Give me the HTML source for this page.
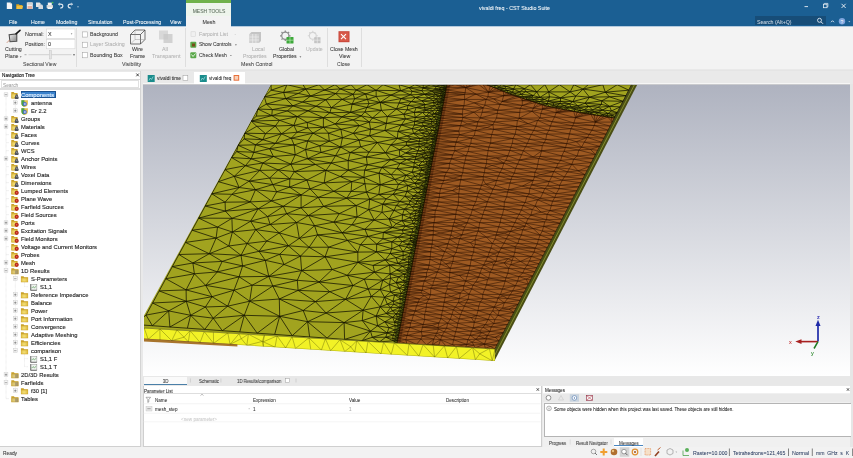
<!DOCTYPE html>
<html><head><meta charset="utf-8"><style>
html,body{margin:0;padding:0;}
body{width:853px;height:458px;overflow:hidden;position:relative;font-family:"Liberation Sans",sans-serif;}
.t{position:absolute;white-space:nowrap;line-height:1;z-index:2;-webkit-text-stroke:0.05px currentColor;will-change:transform;}
.r{position:absolute;}
svg{position:absolute;left:0;top:0;z-index:1;}
</style></head><body>
<div class="r" style="left:0px;top:0px;width:853px;height:458px;background:#e9e9e9;"></div>
<div class="r" style="left:0px;top:0px;width:853px;height:26px;background:#1b5f93;"></div>
<div class="r" style="left:186px;top:0px;width:45px;height:3px;background:#6fb24a;"></div>
<div class="r" style="left:186px;top:3px;width:45px;height:13px;background:#eef5ec;"></div>
<div class="r" style="left:186px;top:16px;width:45px;height:10px;background:#f3f3f3;"></div>
<div class="t" style="left:187.0px;top:9.00px;font-size:5.0px;color:#5a6a5a;width:44px;text-align:center">MESH TOOLS</div>
<div class="t" style="left:187.0px;top:20.00px;font-size:5.3px;color:#333;width:44px;text-align:center">Mesh</div>
<div class="t" style="left:478.7px;top:6.00px;font-size:5.33px;color:#ffffff;">vivaldi freq - CST Studio Suite</div>
<div class="t" style="left:8.9px;top:20.00px;font-size:5.25px;color:#ffffff;">File</div>
<div class="t" style="left:31.2px;top:20.00px;font-size:5.25px;color:#ffffff;">Home</div>
<div class="t" style="left:55.8px;top:20.00px;font-size:5.25px;color:#ffffff;">Modeling</div>
<div class="t" style="left:88.0px;top:20.00px;font-size:5.25px;color:#ffffff;">Simulation</div>
<div class="t" style="left:123.0px;top:20.00px;font-size:5.25px;color:#ffffff;">Post-Processing</div>
<div class="t" style="left:170.0px;top:20.00px;font-size:5.25px;color:#ffffff;">View</div>
<div class="r" style="left:755px;top:16px;width:71px;height:9px;background:#174d78;"></div>
<div class="t" style="left:756.6px;top:20.00px;font-size:5.2px;color:#c9d6e2;">Search (Alt+Q)</div>
<div class="r" style="left:0px;top:26px;width:853px;height:43px;background:#f3f3f3;"></div>
<div class="r" style="left:0px;top:26px;width:186px;height:0.8000000000000007px;background:#b4cade;"></div>
<div class="r" style="left:231px;top:26px;width:622px;height:0.8000000000000007px;background:#b4cade;"></div>
<div class="r" style="left:0px;top:69.5px;width:853px;height:1.0px;background:#e4e4e4;"></div>
<div class="r" style="left:76px;top:28px;width:1px;height:39px;background:#dedede;"></div>
<div class="r" style="left:184.5px;top:28px;width:1.0px;height:39px;background:#dedede;"></div>
<div class="r" style="left:326.5px;top:28px;width:1.0px;height:39px;background:#dedede;"></div>
<div class="r" style="left:360.5px;top:28px;width:1.0px;height:39px;background:#dedede;"></div>
<div class="t" style="left:5.3px;top:47.00px;font-size:5.3px;color:#333;">Cutting</div>
<div class="t" style="left:5.3px;top:54.00px;font-size:5.3px;color:#333;">Plane</div>
<div class="t" style="left:25.2px;top:32.00px;font-size:5.4px;color:#333;">Normal:</div>
<div class="t" style="left:25.2px;top:42.00px;font-size:5.2px;color:#333;">Position:</div>
<div class="t" style="left:48.3px;top:32.00px;font-size:5.4px;color:#222;">X</div>
<div class="t" style="left:48.0px;top:42.00px;font-size:5.4px;color:#222;">0</div>
<div class="t" style="left:23.0px;top:62.00px;font-size:5.1px;color:#444;">Sectional View</div>
<div class="t" style="left:90.2px;top:32.00px;font-size:5.25px;color:#333;">Background</div>
<div class="t" style="left:90.2px;top:42.00px;font-size:5.25px;color:#b0b0b0;">Layer Stacking</div>
<div class="t" style="left:90.2px;top:53.00px;font-size:5.25px;color:#333;">Bounding Box</div>
<div class="t" style="left:131.7px;top:47.00px;font-size:5.3px;color:#333;">Wire</div>
<div class="t" style="left:130.2px;top:54.00px;font-size:5.3px;color:#333;">Frame</div>
<div class="t" style="left:162.0px;top:47.00px;font-size:5.3px;color:#b0b0b0;">All</div>
<div class="t" style="left:152.4px;top:54.00px;font-size:5.3px;color:#b0b0b0;">Transparent</div>
<div class="t" style="left:122.0px;top:62.00px;font-size:5.3px;color:#444;">Visibility</div>
<div class="t" style="left:198.7px;top:32.00px;font-size:5.25px;color:#b0b0b0;">Farpoint List</div>
<div class="t" style="left:198.7px;top:42.00px;font-size:5.0px;color:#333;">Show Controls</div>
<div class="t" style="left:198.7px;top:53.00px;font-size:5.0px;color:#333;">Check Mesh</div>
<div class="t" style="left:252.2px;top:47.00px;font-size:5.3px;color:#b0b0b0;">Local</div>
<div class="t" style="left:243.2px;top:54.00px;font-size:5.2px;color:#b0b0b0;">Properties</div>
<div class="t" style="left:279.2px;top:47.00px;font-size:5.2px;color:#333;">Global</div>
<div class="t" style="left:273.4px;top:54.00px;font-size:5.2px;color:#333;">Properties</div>
<div class="t" style="left:305.6px;top:47.00px;font-size:5.2px;color:#b8b8b8;">Update</div>
<div class="t" style="left:241.3px;top:62.00px;font-size:5.3px;color:#444;">Mesh Control</div>
<div class="t" style="left:330.1px;top:47.00px;font-size:5.25px;color:#333;">Close Mesh</div>
<div class="t" style="left:338.5px;top:54.00px;font-size:5.3px;color:#333;">View</div>
<div class="t" style="left:337.2px;top:62.00px;font-size:5.1px;color:#444;">Close</div>
<div class="r" style="left:0px;top:71.5px;width:140px;height:374.5px;background:#ffffff;"></div>
<div class="r" style="left:0px;top:78.7px;width:140px;height:1.5999999999999943px;background:#d8d8d8;"></div>
<div class="r" style="left:1px;top:80.3px;width:138px;height:7.400000000000006px;background:#ffffff;box-sizing:border-box;border:0.5px solid #e0e0e0"></div>
<div class="r" style="left:0px;top:87.6px;width:140px;height:2.0px;background:#dedede;"></div>
<div class="r" style="left:140px;top:71px;width:1px;height:375px;background:#d4d4d4;"></div>
<div class="r" style="left:0px;top:445.6px;width:141px;height:1.0px;background:#d0d0d0;"></div>
<div class="t" style="left:2.0px;top:74.00px;font-size:4.7px;color:#111;-webkit-text-stroke:0.12px #111">Navigation Tree</div>
<div class="t" style="left:2.5px;top:84.00px;font-size:4.8px;color:#a0a0a0;">Search</div>
<div class="r" style="left:20.8px;top:90.6px;width:35.2px;height:7.700000000000003px;background:#3a82cc;box-sizing:border-box;border:0.8px solid #1b5290"></div>
<div class="t" style="left:21.2px;top:93.00px;font-size:5.85px;color:#eaf4ff;-webkit-text-stroke:0.12px #eaf4ff">Components</div>
<div class="t" style="left:30.5px;top:101.00px;font-size:5.85px;color:#1e1e1e;-webkit-text-stroke:0.12px #1e1e1e">antenna</div>
<div class="t" style="left:30.5px;top:109.00px;font-size:5.85px;color:#1e1e1e;-webkit-text-stroke:0.12px #1e1e1e">Er 2.2</div>
<div class="t" style="left:21.2px;top:117.00px;font-size:5.85px;color:#1e1e1e;-webkit-text-stroke:0.12px #1e1e1e">Groups</div>
<div class="t" style="left:21.2px;top:125.00px;font-size:5.85px;color:#1e1e1e;-webkit-text-stroke:0.12px #1e1e1e">Materials</div>
<div class="t" style="left:21.2px;top:133.00px;font-size:5.85px;color:#1e1e1e;-webkit-text-stroke:0.12px #1e1e1e">Faces</div>
<div class="t" style="left:21.2px;top:141.00px;font-size:5.85px;color:#1e1e1e;-webkit-text-stroke:0.12px #1e1e1e">Curves</div>
<div class="t" style="left:21.2px;top:149.00px;font-size:5.85px;color:#1e1e1e;-webkit-text-stroke:0.12px #1e1e1e">WCS</div>
<div class="t" style="left:21.2px;top:157.00px;font-size:5.85px;color:#1e1e1e;-webkit-text-stroke:0.12px #1e1e1e">Anchor Points</div>
<div class="t" style="left:21.2px;top:165.00px;font-size:5.85px;color:#1e1e1e;-webkit-text-stroke:0.12px #1e1e1e">Wires</div>
<div class="t" style="left:21.2px;top:173.00px;font-size:5.85px;color:#1e1e1e;-webkit-text-stroke:0.12px #1e1e1e">Voxel Data</div>
<div class="t" style="left:21.2px;top:181.00px;font-size:5.85px;color:#1e1e1e;-webkit-text-stroke:0.12px #1e1e1e">Dimensions</div>
<div class="t" style="left:21.2px;top:189.00px;font-size:5.85px;color:#1e1e1e;-webkit-text-stroke:0.12px #1e1e1e">Lumped Elements</div>
<div class="t" style="left:21.2px;top:197.00px;font-size:5.85px;color:#1e1e1e;-webkit-text-stroke:0.12px #1e1e1e">Plane Wave</div>
<div class="t" style="left:21.2px;top:205.00px;font-size:5.85px;color:#1e1e1e;-webkit-text-stroke:0.12px #1e1e1e">Farfield Sources</div>
<div class="t" style="left:21.2px;top:213.00px;font-size:5.85px;color:#1e1e1e;-webkit-text-stroke:0.12px #1e1e1e">Field Sources</div>
<div class="t" style="left:21.2px;top:221.00px;font-size:5.85px;color:#1e1e1e;-webkit-text-stroke:0.12px #1e1e1e">Ports</div>
<div class="t" style="left:21.2px;top:229.00px;font-size:5.85px;color:#1e1e1e;-webkit-text-stroke:0.12px #1e1e1e">Excitation Signals</div>
<div class="t" style="left:21.2px;top:237.00px;font-size:5.85px;color:#1e1e1e;-webkit-text-stroke:0.12px #1e1e1e">Field Monitors</div>
<div class="t" style="left:21.2px;top:245.00px;font-size:5.85px;color:#1e1e1e;-webkit-text-stroke:0.12px #1e1e1e">Voltage and Current Monitors</div>
<div class="t" style="left:21.2px;top:253.00px;font-size:5.85px;color:#1e1e1e;-webkit-text-stroke:0.12px #1e1e1e">Probes</div>
<div class="t" style="left:21.2px;top:261.00px;font-size:5.85px;color:#1e1e1e;-webkit-text-stroke:0.12px #1e1e1e">Mesh</div>
<div class="t" style="left:21.2px;top:269.00px;font-size:5.85px;color:#1e1e1e;-webkit-text-stroke:0.12px #1e1e1e">1D Results</div>
<div class="t" style="left:30.5px;top:277.00px;font-size:5.85px;color:#1e1e1e;-webkit-text-stroke:0.12px #1e1e1e">S-Parameters</div>
<div class="t" style="left:39.8px;top:285.00px;font-size:5.85px;color:#1e1e1e;-webkit-text-stroke:0.12px #1e1e1e">S1,1</div>
<div class="t" style="left:30.5px;top:293.00px;font-size:5.85px;color:#1e1e1e;-webkit-text-stroke:0.12px #1e1e1e">Reference Impedance</div>
<div class="t" style="left:30.5px;top:301.00px;font-size:5.85px;color:#1e1e1e;-webkit-text-stroke:0.12px #1e1e1e">Balance</div>
<div class="t" style="left:30.5px;top:309.00px;font-size:5.85px;color:#1e1e1e;-webkit-text-stroke:0.12px #1e1e1e">Power</div>
<div class="t" style="left:30.5px;top:317.00px;font-size:5.85px;color:#1e1e1e;-webkit-text-stroke:0.12px #1e1e1e">Port Information</div>
<div class="t" style="left:30.5px;top:325.00px;font-size:5.85px;color:#1e1e1e;-webkit-text-stroke:0.12px #1e1e1e">Convergence</div>
<div class="t" style="left:30.5px;top:333.00px;font-size:5.85px;color:#1e1e1e;-webkit-text-stroke:0.12px #1e1e1e">Adaptive Meshing</div>
<div class="t" style="left:30.5px;top:341.00px;font-size:5.85px;color:#1e1e1e;-webkit-text-stroke:0.12px #1e1e1e">Efficiencies</div>
<div class="t" style="left:30.5px;top:349.00px;font-size:5.85px;color:#1e1e1e;-webkit-text-stroke:0.12px #1e1e1e">comparison</div>
<div class="t" style="left:39.8px;top:357.00px;font-size:5.85px;color:#1e1e1e;-webkit-text-stroke:0.12px #1e1e1e">S1,1 F</div>
<div class="t" style="left:39.8px;top:365.00px;font-size:5.85px;color:#1e1e1e;-webkit-text-stroke:0.12px #1e1e1e">S1,1 T</div>
<div class="t" style="left:21.2px;top:373.00px;font-size:5.85px;color:#1e1e1e;-webkit-text-stroke:0.12px #1e1e1e">2D/3D Results</div>
<div class="t" style="left:21.2px;top:381.00px;font-size:5.85px;color:#1e1e1e;-webkit-text-stroke:0.12px #1e1e1e">Farfields</div>
<div class="t" style="left:30.5px;top:389.00px;font-size:5.85px;color:#1e1e1e;-webkit-text-stroke:0.12px #1e1e1e">f30 [1]</div>
<div class="t" style="left:21.2px;top:397.00px;font-size:5.85px;color:#1e1e1e;-webkit-text-stroke:0.12px #1e1e1e">Tables</div>
<div class="r" style="left:143px;top:70.5px;width:707px;height:12.0px;background:#e9e9e9;"></div>
<div class="r" style="left:143px;top:82.5px;width:707px;height:1.0px;background:#f6f6f6;"></div>
<div class="r" style="left:194.2px;top:71.5px;width:51.30000000000001px;height:12.0px;background:#ffffff;"></div>
<div class="t" style="left:156.9px;top:77.00px;font-size:4.85px;color:#222;">vivaldi time</div>
<div class="t" style="left:209.0px;top:77.00px;font-size:4.7px;color:#222;">vivaldi freq</div>
<div class="r" style="left:143px;top:83.5px;width:707px;height:292.0px;background:linear-gradient(#c9cacd 0px,#c9cacd 1px,#afb3c0 1.5px,#afb3c0 2px,#ffffff 292px);"></div>
<div class="t" style="left:816.6px;top:315.00px;font-size:5.5px;color:#2a2ab0;">z</div>
<div class="t" style="left:788.8px;top:340.00px;font-size:5.5px;color:#c02020;">x</div>
<div class="t" style="left:810.8px;top:351.00px;font-size:5.5px;color:#208020;">y</div>
<div class="r" style="left:143px;top:375.5px;width:707px;height:9.0px;background:#e8e8e8;"></div>
<div class="r" style="left:143.5px;top:376.5px;width:43.5px;height:8.5px;background:#fafafa;"></div>
<div class="r" style="left:143.5px;top:384px;width:43.5px;height:1px;background:#4a7fa8;"></div>
<div class="t" style="left:143.5px;top:380.00px;font-size:4.5px;color:#333;width:43.5px;text-align:center">3D</div>
<div class="t" style="left:198.6px;top:380.00px;font-size:4.5px;color:#333;transform:scaleX(0.95);transform-origin:0 0">Schematic</div>
<div class="t" style="left:237.3px;top:380.00px;font-size:4.5px;color:#333;transform:scaleX(0.95);transform-origin:0 0">1D Results\comparison</div>
<div class="r" style="left:850px;top:83.5px;width:3px;height:374.5px;background:#e6e6e6;"></div>
<div class="r" style="left:142.5px;top:386.3px;width:398.5px;height:60.30000000000001px;background:#ffffff;"></div>
<div class="r" style="left:142.5px;top:393.3px;width:398.5px;height:1.0px;background:#dedede;"></div>
<div class="r" style="left:142.5px;top:445.6px;width:398.5px;height:1.0px;background:#cfcfcf;"></div>
<div class="r" style="left:142.5px;top:386.3px;width:1.0999999999999943px;height:60.30000000000001px;background:#cfcfcf;"></div>
<div class="r" style="left:540.5px;top:386.3px;width:1.0px;height:60.30000000000001px;background:#cfcfcf;"></div>
<div class="t" style="left:144.2px;top:390.00px;font-size:4.6px;color:#222;transform:scaleX(0.96);transform-origin:0 0">Parameter List</div>
<div class="t" style="left:155.2px;top:399.00px;font-size:4.6px;color:#333;">Name</div>
<div class="t" style="left:252.5px;top:399.00px;font-size:4.6px;color:#333;">Expression</div>
<div class="t" style="left:349.0px;top:399.00px;font-size:4.6px;color:#333;">Value</div>
<div class="t" style="left:446.0px;top:399.00px;font-size:4.6px;color:#333;">Description</div>
<div class="t" style="left:155.2px;top:408.00px;font-size:4.6px;color:#333;">mesh_step</div>
<div class="t" style="left:252.5px;top:408.00px;font-size:4.6px;color:#333;">1</div>
<div class="t" style="left:349.0px;top:408.00px;font-size:4.6px;color:#aaa;">1</div>
<div class="t" style="left:181.0px;top:418.00px;font-size:4.6px;color:#c8c8c8;">&lt;new parameter&gt;</div>
<div class="r" style="left:542.7px;top:386.3px;width:307.29999999999995px;height:60.30000000000001px;background:#f0f0f0;"></div>
<div class="r" style="left:542.7px;top:386.3px;width:307.29999999999995px;height:7.199999999999989px;background:#ffffff;"></div>
<div class="t" style="left:544.7px;top:389.00px;font-size:4.6px;color:#222;transform:scaleX(0.95);transform-origin:0 0">Messages</div>
<div class="r" style="left:542.7px;top:393.5px;width:307.29999999999995px;height:8.5px;background:#e9e9e9;"></div>
<div class="r" style="left:543.7px;top:402.8px;width:307.29999999999995px;height:34.19999999999999px;background:#ffffff;box-sizing:border-box;border:0.6px solid #b4b4b4;border-right:none"></div>
<div class="t" style="left:554.3px;top:408.00px;font-size:4.48px;color:#222;">Some objects were hidden when this project was last saved. These objects are still hidden.</div>
<div class="r" style="left:614.3px;top:438px;width:29.0px;height:8.5px;background:#ffffff;"></div>
<div class="r" style="left:614.3px;top:445.2px;width:29.0px;height:1.1999999999999886px;background:#4a86c0;"></div>
<div class="t" style="left:548.5px;top:442.00px;font-size:4.6px;color:#333;transform:scaleX(0.93);transform-origin:0 0">Progress</div>
<div class="t" style="left:575.6px;top:442.00px;font-size:4.6px;color:#333;transform:scaleX(0.93);transform-origin:0 0">Result Navigator</div>
<div class="t" style="left:619.0px;top:442.00px;font-size:4.6px;color:#333;transform:scaleX(0.93);transform-origin:0 0">Messages</div>
<div class="r" style="left:0px;top:446.6px;width:853px;height:11.399999999999977px;background:#f2f2f2;"></div>
<div class="t" style="left:2.8px;top:452.00px;font-size:4.85px;color:#333;">Ready</div>
<div class="t" style="left:693.3px;top:451.00px;font-size:5.24px;color:#2c3e62;">Raster=10.000</div>
<div class="t" style="left:732.7px;top:451.00px;font-size:5.23px;color:#2c3e62;">Tetrahedrons=121,465</div>
<div class="t" style="left:791.8px;top:451.00px;font-size:5.3px;color:#2c3e62;">Normal</div>
<div class="t" style="left:815.6px;top:451.00px;font-size:5.1px;color:#2c3e62;">mm&nbsp;&nbsp;GHz&nbsp;&nbsp;s&nbsp;&nbsp;K</div>
<svg width="853" height="458" viewBox="0 0 853 458"><defs><radialGradient id="fg" cx="0.45" cy="0.55" r="0.7"><stop offset="0" stop-color="#f6e47c"/><stop offset="1" stop-color="#d4ac30"/></radialGradient><radialGradient id="fr" cx="0.45" cy="0.55" r="0.7"><stop offset="0" stop-color="#e8d480"/><stop offset="1" stop-color="#bfa040"/></radialGradient></defs><path d="M6.8 2.4h3.6l1.7 1.7v4.9h-5.3z" fill="#f6f6f6"/><path d="M10.4 2.4v1.7h1.7" fill="#c8c8c8"/>
<path d="M16.2 4.2h2.6l0.8 0.9h2.6v3.8h-6z" fill="#d9a020"/><path d="M16.8 5.8h6.4l-1 3.1h-5.6z" fill="#f0c040"/>
<rect x="26.8" y="2.4" width="6" height="6.5" fill="#ececec"/><rect x="27.6" y="2.4" width="4.4" height="2.4" fill="#d0d0d0"/><rect x="27.6" y="6" width="4.4" height="2.9" fill="#e6b0a0"/>
<path d="M36 2.6h3.6l1 1v3.4h-4.6z" fill="#e6e6e6"/><path d="M38.4 4.4h3.6l1 1v3.6h-4.6z" fill="#d4dae0"/>
<rect x="46.6" y="5" width="6.4" height="3.2" rx="0.6" fill="#d8d8d8"/><rect x="47.8" y="2.6" width="4" height="2.6" fill="#f4f4f4"/><rect x="47.6" y="7.4" width="4.4" height="1.6" fill="#f8f8f8"/><circle cx="52.6" cy="2.6" r="0.9" fill="#4cc050"/>
<path d="M58 4.2 L59.6 2.6 L59.6 5.8Z" fill="#e8eef4"/><path d="M59.5 4.2 Q63.2 3.8 62.8 6.5 Q62.3 8.2 60.2 8" stroke="#e8eef4" stroke-width="1.1" fill="none"/>
<path d="M73 4.2 L71.4 2.6 L71.4 5.8Z" fill="#e8eef4"/><path d="M71.5 4.2 Q67.8 3.8 68.2 6.5 Q68.7 8.2 70.8 8" stroke="#e8eef4" stroke-width="1.1" fill="none"/>
<path d="M77.2 6.8h1.6" stroke="#c8d4e0" stroke-width="0.8"/>
<path d="M804.5 6.6h3.5" stroke="#e8eef4" stroke-width="0.9"/>
<rect x="823.5" y="4.2" width="3.5" height="3.5" fill="none" stroke="#e8eef4" stroke-width="0.8"/><path d="M824.5 4.2v-0.8h3.4v3.4h-0.9" fill="none" stroke="#e8eef4" stroke-width="0.7"/>
<path d="M841.5 3.8l4.2 4.2M845.7 3.8l-4.2 4.2" stroke="#f0f4f8" stroke-width="0.9"/>
<circle cx="819.5" cy="20.3" r="2" fill="none" stroke="#e0e8f0" stroke-width="0.9"/><path d="M821 21.8l2 2" stroke="#e0e8f0" stroke-width="1"/>
<path d="M831 22.2l1.5-1.5l1.5 1.5" stroke="#e0e8f0" stroke-width="0.9" fill="none"/>
<circle cx="842" cy="21.3" r="3.2" fill="#7fa6de"/><text x="840.6" y="23.5" font-size="5" fill="#fff" font-family="Liberation Sans">?</text>
<path d="M848.3 21.2h2l-1 1z" fill="#d0dcea"/>
<defs><linearGradient id="cpg" x1="0" y1="0" x2="1" y2="1"><stop offset="0" stop-color="#e8e8e8"/><stop offset="1" stop-color="#8a8a8a"/></linearGradient></defs>
<path d="M8.5 34.3 L17.3 33.2 L17.3 41.8 L9.5 42.3Z" fill="#4a4a4a"/><path d="M9.7 35.2 L16.3 34.4 L16.3 40.9 L10.4 41.2Z" fill="url(#cpg)"/>
<path d="M16 33.8 L20 30.3" stroke="#1a1a1a" stroke-width="1.6" stroke-linecap="round"/><path d="M6.8 42.8 L9.6 40" stroke="#c07050" stroke-width="0.7"/>
<rect x="46.5" y="29" width="28.5" height="9.3" fill="#fff" stroke="#cfcfcf" stroke-width="0.5"/>
<rect x="46.5" y="39.5" width="28.5" height="9.3" fill="#fff" stroke="#cfcfcf" stroke-width="0.5"/>
<path d="M70.8 33.6h1.6l-0.8 0.9z" fill="#555"/>
<path d="M24.5 54.7h2" stroke="#777" stroke-width="0.6"/>
<path d="M28.5 54.7h43" stroke="#c8c8c8" stroke-width="0.8"/>
<rect x="49.2" y="50.5" width="2.4" height="8.5" fill="#e4e4e4" stroke="#bdbdbd" stroke-width="0.4"/>
<circle cx="74" cy="54.7" r="0.8" fill="#555"/>
<path d="M19.8 56.5h1.8l-0.9 0.9z" fill="#333"/>
<rect x="82.3" y="31.9" width="5.2" height="5.2" fill="#fff" stroke="#9a9a9a" stroke-width="0.5"/>
<rect x="82.3" y="42.199999999999996" width="5.2" height="5.2" fill="#fff" stroke="#9a9a9a" stroke-width="0.5"/>
<rect x="82.3" y="52.6" width="5.2" height="5.2" fill="#fff" stroke="#9a9a9a" stroke-width="0.5"/>
<g fill="none" stroke="#3a3a3a" stroke-width="0.7"><path d="M130.5 34.5 L135 30 L145 30 L145 39.5 L140.5 44 L130.5 44Z"/><path d="M130.5 34.5 L140.5 34.5 L145 30 M140.5 34.5 L140.5 44"/><path d="M135 30 L135 39.5 L145 39.5 M135 39.5 L130.5 44" stroke="#888" stroke-width="0.4"/></g>
<rect x="159" y="30.5" width="9" height="9" fill="#d8d8d8"/><rect x="163.5" y="34" width="9" height="9" fill="#c8c8c8" opacity="0.8"/>
<rect x="191" y="31.8" width="4.3" height="4.6" fill="#f0f0f0" stroke="#cfcfcf" stroke-width="0.5"/>
<rect x="190.3" y="41.8" width="6" height="6" rx="1" fill="#5aa84a"/><rect x="192" y="43.5" width="3" height="3" fill="#7a4a1a"/>
<rect x="190.3" y="52.2" width="6" height="6" rx="1" fill="#5aa84a"/><path d="M191.5 54.5 l1.5 2 l2.5 -3" stroke="#fff" stroke-width="0.8" fill="none"/>
<path d="M234.5 34h1.4l-0.7 0.8z" fill="#bbb"/><path d="M235 44.6h1.8l-0.9 0.9z" fill="#333"/><path d="M230 55.2h1.8l-0.9 0.9z" fill="#333"/>
<path d="M249.5 34l2-2h9.5v9l-2 2h-9.5z" fill="#c4c4c4"/><path d="M249.5 34h9.5v9h-9.5z" fill="#d0d0d0"/><path d="M249.5 37h9.5M249.5 40h9.5M252.7 34v9M255.9 34v9" stroke="#f2f2f2" stroke-width="0.6"/>
<g fill="none" stroke="#8c8c8c" stroke-width="1.2"><circle cx="285.3" cy="35.8" r="3.6"/></g><g stroke="#8c8c8c" stroke-width="1.3"><path d="M285.3 30.5v1.6M285.3 39.5v1.6M280 35.8h1.6M289 35.8h1.6M281.5 32l1.1 1.1M288 38.5l1.1 1.1M281.5 39.6l1.1-1.1M288 33.1l1.1-1.1"/></g><circle cx="285.3" cy="35.8" r="1.6" fill="#f3f3f3"/>
<rect x="286.5" y="37" width="7" height="6.5" rx="0.5" fill="#3da83a"/><path d="M286.5 40.2h7M290 37v6.5" stroke="#c8f0c0" stroke-width="0.6"/>
<g fill="none" stroke="#d4d4d4" stroke-width="1.1"><circle cx="312.8" cy="35.8" r="3.4"/></g><g stroke="#d4d4d4" stroke-width="1.1"><path d="M312.8 30.8v1.4M312.8 39.4v1.4M307.8 35.8h1.4M316.4 35.8h1.4M309.3 32.3l1 1M315.3 32.3l-1 1"/></g>
<rect x="314.2" y="37.2" width="6.3" height="6" fill="#c4c4c4"/><path d="M314.2 40.2h6.3M317.3 37.2v6" stroke="#eeeeee" stroke-width="0.6"/>
<path d="M299.5 56.5h1.8l-0.9 0.9z" fill="#333"/>
<rect x="338.5" y="31.2" width="11" height="11" fill="#c8463a"/><rect x="339.5" y="32.2" width="9" height="9" fill="#d85a4a"/><path d="M341 34.2l5 5M346 34.2l-5 5" stroke="#fff" stroke-width="1.1"/>
<path d="M136.3 73.5l2.6 2.8M138.9 73.5l-2.6 2.8" stroke="#222" stroke-width="0.8"/>
<g stroke="#cfcfcf" stroke-width="0.5" stroke-dasharray="0.6 0.6"><path d="M6 94.7V398.7"/><path d="M15.3 102.7v8 M15.3 270.7v80 M24.5 278.7v8 M24.5 350.7v16 M15.3 382.7v8"/></g>
<rect x="4.1" y="92.8" width="3.8" height="3.8" fill="#f6f6f6" stroke="#c4c4c4" stroke-width="0.4"/><path d="M4.8 94.7h2.4" stroke="#555" stroke-width="0.5"/>
<path d="M11.3 92.0h2.4l0.8 1h3v5.6h-6.2z" fill="#c9a028"/><rect x="11.700000000000001" y="93.5" width="5.6" height="4.7" fill="url(#fg)"/>
<path d="M15.9 94.3l1.5 0.2l1.3 3.2l-0.5 1.4h-3l-0.6-1.4z" fill="#4e525c"/><path d="M16.5 95.7l0.6 1.6" stroke="#d8d8d8" stroke-width="0.6"/>
<rect x="13.4" y="100.8" width="3.8" height="3.8" fill="#f6f6f6" stroke="#c4c4c4" stroke-width="0.4"/><path d="M14.100000000000001 102.7h2.4" stroke="#555" stroke-width="0.5"/><path d="M15.3 101.5v2.4" stroke="#555" stroke-width="0.5"/>
<path d="M21.4 100.3h6.5v3.2q0 2.8-3.2 3.4q-3.3-0.6-3.3-3.4z" fill="#e2c050"/><path d="M21.4 100.3h3v6.5q-3-0.6-3-3.3z" fill="#4aa04a"/><circle cx="24.9" cy="104.0" r="1.9" fill="#4a6ad0"/><circle cx="24.9" cy="104.0" r="0.8" fill="#fff"/>
<rect x="13.4" y="108.8" width="3.8" height="3.8" fill="#f6f6f6" stroke="#c4c4c4" stroke-width="0.4"/><path d="M14.100000000000001 110.7h2.4" stroke="#555" stroke-width="0.5"/><path d="M15.3 109.5v2.4" stroke="#555" stroke-width="0.5"/>
<path d="M21.4 108.3h6.5v3.2q0 2.8-3.2 3.4q-3.3-0.6-3.3-3.4z" fill="#e2c050"/><path d="M21.4 108.3h3v6.5q-3-0.6-3-3.3z" fill="#4aa04a"/><circle cx="24.9" cy="112.0" r="1.9" fill="#4a6ad0"/><circle cx="24.9" cy="112.0" r="0.8" fill="#fff"/>
<rect x="4.1" y="116.8" width="3.8" height="3.8" fill="#f6f6f6" stroke="#c4c4c4" stroke-width="0.4"/><path d="M4.8 118.7h2.4" stroke="#555" stroke-width="0.5"/><path d="M6.0 117.5v2.4" stroke="#555" stroke-width="0.5"/>
<path d="M11.3 116.0h2.4l0.8 1h3v5.6h-6.2z" fill="#c9a028"/><rect x="11.700000000000001" y="117.5" width="5.6" height="4.7" fill="url(#fg)"/>
<path d="M15.9 118.3l1.5 0.2l1.3 3.2l-0.5 1.4h-3l-0.6-1.4z" fill="#4e525c"/><path d="M16.5 119.7l0.6 1.6" stroke="#d8d8d8" stroke-width="0.6"/>
<rect x="4.1" y="124.8" width="3.8" height="3.8" fill="#f6f6f6" stroke="#c4c4c4" stroke-width="0.4"/><path d="M4.8 126.7h2.4" stroke="#555" stroke-width="0.5"/><path d="M6.0 125.5v2.4" stroke="#555" stroke-width="0.5"/>
<path d="M11.3 124.0h2.4l0.8 1h3v5.6h-6.2z" fill="#c9a028"/><rect x="11.700000000000001" y="125.5" width="5.6" height="4.7" fill="url(#fg)"/>
<path d="M15.9 126.3l1.5 0.2l1.3 3.2l-0.5 1.4h-3l-0.6-1.4z" fill="#4e525c"/><path d="M16.5 127.7l0.6 1.6" stroke="#d8d8d8" stroke-width="0.6"/>
<path d="M6.0 134.7h3.5" stroke="#cfcfcf" stroke-width="0.5" stroke-dasharray="0.6 0.6"/>
<path d="M11.3 132.0h2.4l0.8 1h3v5.6h-6.2z" fill="#c9a028"/><rect x="11.700000000000001" y="133.5" width="5.6" height="4.7" fill="url(#fg)"/>
<path d="M15.9 134.29999999999998l1.5 0.2l1.3 3.2l-0.5 1.4h-3l-0.6-1.4z" fill="#4e525c"/><path d="M16.5 135.7l0.6 1.6" stroke="#d8d8d8" stroke-width="0.6"/>
<path d="M6.0 142.7h3.5" stroke="#cfcfcf" stroke-width="0.5" stroke-dasharray="0.6 0.6"/>
<path d="M11.3 140.0h2.4l0.8 1h3v5.6h-6.2z" fill="#c9a028"/><rect x="11.700000000000001" y="141.5" width="5.6" height="4.7" fill="url(#fg)"/>
<path d="M15.9 142.29999999999998l1.5 0.2l1.3 3.2l-0.5 1.4h-3l-0.6-1.4z" fill="#4e525c"/><path d="M16.5 143.7l0.6 1.6" stroke="#d8d8d8" stroke-width="0.6"/>
<path d="M6.0 150.7h3.5" stroke="#cfcfcf" stroke-width="0.5" stroke-dasharray="0.6 0.6"/>
<path d="M11.3 148.0h2.4l0.8 1h3v5.6h-6.2z" fill="#c9a028"/><rect x="11.700000000000001" y="149.5" width="5.6" height="4.7" fill="url(#fg)"/>
<path d="M15.9 150.29999999999998l1.5 0.2l1.3 3.2l-0.5 1.4h-3l-0.6-1.4z" fill="#4e525c"/><path d="M16.5 151.7l0.6 1.6" stroke="#d8d8d8" stroke-width="0.6"/>
<rect x="4.1" y="156.79999999999998" width="3.8" height="3.8" fill="#f6f6f6" stroke="#c4c4c4" stroke-width="0.4"/><path d="M4.8 158.7h2.4" stroke="#555" stroke-width="0.5"/><path d="M6.0 157.5v2.4" stroke="#555" stroke-width="0.5"/>
<path d="M11.3 156.0h2.4l0.8 1h3v5.6h-6.2z" fill="#c9a028"/><rect x="11.700000000000001" y="157.5" width="5.6" height="4.7" fill="url(#fg)"/>
<path d="M15.9 158.29999999999998l1.5 0.2l1.3 3.2l-0.5 1.4h-3l-0.6-1.4z" fill="#4e525c"/><path d="M16.5 159.7l0.6 1.6" stroke="#d8d8d8" stroke-width="0.6"/>
<path d="M6.0 166.7h3.5" stroke="#cfcfcf" stroke-width="0.5" stroke-dasharray="0.6 0.6"/>
<path d="M11.3 164.0h2.4l0.8 1h3v5.6h-6.2z" fill="#c9a028"/><rect x="11.700000000000001" y="165.5" width="5.6" height="4.7" fill="url(#fg)"/>
<path d="M15.9 166.29999999999998l1.5 0.2l1.3 3.2l-0.5 1.4h-3l-0.6-1.4z" fill="#4e525c"/><path d="M16.5 167.7l0.6 1.6" stroke="#d8d8d8" stroke-width="0.6"/>
<path d="M6.0 174.7h3.5" stroke="#cfcfcf" stroke-width="0.5" stroke-dasharray="0.6 0.6"/>
<path d="M11.3 172.0h2.4l0.8 1h3v5.6h-6.2z" fill="#c9a028"/><rect x="11.700000000000001" y="173.5" width="5.6" height="4.7" fill="url(#fg)"/>
<path d="M15.9 174.29999999999998l1.5 0.2l1.3 3.2l-0.5 1.4h-3l-0.6-1.4z" fill="#4e525c"/><path d="M16.5 175.7l0.6 1.6" stroke="#d8d8d8" stroke-width="0.6"/>
<path d="M6.0 182.7h3.5" stroke="#cfcfcf" stroke-width="0.5" stroke-dasharray="0.6 0.6"/>
<path d="M11.3 180.0h2.4l0.8 1h3v5.6h-6.2z" fill="#c9a028"/><rect x="11.700000000000001" y="181.5" width="5.6" height="4.7" fill="url(#fg)"/>
<path d="M15.9 182.29999999999998l1.5 0.2l1.3 3.2l-0.5 1.4h-3l-0.6-1.4z" fill="#4e525c"/><path d="M16.5 183.7l0.6 1.6" stroke="#d8d8d8" stroke-width="0.6"/>
<path d="M6.0 190.7h3.5" stroke="#cfcfcf" stroke-width="0.5" stroke-dasharray="0.6 0.6"/>
<path d="M11.3 188.0h2.4l0.8 1h3v5.6h-6.2z" fill="#c9a028"/><rect x="11.700000000000001" y="189.5" width="5.6" height="4.7" fill="url(#fg)"/>
<circle cx="16.700000000000003" cy="192.79999999999998" r="2.1" fill="#b8281a"/><circle cx="16.700000000000003" cy="192.79999999999998" r="0.7" fill="#e07060"/>
<path d="M6.0 198.7h3.5" stroke="#cfcfcf" stroke-width="0.5" stroke-dasharray="0.6 0.6"/>
<path d="M11.3 196.0h2.4l0.8 1h3v5.6h-6.2z" fill="#c9a028"/><rect x="11.700000000000001" y="197.5" width="5.6" height="4.7" fill="url(#fg)"/>
<circle cx="16.700000000000003" cy="200.79999999999998" r="2.1" fill="#b8281a"/><circle cx="16.700000000000003" cy="200.79999999999998" r="0.7" fill="#e07060"/>
<path d="M6.0 206.7h3.5" stroke="#cfcfcf" stroke-width="0.5" stroke-dasharray="0.6 0.6"/>
<path d="M11.3 204.0h2.4l0.8 1h3v5.6h-6.2z" fill="#c9a028"/><rect x="11.700000000000001" y="205.5" width="5.6" height="4.7" fill="url(#fg)"/>
<circle cx="16.700000000000003" cy="208.79999999999998" r="2.1" fill="#b8281a"/><circle cx="16.700000000000003" cy="208.79999999999998" r="0.7" fill="#e07060"/>
<path d="M6.0 214.7h3.5" stroke="#cfcfcf" stroke-width="0.5" stroke-dasharray="0.6 0.6"/>
<path d="M11.3 212.0h2.4l0.8 1h3v5.6h-6.2z" fill="#c9a028"/><rect x="11.700000000000001" y="213.5" width="5.6" height="4.7" fill="url(#fg)"/>
<circle cx="16.700000000000003" cy="216.79999999999998" r="2.1" fill="#b8281a"/><circle cx="16.700000000000003" cy="216.79999999999998" r="0.7" fill="#e07060"/>
<rect x="4.1" y="220.79999999999998" width="3.8" height="3.8" fill="#f6f6f6" stroke="#c4c4c4" stroke-width="0.4"/><path d="M4.8 222.7h2.4" stroke="#555" stroke-width="0.5"/><path d="M6.0 221.5v2.4" stroke="#555" stroke-width="0.5"/>
<path d="M11.3 220.0h2.4l0.8 1h3v5.6h-6.2z" fill="#c9a028"/><rect x="11.700000000000001" y="221.5" width="5.6" height="4.7" fill="url(#fg)"/>
<circle cx="16.700000000000003" cy="224.79999999999998" r="2.1" fill="#b8281a"/><circle cx="16.700000000000003" cy="224.79999999999998" r="0.7" fill="#e07060"/>
<rect x="4.1" y="228.79999999999998" width="3.8" height="3.8" fill="#f6f6f6" stroke="#c4c4c4" stroke-width="0.4"/><path d="M4.8 230.7h2.4" stroke="#555" stroke-width="0.5"/><path d="M6.0 229.5v2.4" stroke="#555" stroke-width="0.5"/>
<path d="M11.3 228.0h2.4l0.8 1h3v5.6h-6.2z" fill="#c9a028"/><rect x="11.700000000000001" y="229.5" width="5.6" height="4.7" fill="url(#fg)"/>
<circle cx="16.700000000000003" cy="232.79999999999998" r="2.1" fill="#b8281a"/><circle cx="16.700000000000003" cy="232.79999999999998" r="0.7" fill="#e07060"/>
<rect x="4.1" y="236.79999999999998" width="3.8" height="3.8" fill="#f6f6f6" stroke="#c4c4c4" stroke-width="0.4"/><path d="M4.8 238.7h2.4" stroke="#555" stroke-width="0.5"/><path d="M6.0 237.5v2.4" stroke="#555" stroke-width="0.5"/>
<path d="M11.3 236.0h2.4l0.8 1h3v5.6h-6.2z" fill="#c9a028"/><rect x="11.700000000000001" y="237.5" width="5.6" height="4.7" fill="url(#fg)"/>
<circle cx="16.700000000000003" cy="240.79999999999998" r="2.1" fill="#b8281a"/><circle cx="16.700000000000003" cy="240.79999999999998" r="0.7" fill="#e07060"/>
<path d="M6.0 246.7h3.5" stroke="#cfcfcf" stroke-width="0.5" stroke-dasharray="0.6 0.6"/>
<path d="M11.3 244.0h2.4l0.8 1h3v5.6h-6.2z" fill="#c9a028"/><rect x="11.700000000000001" y="245.5" width="5.6" height="4.7" fill="url(#fg)"/>
<circle cx="16.700000000000003" cy="248.79999999999998" r="2.1" fill="#b8281a"/><circle cx="16.700000000000003" cy="248.79999999999998" r="0.7" fill="#e07060"/>
<path d="M6.0 254.7h3.5" stroke="#cfcfcf" stroke-width="0.5" stroke-dasharray="0.6 0.6"/>
<path d="M11.3 252.0h2.4l0.8 1h3v5.6h-6.2z" fill="#c9a028"/><rect x="11.700000000000001" y="253.5" width="5.6" height="4.7" fill="url(#fg)"/>
<circle cx="16.700000000000003" cy="256.8" r="2.1" fill="#b8281a"/><circle cx="16.700000000000003" cy="256.8" r="0.7" fill="#e07060"/>
<rect x="4.1" y="260.8" width="3.8" height="3.8" fill="#f6f6f6" stroke="#c4c4c4" stroke-width="0.4"/><path d="M4.8 262.7h2.4" stroke="#555" stroke-width="0.5"/><path d="M6.0 261.5v2.4" stroke="#555" stroke-width="0.5"/>
<path d="M11.3 260.0h2.4l0.8 1h3v5.6h-6.2z" fill="#c9a028"/><rect x="11.700000000000001" y="261.5" width="5.6" height="4.7" fill="url(#fg)"/>
<circle cx="16.700000000000003" cy="264.8" r="2.1" fill="#b8281a"/><circle cx="16.700000000000003" cy="264.8" r="0.7" fill="#e07060"/>
<rect x="4.1" y="268.8" width="3.8" height="3.8" fill="#f6f6f6" stroke="#c4c4c4" stroke-width="0.4"/><path d="M4.8 270.7h2.4" stroke="#555" stroke-width="0.5"/>
<path d="M11.3 268.3h2.6l0.8 1h3.8v4.9h-7.2z" fill="#c9a028"/><rect x="11.600000000000001" y="269.8" width="6.6" height="4.2" fill="url(#fr)"/>
<rect x="14.9" y="270.3" width="3.4" height="3.6" fill="#8a8070" opacity="0.55"/>
<rect x="13.4" y="276.8" width="3.8" height="3.8" fill="#f6f6f6" stroke="#c4c4c4" stroke-width="0.4"/><path d="M14.100000000000001 278.7h2.4" stroke="#555" stroke-width="0.5"/>
<path d="M20.9 276.3h2.6l0.8 1h3.8v4.9h-7.2z" fill="#c9a028"/><rect x="21.2" y="277.8" width="6.6" height="4.2" fill="url(#fg)"/>
<path d="M24.6 286.7h3.5" stroke="#cfcfcf" stroke-width="0.5" stroke-dasharray="0.6 0.6"/>
<rect x="30.5" y="284.5" width="6.4" height="5.6" fill="#eef2ee" stroke="#6a6a6a" stroke-width="0.35"/><path d="M30.8 284.5v5.8h6" stroke="#333" stroke-width="0.6" fill="none"/><path d="M31.5 288.2l1.5-1.5l1.5 1l1.8-1.5" stroke="#3a8a3a" stroke-width="0.6" fill="none"/>
<rect x="13.4" y="292.8" width="3.8" height="3.8" fill="#f6f6f6" stroke="#c4c4c4" stroke-width="0.4"/><path d="M14.100000000000001 294.7h2.4" stroke="#555" stroke-width="0.5"/><path d="M15.3 293.5v2.4" stroke="#555" stroke-width="0.5"/>
<path d="M20.9 292.3h2.6l0.8 1h3.8v4.9h-7.2z" fill="#c9a028"/><rect x="21.2" y="293.8" width="6.6" height="4.2" fill="url(#fg)"/>
<rect x="13.4" y="300.8" width="3.8" height="3.8" fill="#f6f6f6" stroke="#c4c4c4" stroke-width="0.4"/><path d="M14.100000000000001 302.7h2.4" stroke="#555" stroke-width="0.5"/><path d="M15.3 301.5v2.4" stroke="#555" stroke-width="0.5"/>
<path d="M20.9 300.3h2.6l0.8 1h3.8v4.9h-7.2z" fill="#c9a028"/><rect x="21.2" y="301.8" width="6.6" height="4.2" fill="url(#fg)"/>
<rect x="13.4" y="308.8" width="3.8" height="3.8" fill="#f6f6f6" stroke="#c4c4c4" stroke-width="0.4"/><path d="M14.100000000000001 310.7h2.4" stroke="#555" stroke-width="0.5"/><path d="M15.3 309.5v2.4" stroke="#555" stroke-width="0.5"/>
<path d="M20.9 308.3h2.6l0.8 1h3.8v4.9h-7.2z" fill="#c9a028"/><rect x="21.2" y="309.8" width="6.6" height="4.2" fill="url(#fg)"/>
<rect x="13.4" y="316.8" width="3.8" height="3.8" fill="#f6f6f6" stroke="#c4c4c4" stroke-width="0.4"/><path d="M14.100000000000001 318.7h2.4" stroke="#555" stroke-width="0.5"/><path d="M15.3 317.5v2.4" stroke="#555" stroke-width="0.5"/>
<path d="M20.9 316.3h2.6l0.8 1h3.8v4.9h-7.2z" fill="#c9a028"/><rect x="21.2" y="317.8" width="6.6" height="4.2" fill="url(#fg)"/>
<rect x="13.4" y="324.8" width="3.8" height="3.8" fill="#f6f6f6" stroke="#c4c4c4" stroke-width="0.4"/><path d="M14.100000000000001 326.7h2.4" stroke="#555" stroke-width="0.5"/><path d="M15.3 325.5v2.4" stroke="#555" stroke-width="0.5"/>
<path d="M20.9 324.3h2.6l0.8 1h3.8v4.9h-7.2z" fill="#c9a028"/><rect x="21.2" y="325.8" width="6.6" height="4.2" fill="url(#fg)"/>
<rect x="13.4" y="332.8" width="3.8" height="3.8" fill="#f6f6f6" stroke="#c4c4c4" stroke-width="0.4"/><path d="M14.100000000000001 334.7h2.4" stroke="#555" stroke-width="0.5"/><path d="M15.3 333.5v2.4" stroke="#555" stroke-width="0.5"/>
<path d="M20.9 332.3h2.6l0.8 1h3.8v4.9h-7.2z" fill="#c9a028"/><rect x="21.2" y="333.8" width="6.6" height="4.2" fill="url(#fg)"/>
<rect x="13.4" y="340.8" width="3.8" height="3.8" fill="#f6f6f6" stroke="#c4c4c4" stroke-width="0.4"/><path d="M14.100000000000001 342.7h2.4" stroke="#555" stroke-width="0.5"/><path d="M15.3 341.5v2.4" stroke="#555" stroke-width="0.5"/>
<path d="M20.9 340.3h2.6l0.8 1h3.8v4.9h-7.2z" fill="#c9a028"/><rect x="21.2" y="341.8" width="6.6" height="4.2" fill="url(#fg)"/>
<rect x="13.4" y="348.8" width="3.8" height="3.8" fill="#f6f6f6" stroke="#c4c4c4" stroke-width="0.4"/><path d="M14.100000000000001 350.7h2.4" stroke="#555" stroke-width="0.5"/>
<path d="M20.9 348.3h2.6l0.8 1h3.8v4.9h-7.2z" fill="#c9a028"/><rect x="21.2" y="349.8" width="6.6" height="4.2" fill="url(#fg)"/>
<path d="M24.6 358.7h3.5" stroke="#cfcfcf" stroke-width="0.5" stroke-dasharray="0.6 0.6"/>
<rect x="30.5" y="356.5" width="6.4" height="5.6" fill="#eef2ee" stroke="#6a6a6a" stroke-width="0.35"/><path d="M30.8 356.5v5.8h6" stroke="#333" stroke-width="0.6" fill="none"/><path d="M31.5 360.2l1.5-1.5l1.5 1l1.8-1.5" stroke="#3a8a3a" stroke-width="0.6" fill="none"/>
<path d="M24.6 366.7h3.5" stroke="#cfcfcf" stroke-width="0.5" stroke-dasharray="0.6 0.6"/>
<rect x="30.5" y="364.5" width="6.4" height="5.6" fill="#eef2ee" stroke="#6a6a6a" stroke-width="0.35"/><path d="M30.8 364.5v5.8h6" stroke="#333" stroke-width="0.6" fill="none"/><path d="M31.5 368.2l1.5-1.5l1.5 1l1.8-1.5" stroke="#3a8a3a" stroke-width="0.6" fill="none"/>
<rect x="4.1" y="372.8" width="3.8" height="3.8" fill="#f6f6f6" stroke="#c4c4c4" stroke-width="0.4"/><path d="M4.8 374.7h2.4" stroke="#555" stroke-width="0.5"/><path d="M6.0 373.5v2.4" stroke="#555" stroke-width="0.5"/>
<path d="M11.3 372.3h2.6l0.8 1h3.8v4.9h-7.2z" fill="#c9a028"/><rect x="11.600000000000001" y="373.8" width="6.6" height="4.2" fill="url(#fr)"/>
<rect x="14.9" y="374.3" width="3.4" height="3.6" fill="#8a8070" opacity="0.55"/>
<rect x="4.1" y="380.8" width="3.8" height="3.8" fill="#f6f6f6" stroke="#c4c4c4" stroke-width="0.4"/><path d="M4.8 382.7h2.4" stroke="#555" stroke-width="0.5"/>
<path d="M11.3 380.3h2.6l0.8 1h3.8v4.9h-7.2z" fill="#c9a028"/><rect x="11.600000000000001" y="381.8" width="6.6" height="4.2" fill="url(#fr)"/>
<rect x="14.9" y="382.3" width="3.4" height="3.6" fill="#8a8070" opacity="0.55"/>
<rect x="13.4" y="388.8" width="3.8" height="3.8" fill="#f6f6f6" stroke="#c4c4c4" stroke-width="0.4"/><path d="M14.100000000000001 390.7h2.4" stroke="#555" stroke-width="0.5"/><path d="M15.3 389.5v2.4" stroke="#555" stroke-width="0.5"/>
<path d="M20.9 388.3h2.6l0.8 1h3.8v4.9h-7.2z" fill="#c9a028"/><rect x="21.2" y="389.8" width="6.6" height="4.2" fill="url(#fg)"/>
<path d="M6.0 398.7h3.5" stroke="#cfcfcf" stroke-width="0.5" stroke-dasharray="0.6 0.6"/>
<path d="M11.3 396.3h2.6l0.8 1h3.8v4.9h-7.2z" fill="#c9a028"/><rect x="11.600000000000001" y="397.8" width="6.6" height="4.2" fill="url(#fr)"/>
<rect x="14.9" y="398.3" width="3.4" height="3.6" fill="#8a8070" opacity="0.55"/>
<rect x="147.7" y="75" width="7" height="7" fill="#1a8c8c"/><path d="M149 80.5l1.3-2.5l1.3 1.5l1.6-3" stroke="#bff0f0" stroke-width="0.6" fill="none"/>
<rect x="199.8" y="75" width="7" height="7" fill="#1a8c8c"/><path d="M201 80.5l1.3-2.5l1.3 1.5l1.6-3" stroke="#bff0f0" stroke-width="0.6" fill="none"/>
<rect x="183" y="75.5" width="4.8" height="5" fill="#fff" stroke="#9a9a9a" stroke-width="0.5"/>
<rect x="233.6" y="75" width="5.6" height="5.7" fill="#e8703a"/><rect x="234.6" y="76" width="3.6" height="3.7" fill="#f8d0b8"/>
<defs><clipPath id="vc"><rect x="143.5" y="84.7" width="706.5" height="290.5"/></clipPath>
<clipPath id="tc"><polygon points="271,84.7 631.7,84.7 495,348.9 144,328 144,315.6"/></clipPath>
<clipPath id="fc"><polygon points="144,328 495,348.9 495,361 144,339"/></clipPath></defs>
<g clip-path="url(#vc)">
<polygon points="271,84.7 631.7,84.7 495,348.9 144,328 144,315.6" fill="#a1a31f"/>
<polygon points="447,84.7 487,84.7 510,94 545.5,105.8 580.7,112.8 614.5,118 495,348.9 397,343.1" fill="#9e5a22"/>
<polygon points="631.7,84.7 637.2,84.7 494.4,361 495,348.9" fill="#4a4e14"/><path d="M634.5 84.7L494.8 355" stroke="#8a9430" stroke-width="0.9"/><path d="M631.7 84.7L495 348.9" stroke="#2a2a08" stroke-width="0.7"/>
<polygon points="144,328 495,348.9 495,361 144,339" fill="#f2f226"/>
<polygon points="144,338.6 237.4,344.2 237.4,346.4 144,341.4" fill="#a8742c"/>
<g clip-path="url(#tc)"><path d="M445.5 84.7L395.5 343" stroke="#4e5a10" stroke-width="4" stroke-opacity="0.9"/><path d="M449 84.7L399 343" stroke="#4a2008" stroke-width="2.5" stroke-opacity="0.5"/><path d="M444 100.1L441.4 101.8M418.2 180L410.7 178.6M559.4 84.7L570.2 91.9M426.2 192.2L423.4 191.2M443 105.2L442.5 107.7M312.9 133.2L291.3 138.2M406.7 159.5L390.8 159.7M427.2 187L426.7 189.6M359 140.1L353.3 133.3M409.7 217.8L414.5 218.9M438.3 102.6L441.4 101.8M421.8 183.9L424.3 182M426.7 189.6L426.2 192.2M434.7 89.1L432.2 91M412.1 172.1L396.9 168.6M410.9 271.5L410.4 274M279.3 299L279.7 316.3M410.5 240.8L415.7 242M411.3 250L406.7 247.1M431.7 164L426.5 164.3M410.4 274L409.9 276.6M361.2 115.9L341.8 116.9M500.1 90L503.4 91.3M588.9 111.7L580 110.5M439.7 84.9L436.5 86.3M400.1 303.5L400.2 299M382.8 204.2L394 210.4M204.8 329.4L213.2 318.2M427 140.2L420 138.4M503.4 91.3L506.7 92.7M425.4 158.6L428.7 157.5M432.6 130.4L437.1 129.8M405.4 226.1L411.9 228.8M604.4 116.4L607.7 117M286.7 213.7L270.2 224.5M356.2 90L376.1 90.3M577.8 105.9L588.8 106.4M592.5 109.8L593.6 111.8M407 191.4L393.1 194.2M389 327.7L395.1 329.9M564.3 105.7L560 103.5M407.6 244.3L412.2 242.5M396.5 205.4L382.8 204.2M319 282L301.6 270.6M617.4 112.5L612.7 115.1M386.2 313.5L392.6 317.3M258.2 208.7L267.6 216.5M405.4 226.1L413.1 223.6M530.4 84.7L544.9 84.7M287 84.7L283.6 92.4M241 255.3L242.6 265.9M406.7 159.5L399.8 156.5M380.2 102.4L381.4 110.4M544.9 84.7L559.4 84.7M401.4 124.9L414.6 121.5M413.3 196L419.1 198.4M410.1 201L416.9 200.9M238.1 145.3L236.7 151.5M435.6 134.4L436 132.3M264.4 96.8L257.8 109M356.2 90L340.3 88.9M612.7 115.1L607.1 115.5M407.2 136L420 138.4M351.8 181.6L365 183.7M425.4 158.6L429.2 160.4M434.3 113.6L441.1 111.4M601.7 100.8L585 103.2M376.2 316.1L384.9 321.8M519.7 97.2L522.9 98.3M351.9 224.8L342.2 232.8M368.8 209.6L357.1 217M310.5 96.1L335.8 93.6M433.6 102.7L438.3 102.6M396.5 205.4L408.8 204.4M431.8 114.9L437.7 114.4M446.5 87.3L442.8 85.6M490.3 86L496.4 85.3M397 343.1L393.3 340.8M399.8 307.4L398.7 311M390.5 292L394.6 294.9M428.4 97.9L433.2 100.6M255.7 229.6L247.2 243.5M344.1 322.6L307.6 321.7M335.3 124L340.9 129.3M431.4 144.8L425.7 147.2M303 84.7L305.7 89.1M514.7 93.8L512.7 92.2M389.6 265.1L373.1 265.4M380.2 184.7L396.4 189.8M406.7 247.1L399.1 245.6M418.1 150.8L412.3 148.7M308.4 215.5L323.7 206.4M239.8 331.9L244.3 315.3M218.4 181.7L234.3 176.3M447 84.7L442.8 85.6M303.2 310.5L326.1 313M292.9 105.8L266.4 104.1M580.1 107.8L575.8 109M434.7 89.1L441.4 90.2M431.8 114.9L434.3 113.6M404.4 209.2L408.8 204.4M370.5 331.2L372.3 337.3M225 169.6L218.4 181.7M411.2 101.6L422 100.9M324.2 182.9L306.9 180M186.3 301.3L190.6 315.3M442 110.3L441.6 112.8M434.3 113.6L437.7 114.4M405.4 226.1L396.2 223.7M500.1 90L504.3 88.6M418.1 150.8L405.8 153M570.1 110.7L567.2 107.8M278.3 170L289.8 178.8M312.9 133.2L328.5 133.2M268.8 276.4L301.6 270.6M425.5 128.9L429.2 127.2M415.6 97.5L401 98.6M424.2 202.4L416.9 200.9M431.6 119.2L436.4 119.3M425.7 194.7L425.2 197.3M402.9 259.8L395.9 257.7M319 282L298.1 290.4M414.6 210.5L418.5 212.4M385.5 152.8L390.8 144.9M433.6 153.8L426.5 155.3M409.4 279.1L408.9 281.7M270.2 224.5L267.6 216.5M399 84.7L409.2 87.7M258.2 208.7L231.9 218.3M402.9 312.4L396.1 314M626 95.8L605.3 92.2M290.8 164.2L315.3 164.4M611.1 117.5L614.5 118M428.7 179.4L428.2 177.9M419.1 198.4L412.1 198.6M319 282L329.7 291.7M617.4 112.5L611.5 110.9M425.2 104.6L434.4 105.8M359 140.1L340.6 147.1M515.9 84.7L524.5 88.7M553.2 102.8L547.1 103.7M575.8 109L567.2 107.8M352.9 285.5L364.3 279.1M544.9 84.7L536.8 91.8M314.6 225.7L317.6 234.9M423.1 87.9L432.2 91M425.3 136.6L420 138.4M244.3 315.3L227.7 306.2M623.1 101.3L609.3 96.8M439.1 89.2L446.1 88.4M390.8 144.9L406.3 145.3M269.6 148.7L275.4 143.4M295.2 154.8L307.5 158.7M429.7 174.2L425.4 174.7M335.5 155.7L307.5 158.7M437.1 108.1L439.3 106.6M324.6 90L335.8 93.6M439.1 125.6L438.6 128.2M404.4 304.7L399.8 307.4M592.5 109.8L588.8 106.4M407.6 244.3L402.2 241.5M422.7 210.1L422.2 212.6M413.1 223.6L415.8 226.8M172.3 266.6L194.4 273.8M407.8 185.4L396.4 189.8M310.5 96.1L298.3 93.4M288.4 245.8L259 251.3M422.2 212.6L421.8 215.2M406.4 294.5L405.9 297M326 170.4L340.2 176.5M382.8 280.2L390.1 273.9M390.5 292L401.4 293.4M420.3 222.9L413.1 223.6M405.9 297L405.4 299.6M396.9 168.6L400.1 163.4M526.1 99.4L529.4 100.4M266.4 104.1L272.3 109.6M325.8 99.7L316.1 106.2M431 84.7L423.3 85.2M440.3 93.3L442.6 91.6M556.1 107.9L556.5 106.2M529.4 100.4L532.6 101.5M353.2 94.3L356.2 90M369.6 135.8L384.9 130.5M253.8 152.3L236.7 151.5M413.3 196L412.1 198.6M332.2 269.5L347.4 275.3M419.8 225.4L413.1 223.6M437.1 108.1L434.4 105.8M353.2 94.3L335.8 93.6M404.9 196.3L393.1 194.2M437.8 96.1L440.9 95.5M232.4 232L217.5 227.1M212 296.7L234 290.2M404.4 274L398.5 276.8M560.6 97.9L560.4 101.3M434.6 148.7L430.2 148.1M570.9 107L567.2 107.8M374.2 220L351.9 224.8M434.6 148.7L431.3 146.8M294.1 144.9L307.8 140.9M526.1 99.4L527.2 97.2M421.6 170.1L421.1 167.9M390.8 159.7L367.3 164.8M426.9 143.1L431.4 144.8M303.2 310.5L279.7 316.3M290.8 164.2L273.5 156.5M413.8 167.1L400.1 163.4M434.3 113.6L429.1 112.6M249.7 301.2L234 290.2M429.2 127.2L423.6 125.9M531.6 97.8L539.9 97.4M437 104.4L434.4 105.8M319 282L352.9 285.5M426.5 164.3L426.4 161.6M232.4 232L216.1 238.1M402.5 214.7L404.4 209.2M368.8 209.6L374.2 220M628.8 90.2L626 95.8M415.9 156.7L415.2 159.4M363.9 177.4L340.2 176.5M344.1 322.6L370.5 331.2M341.8 116.9L353.3 119.9M400.5 325.2L395.1 325.7M251.3 121.1L275.3 126M573.8 84.7L570.2 91.9M211.8 193.8L205.2 206M315.3 164.4L307.5 158.7M584.2 109.7L580.1 107.8M399.8 201.5L404.9 196.3M379.1 173.2L364.7 170.1M234 290.2L252.1 285.2M325.1 256.8L309.1 247.3M390.5 292L380.2 289.5M323.4 117.7L307.2 122.4M399 103L401 98.6M394.7 179.4L391.2 174.6M225.1 202.2L250.2 201.9M426.9 143.1L423.6 145.1M383.4 232.4L403.4 233.5M360.7 146.8L369 152.1M318.2 197.4L346.7 198.2M411.2 101.6L408 105.4M385.8 337.2L372.3 337.3M408.9 281.7L405.4 282.4M418.1 150.8L423.4 150.4M331.3 107.7L352.1 104.1M419.4 141.3L406.4 141.8M398.5 276.8L390.5 278.2M222.3 330.7L213.2 318.2M439.1 125.6L433.8 127.5M428.4 97.9L432.3 96.4M361.2 115.9L364.9 111.9M249.2 181.1L272.8 184.6M289.6 187.1L276.7 191.8M601 115.9L602.9 114.8M357.9 262.3L374.5 272.2M360.7 146.8L340.6 147.1M413.8 167.1L396.9 168.6M395.9 257.7L397.9 263.4M369.7 199.2L346.7 198.2M440.1 120.5L436.4 119.3M238.1 145.3L255.5 144.8M397.9 237.2L383.4 232.4M403.2 255.4L395.9 257.7M186.3 301.3L186.1 289.9M416.8 240.8L415.1 239.5M426.5 110L423.9 107.7M398 131.4L413.6 133.5M351.8 181.6L324.2 182.9M611.5 110.9L609.5 106.4M251.2 158.8L245.4 165.7M331.3 107.7L316.1 106.2M617.2 84.7L605.3 92.2M436.5 86.3L442.8 85.6M445.5 92.4L440.3 93.3M389.5 284.6L390.5 278.2M422.3 161.6L426.5 164.3M598.2 112.5L602.9 114.8M583.1 89.1L575.8 96M507.8 90.6L512.7 92.2M602.5 110L598.2 112.5M409.9 276.6L404.9 276.9M394.7 179.4L379.1 173.2M412.3 220.7L417.1 220.4M608 113.5L607.1 115.5M380.2 306.9L387.3 304.2M117.5 323.2L134.9 324.5M241 255.3L209.3 253.7M535.8 102.6L539.5 101.5M351.1 191.4L346.7 198.2M397.9 237.2L410.2 238.3M424.6 94.3L432.2 91M378.8 194.5L393.1 194.2M234 290.2L227.7 306.2M266.7 241.1L247.2 243.5M255.5 189.7L276.7 191.8M165.8 278.7L159.2 290.9M617.4 112.5L614.4 116.5M231.5 157.5L236.7 151.5M438.1 130.8L437.6 133.3M592.5 109.8L602.5 110M504.3 88.6L507.8 90.6M420.2 203.6L416.9 200.9M605.3 92.2L609.3 96.8M572.9 101.5L589.5 97.2M363.1 310.2L380.2 306.9M560 103.5L553.6 105.1M376.2 96.5L390.9 95.1M361.2 115.9L350.6 112.3M490.3 86L493.6 87.4M570.2 91.9L548.7 91.9M404.9 302.2L404.4 304.7M370.5 331.2L377.6 325.8M442.5 107.7L441.8 108.8M519.7 97.2L523.5 96.8M292.9 105.8L272.3 109.6M307.8 140.9L291.3 138.2M590.8 114.4L594.2 114.9M432.6 130.4L429.2 127.2M262.8 163L273.5 156.5M256.8 126.3L275.3 126M437.8 96.1L436.4 99M535.8 102.6L539 103.7M519.6 91.8L514.7 93.8M377.6 325.8L362.3 320.6M531.6 97.8L533.4 99.7M283.6 92.4L285.7 98.6M410.5 240.8L410.2 238.3M434.7 89.1L441.3 87.4M439.1 125.6L436.4 123.9M442 110.3L441.8 108.8M522.9 98.3L523.5 96.8M416.3 243.3L412.2 242.5M407.4 289.4L403.6 289.9M409.7 217.8L412.3 220.7M380.2 306.9L384.5 297.3M377.3 142.5L369 152.1M297.1 132.2L312.9 133.2M412.3 148.7L419.4 146.7M348.2 160.6L350.2 152.5M257.2 333.2L244.3 315.3M436.4 123.9L431 123.8M583.1 89.1L605.3 92.2M410.6 94.8L401 98.6M425.6 153L418.1 150.8M272.8 286L252.1 285.2M430.2 171.7L426 172.9M416.6 153.7L405.8 153M487 84.7L501.5 84.7M297.2 116.6L307.2 122.4M253.8 152.3L273.5 156.5M437.1 135.9L433 136M211.8 193.8L239.1 187.5M382 212.3L394 210.4M411.2 139L420 138.4M588.8 106.4L580.1 107.8M436.5 86.3L441.3 87.4M434.6 148.7L434.1 151.2M428.7 149.5L430.2 148.1M422.7 210.1L418.6 210.6M584.2 109.7L588.9 111.7M323.4 117.7L341.8 116.9M419.4 141.3L411.2 139M412.1 172.1L415.1 176.4M326 170.4L315.3 164.4M414.6 121.5L421.7 122.6M348.3 170.2L340.2 176.5M608 113.5L612.7 115.1M418.3 233.1L410.4 235.3M415 84.7L409.2 87.7M398.5 276.8L396.2 282.7M402.4 315L396.1 314M403.4 280.9L404.9 276.9M384.9 321.8L392.6 317.3M391.2 174.6L381.8 167.4M430.7 169.1L429.1 167.6M396.4 189.8L407 191.4M353.3 133.3L370.6 129.3M426.8 138.4L427 140.2M307.8 127.9L293.8 125.4M570.9 107L575.8 109M394.7 179.4L406 175.2M232.4 232L255.7 229.6M414.3 112.4L415.3 117.4M389.6 265.1L402.5 266.2M428.7 179.4L426.8 180.5M438.1 101.1L433.2 100.6M405.8 153L399.8 156.5M411.9 228.8L415.8 226.8M396.5 205.4L394 210.4M292.9 105.8L308 110.8M403.4 309.8L398.7 311M389.5 284.6L396.2 282.7M425.4 158.6L415.2 159.4M573.8 84.7L588.3 84.7M416.9 200.9L412.1 198.6M584.1 113.3L588.9 111.7M347.4 240.4L317.6 234.9M271 84.7L287 84.7M559.4 84.7L548.7 91.9M251.3 121.1L244.7 133.2M429.2 176.8L425.4 174.7M255.5 144.8L262.8 139.7M378.8 194.5L396.4 189.8M398 338L393.2 335.1M499.2 87.2L506.4 86.4M244.7 133.2L238.1 145.3M412.1 172.1L421.6 170.1M556.5 106.2L560.3 107M292.9 105.8L316.1 106.2M434 92.9L442.6 91.6M444 100.1L443.5 102.6M425.2 104.6L433.6 102.7M357.9 262.3L373.1 265.4M404.9 302.2L400.2 299M392.4 227.5L402.2 230M289.6 187.1L272.8 184.6M428.4 97.9L436.4 99M427.7 184.5L427.2 187M560 103.5L556.5 106.2M331.3 107.7L350.6 112.3M340.9 129.3L353.3 133.3M434.6 148.7L428.7 149.5M366.9 107.4L352.1 104.1M340.6 147.1L350.2 152.5M376.7 244.1L360.4 244.7M411.4 268.9L410.9 271.5M255.5 144.8L253.8 152.3M351 84.7L356.2 90M421.3 217.7L414.5 218.9M231.9 218.3L250.6 221.2M407.9 286.8L399.2 288.2M504.3 88.6L499.2 87.2M404.4 209.2L394 210.4M328.5 133.2L329.3 141.2M433.1 156.3L428.7 157.5M205.7 285.4L194.4 273.8M289.6 187.1L289.8 178.8M394.7 179.4L380.2 184.7M434.1 151.2L428.7 149.5M410.4 274L404.4 274M415.3 117.4L426.3 116.1M542.3 104.7L545.5 105.8M376.5 251.9L391.8 248.7M382.9 238.8L391.8 241.8M253.8 152.3L251.2 158.8M614.5 118L614.4 116.5M324.2 182.9L310.1 188.9M293.8 125.4L281.4 133.8M570.9 107L577.8 105.9M380.2 184.7L378.8 194.5M410.5 213.8L402.5 214.7M278.3 170L294.4 171.6M412.2 206.8L408.8 204.4M255.5 189.7L250.2 201.9M290.8 164.2L278.3 170M436.4 119.3L436.4 121.5M414.8 183.2L417.6 187.6M335.3 124L353.3 119.9M329.3 141.2L342.4 137.8M387.1 332.9L393.2 335.1M384.5 297.3L387.3 304.2M251.2 158.8L236.7 151.5M419.3 228L415.8 226.8M421.8 90.7L424.6 94.3M412.3 128.7L423.6 125.9M283.6 92.4L305.7 89.1M406.5 270L407.5 272.2M390.8 159.7L399.8 156.5M414.3 112.4L403.8 114.2M441.1 115.4L440.6 118M400 327.7L395.1 325.7M331.3 107.7L342.1 99.4M410.9 271.5L406.5 270M369.6 135.8L353.3 133.3M440.1 120.5L436.4 121.5M440.6 118L440.1 120.5M424.7 199.8L424.2 202.4M152.4 325.7L168.7 310.9M429.5 152.1L432.9 152.5M410.5 213.8L409.7 217.8M424.2 202.4L423.7 204.9M408.4 284.3L407.9 286.8M608 113.5L611.5 110.9M319.8 145.8L329.3 141.2M100 322L110.1 339.4M386.4 123.4L387.4 116.5M407.9 286.8L407.4 289.4M412.8 261.2L408.4 262.2M421.3 217.7L420 216.5M387.1 332.9L395.1 329.9M348.2 160.6L331.2 163M369.7 199.2L366.4 192.1M417.6 187.6L421.7 185.8M438.6 128.2L433.8 127.5M446 89.8L446.1 88.4M366.3 157.1L385.5 152.8M386.2 313.5L376.2 316.1M225.1 202.2L232 194.3M385.3 259.9L376.5 251.9M279.3 299L272.8 286M213.2 318.2L205.4 307M419.4 146.7L423.6 145.1M516.5 96.1L519.7 97.2M604.4 116.4L602.9 114.8M323.4 117.7L308 110.8M371.2 296.4L380.2 306.9M194.4 273.8L192.9 263M398 338L392.7 338.4M271 84.7L271.2 90.2M339.3 213.6L323.7 206.4M428.4 97.9L424.6 94.3M403.4 280.9L398.5 276.8M420.3 222.9L417.1 220.4M402.5 266.2L397.9 263.4M367 84.7L376.1 90.3M423.7 204.9L420.2 203.6M500.1 90L507.8 90.6M423.1 87.9L423.3 85.2M516.5 96.1L523.5 96.8M290.8 164.2L294.4 171.6M354.6 98.8L365.6 93.9M380.2 184.7L379.1 173.2M446 89.8L441.4 90.2M414.6 210.5L420 208M419.4 146.7L423.4 150.4M443 105.2L439.3 106.6M560.4 101.3L548.2 101.2M602.8 84.7L617.2 84.7M539 103.7L539.5 101.5M572.9 101.5L560.6 97.9M428.6 163.1L426.4 161.6M354.6 98.8L352.1 104.1M434 116.9L436.4 119.3M424.6 94.3L435.6 94.6M318.2 197.4L310.1 188.9M617.2 84.7L631.7 84.7M238.1 145.3L231.5 157.5M408.8 256.4L408.8 258.9M397.9 237.2L410.4 235.3M231.5 157.5L251.2 158.8M401.4 293.4L399.6 296.2M431 123.8L421.7 122.6M231.5 157.5L225 169.6M415.2 159.4L422.3 161.6M407.6 244.3L411.2 247.6M406.7 159.5L400.1 163.4M441.1 111.4L437.4 110.5M496.9 88.7L504.3 88.6M378.8 194.5L386.1 198.9M265.3 260.3L279.7 254.3M379.5 341.9L385.8 337.2M560.6 97.9L548.2 101.2M268.8 276.4L272.8 286M416.1 204L420.5 206.3M257.8 109L256.3 116.1M399.3 149.7L390.8 144.9M446.5 87.3L447 84.7M391.8 248.7L391.8 241.8M152.6 303L168.7 310.9M410.5 213.8L414.6 210.5M387.3 304.2L394 304.3M369.6 135.8L377.3 142.5M331.2 163L307.5 158.7M262.8 163L278.3 170M113.2 375.7L110.1 339.4M386.2 313.5L392.3 310.8M275.3 126L279.5 120.3M271.4 200.9L250.2 201.9M165.8 278.7L186.1 289.9M293.8 125.4L279.5 120.3M406.9 291.9L403.6 289.9M397.9 237.2L382.9 238.8M397.5 340.5L393.3 340.8M319.8 145.8L321 152.4M602.5 110L598.3 107.2M413.3 196L407 191.4M239.1 276.8L252.1 285.2M265.5 133.6L281.4 133.8M270.2 224.5L296.6 222.5M620.2 106.9L617.4 112.5M539.5 101.5L548.2 101.2M192.1 230.2L185.5 242.4M539 103.7L547.1 103.7M440.1 120.5L439.6 123.1M262.8 139.7L281.4 133.8M405.5 118.9L386.4 123.4M570.2 91.9L575.8 96M432.3 110.8L437.1 108.1M344.6 339.4L370.5 331.2M422.2 212.6L418.6 210.6M439.6 123.1L439.1 125.6M100 322L100 400M526.1 99.4L533.4 99.7M423.7 204.9L423.2 207.5M431 123.8L423.6 125.9M427.7 184.5L421.7 185.8M318.2 197.4L301.1 207.8M251.2 158.8L273.5 156.5M421.8 90.7L432.2 91M423.2 207.5L422.7 210.1M407.4 289.4L406.9 291.9M422.5 112.5L415.3 117.4M306.9 180L289.8 178.8M524.5 88.7L513.5 89M425.6 153L421.9 154.6M321 152.4L307.5 158.7M406.9 291.9L406.4 294.5M422.9 157.1L426.5 155.3M428.4 97.9L415.6 97.5M365 183.7L363.9 177.4M560.6 97.9L548.7 91.9M416.2 107.5L426.5 110M577.2 112.1L580 110.5M384.9 130.5L370.6 129.3M522.9 98.3L526.1 99.4M362.1 340.6L372.3 337.3M295.2 154.8L273.5 156.5M402.5 266.2L408.7 264.6M225.1 202.2L225.4 211.1M344.1 322.6L363.1 310.2M412.2 242.5L415.7 242M434 116.9L431.8 114.9M294.4 171.6L289.8 178.8M262.8 139.7L275.4 143.4M394.6 294.9L400.2 299M563.1 109.3L560.3 107M431.4 138.8L427 140.2M359.4 125.6L370.6 129.3M331.3 107.7L329.9 112.7M402.2 220.7L405.4 226.1M399.2 288.2L403.6 289.9M205.2 206L225.4 211.1M428.2 181.9L426.8 180.5M583.1 89.1L589.5 97.2M412.1 172.1L413.8 167.1M342.1 99.4L352.1 104.1M406.5 270L402.5 266.2M433.8 127.5L437.1 129.8M631.7 84.7L628.8 90.2M312.9 133.2L329.3 141.2M418 192.7L421 194.7M255.5 189.7L249.2 181.1M406.4 294.5L401.4 293.4M544.6 99.4L539.9 97.4M361.2 115.9L369.3 122M436.6 138.4L436.1 141M389.1 219L382 212.3M159.2 290.9L186.3 301.3M415.3 117.4L403.8 114.2M420.3 222.9L419.8 225.4M279.7 254.3L259 251.3M413.3 258.7L408.8 258.9M391.8 241.8L399.1 245.6M392.7 338.4L385.8 337.2M410.5 240.8L412.2 242.5M361.2 115.9L372.5 117.9M411.4 268.9L406.5 270M264.4 96.8L285.7 98.6M403.9 307.3L403.4 309.8M238.1 145.3L253.8 152.3M419.4 141.3L420 138.4M438.1 130.8L437.1 129.8M413.8 167.1L421.6 170.1M367 84.7L356.2 90M524.5 88.7L525.8 91.6M403.4 309.8L402.9 312.4M319 282L347.4 275.3M435.6 143.5L431.4 144.8M432.6 158.9L428.7 157.5M424.6 94.3L412.2 91.3M315.4 301.6L326.1 313M298.3 93.4L305.7 89.1M380.2 184.7L363.9 177.4M597.6 115.4L602.9 114.8M397.9 237.2L403.4 233.5M426.9 143.1L433.3 142.1M319 282L297.3 280.3M386.4 123.4L384.9 130.5M416.8 240.8L410.5 240.8M390.5 292L384.5 297.3M272.3 109.6L271.8 115.6M410.1 201L416.1 204M396.5 319.2L397.4 316.7M425.5 128.9L423.6 125.9M394.7 179.4L398.5 184.3M368.8 209.6L382.8 204.2M425.2 104.6L423.9 107.7M436.4 123.9L431.9 121.6M186.3 301.3L212 296.7M345.6 299.3L363.1 310.2M384.9 321.8L394.6 322.2M532.6 101.5L539.5 101.5M385.3 259.9L357.9 262.3M440.3 93.3L434 92.9M521.1 94.3L523.5 96.8M319 84.7L324.6 90M521.1 94.3L525.8 91.6M374.5 272.2L364.3 279.1M439.6 123.1L436.4 121.5M178.9 254.5L172.3 266.6M268.8 276.4L242.6 265.9M370.5 331.2L387.1 332.9M389 327.7L377.6 325.8M382.8 280.2L368.2 289M425.2 104.6L422 100.9M367.4 99.4L369.1 103.6M431.6 119.2L426.3 120.5M172.3 266.6L165.8 278.7M425.2 197.3L421.4 196.8M431 84.7L439.7 84.9M389.1 219L394 210.4M415.7 213.5L415 215.8M433.1 156.3L432.5 157.8M376.1 90.3L365.6 93.9M369.7 199.2L386.1 198.9M397.5 340.5L392.7 338.4M287 84.7L271.2 90.2M369.6 135.8L370.6 129.3M326 170.4L294.4 171.6M376.7 244.1L391.8 241.8M396.2 282.7L399.2 288.2M247.2 243.5L259 251.3M299.3 238.4L296.6 222.5M393 301.1L394.6 294.9M503.4 91.3L507.8 90.6M407.9 286.8L403.6 289.9M405.5 118.9L414.6 121.5M397.3 138.4L411.2 139M406 175.2L391.2 174.6M440.3 93.3L440.9 95.5M544.6 99.4L533.4 99.7M308 110.8L329.9 112.7M407.8 185.4L407 191.4M258.2 208.7L283.3 206.3M376.5 251.9L357.8 252.1M406.7 247.1L411.2 247.6M293.8 125.4L297.1 132.2M432.6 130.4L436 132.3M367.9 236.4L342.2 232.8M427.2 187L425.8 188.1M417.8 235.6L413.6 236.5M376.2 96.5L376.1 90.3M272.3 109.6L287.4 110.9M218.4 181.7L239.1 187.5M592.5 109.8L598.3 107.2M307.8 140.9L312.9 133.2M408.4 262.2L397.9 263.4M397.9 237.2L402.2 241.5M241 255.3L228.8 246M168.7 310.9L190.6 315.3M435.6 143.5L435.1 146.1M422 100.9L415.6 97.5M601.7 100.8L609.3 96.8M334 222.1L357.1 217M294.1 144.9L269.6 148.7M359 140.1L342.4 137.8M350.6 112.3L366.9 107.4M414.3 112.4L416.2 107.5M310.5 96.1L285.7 98.6M435.1 146.1L434.6 148.7M369.3 122L370.6 129.3M419.3 228L418.8 230.5M251.3 121.1L256.3 116.1M410.4 235.3L413.6 236.5M369.3 122L372.5 117.9M418.8 230.5L418.3 233.1M402.9 312.4L402.4 315M269.7 178L278.3 170M601.7 100.8L601.5 104.4M421.7 189.3L417.6 187.6M396.5 109L408 105.4M323.4 117.7L323.4 127.3M106.6 387.9L110.1 339.4M402.4 315L402 317.5M288.4 245.8L279.7 254.3M506.7 92.7L512.7 92.2M285.7 98.6L302.6 102M607.7 117L611.1 117.5M426.3 116.1L431.8 114.9M412.3 128.7L413.6 133.5M222.2 261.4L241 255.3M549 106.5L552.5 107.2M231.9 218.3L225.4 211.1M431.6 119.2L434 116.9M560.4 101.3L560 103.5M602.8 84.7L605.3 92.2M324.6 90L340.3 88.9M556.1 107.9L560.3 107M368.8 209.6L369.7 199.2M402.9 259.8L397.9 263.4M284 264.5L301.6 270.6M410.5 240.8L402.2 241.5M408.8 256.4L410.5 253M436.5 86.3L434.7 89.1M553.2 102.8L560.4 101.3M431 123.8L432.7 125.9M412.3 128.7L398 131.4M376.2 316.1L392.6 317.3M598.2 112.5L590.5 112.9M434.1 151.2L432.9 152.5M321 152.4L305.6 149.6M216.1 238.1L209.3 253.7M357.8 252.1L347.4 240.4M493.6 87.4L499.2 87.2M232 194.3L250.2 201.9M575.8 109L580 110.5M259.8 170.4L262.8 163M100 322L106.6 387.9M617.2 84.7L628.8 90.2M412.3 128.7L401.4 124.9M529.4 100.4L533.4 99.7M344.1 322.6L362.3 320.6M415.8 245.9L415.3 248.4M428.2 181.9L424.3 182M410.5 240.8L415.1 239.5M387.4 116.5L372.5 117.9M426.2 192.2L421 194.7M425.2 104.6L408 105.4M359 140.1L377.3 142.5M307.8 127.9L307.2 122.4M241 255.3L247.2 243.5M348.3 170.2L326 170.4M387.3 304.2L390.7 307.4M415.8 245.9L415.3 244.5M385.8 337.2L387.1 332.9M402.5 266.2L407.7 268M425.2 197.3L419.1 198.4M369.7 199.2L382.8 204.2M425.7 194.7L421 194.7M435.6 134.4L433 136M379.5 341.9L372.3 337.3M525.8 91.6L519.6 91.8M430.7 169.1L425.6 171M292.9 105.8L287.4 110.9M573.7 111.4L577.2 112.1M339.3 213.6L357.1 217M327.1 338.1L344.1 322.6M432.6 158.9L425.4 158.6M323.4 117.7L329.9 112.7M445 94.9L444.5 96M198.7 218.1L225.4 211.1M415 215.8L414.5 218.9M434.3 113.6L437.4 110.5M415.9 156.7L399.8 156.5M435.6 94.6L437.8 96.1M399.3 149.7L385.5 152.8M325.8 99.7L302.6 102M422 100.9L433.6 102.7M351 84.7L367 84.7M513.5 89L507.8 90.6M386.2 313.5L396.1 314M421.7 185.8L425.8 188.1M286.7 213.7L267.6 216.5M403.4 280.9L396.2 282.7M218.4 181.7L211.8 193.8M413.6 236.5L410.2 238.3M394.7 332.5L387.1 332.9M425.3 136.6L433 136M239.8 331.9L257.2 333.2M408.7 264.6L397.9 263.4M384.9 130.5L401.4 124.9M380.2 102.4L369.1 103.6M421.7 133.1L418.7 130.2M348.2 160.6L335.5 155.7M152.6 303L186.3 301.3M119.7 363.6L113.2 375.7M376.5 251.9L360.4 244.7M328.6 247.2L357.8 252.1M353.3 133.3L342.4 137.8M259.8 170.4L249.2 181.1M421.6 170.1L426 172.9M412.8 261.2L408.8 258.9M289.6 187.1L306.9 180M560.6 97.9L575.8 96M383.4 232.4L382.9 238.8M341.8 116.9L329.9 112.7M384.9 130.5L397.3 138.4M404.9 196.3L407 191.4M573.7 111.4L575.8 109M352.9 285.5L329.7 291.7M391.8 248.7L390.2 253.5M402.5 214.7L409.7 217.8M408.9 281.7L408.4 284.3M433.6 153.8L425.6 153M271.4 200.9L255.5 189.7M435.1 146.1L431.4 144.8M288.4 245.8L309.1 247.3M445 94.9L440.9 95.5M428.7 149.5L423.4 150.4M407.8 185.4L417.6 187.6M510 94L513.2 95.1M293.8 125.4L275.3 126M239.1 276.8L268.8 276.4M415.1 176.4L418.2 180M421.6 170.1L419 173.9M310.5 96.1L305.7 89.1M585 103.2L601.5 104.4M279.7 316.3L307.6 321.7M426.3 120.5L431.9 121.6M371.2 296.4L384.5 297.3M331.2 163L315.3 164.4M446.5 87.3L441.3 87.4M415 215.8L420 216.5M281.4 133.8L275.4 143.4M424.2 202.4L420.2 203.6M380.2 184.7L398.5 184.3M445.5 92.4L442.8 94M418.7 143.8L406.3 145.3M306.9 180L294.4 171.6M345.6 299.3L371.2 296.4M396.5 109L407.2 109.8M421.8 90.7L409.2 87.7M292.2 335.7L279.7 316.3M279.3 299L298.1 290.4M446 89.8L439.1 89.2M390.9 95.1L380.2 102.4M399.1 245.6L402.2 241.5M239.1 276.8L242.6 265.9M352.1 104.1L369.1 103.6M403.3 180.9L414.8 183.2M438.6 128.2L438.1 130.8M335 84.7L324.6 90M315.4 301.6L298.1 290.4M262.8 139.7L244.2 138.8M380.2 102.4L367.4 99.4M421.7 133.1L427.4 131.1M360.7 146.8L377.3 142.5M350.2 152.5L369 152.1M369.7 199.2L378.8 194.5M426.7 189.6L423.4 191.2M390.8 159.7L400.1 163.4M430.7 169.1L421.6 170.1M413 232.1L402.2 230M521.1 94.3L514.7 93.8M433.2 100.6L433.6 102.7M412.1 172.1L406 175.2M307.8 140.9L329.3 141.2M440.2 98.2L437.8 96.1M351.8 181.6L340.2 176.5M432.6 158.9L432.5 157.8M391.8 241.8L402.2 241.5M387.1 332.9L372.3 337.3M428 165.9L426.5 164.3M411.9 228.8L416.7 229M399.8 307.4L400.1 303.5M405.4 299.6L404.9 302.2M324.6 90L310.5 96.1M315.4 301.6L329.7 291.7M318.2 197.4L301.1 194.9M435.6 94.6L440.9 95.5M532.6 101.5L535.8 102.6M392.4 227.5L389.1 219M434.1 151.2L429.5 152.1M431 123.8L431.9 121.6M444 100.1L438.1 101.1M297.3 280.3L301.6 270.6M232.4 232L228.8 246M423.7 204.9L420.5 206.3M340.6 147.1L335.5 155.7M205.7 285.4L234 290.2M192.1 230.2L217.5 227.1M548.7 91.9L539.9 97.4M204.8 329.4L190.6 315.3M421.8 90.7L412.2 91.3M425.6 153L426.5 155.3M297.2 116.6L271.8 115.6M401.4 124.9L398 131.4M259.8 170.4L278.3 170M368.8 209.6L382 212.3M292.9 105.8L285.7 98.6M374.2 220L357.1 217M437.6 133.3L435.6 134.4M396.1 314L397.4 316.7M324.2 182.9L340.2 176.5M367.9 236.4L347.4 240.4M264.4 96.8L283.6 92.4M436.6 138.4L431.4 138.8M192.1 230.2L216.1 238.1M348.3 170.2L367.3 164.8M626 95.8L623.1 101.3M403.2 255.4L403 251.6M352.1 104.1L367.4 99.4M422.9 157.1L421.9 154.6M404.4 274L396.9 270.1M426.7 189.6L425.8 188.1M212 296.7L186.1 289.9M345.6 299.3L315.4 301.6M205.2 206L198.7 218.1M437 104.4L438.3 102.6M414.8 183.2L424.3 182M623.1 101.3L601.7 100.8M409.2 87.7L423.1 87.9M198.7 218.1L192.1 230.2M438.1 101.1L441.4 101.8M376.7 244.1L382.9 238.8M588.3 84.7L583.1 89.1M426.8 138.4L431.4 138.8M608 113.5L598.2 112.5M367.9 236.4L383.4 232.4M340.6 147.1L342.4 137.8M212 296.7L227.7 306.2M414.6 210.5L415.7 213.5M413 232.1L411.9 228.8M400.1 163.4L414.2 162.8M438.1 101.1L433.6 102.7M419.3 228L416.7 229M211.8 193.8L232 194.3M211.8 193.8L225.1 202.2M374.2 220L389.1 219M577.8 105.9L569.7 103.8M398.7 311L392.3 310.8M415.3 248.4L411.3 250M418.8 230.5L413 232.1M382.8 280.2L374.5 272.2M132.9 339.4L110.1 339.4M432.1 161.5L428.6 163.1M416.3 243.3L415.3 244.5M416.2 107.5L423.9 107.7M205.7 285.4L239.1 276.8M265.5 133.6L275.3 126M396.9 168.6L391.2 174.6M275.4 143.4L291.3 138.2M314.6 225.7L334 222.1M335.3 124L323.4 127.3M572.9 101.5L585 103.2M368.8 209.6L356.1 205.5M356.2 90L365.6 93.9M385.5 152.8L390.8 159.7M402.5 285.5L399.2 288.2M425.4 174.7L419 173.9M290.8 164.2L262.8 163M403 251.6L411.3 250M232.4 232L247.2 243.5M408.4 262.2L402.9 259.8M397.9 237.2L391.8 241.8M433.6 153.8L432.9 152.5M346.7 198.2L356.1 205.5M360.7 146.8L350.2 152.5M317.6 234.9L309.1 247.3M117.5 323.2L139.5 327.2M496.9 88.7L499.2 87.2M392.6 317.3L396.1 314M222.3 330.7L244.3 315.3M409.4 279.1L404.9 276.9M378.8 194.5L366.4 192.1M244.7 133.2L262.8 139.7M376.2 316.1L362.3 320.6M351 84.7L340.3 88.9M437.6 133.3L437.1 135.9M598.2 112.5L593.6 111.8M532.6 101.5L533.4 99.7M437.1 135.9L436.6 138.4M421.3 217.7L420.8 220.3M398.5 184.3L403.3 180.9M410.5 213.8L415 215.8M429.4 133.4L427.4 131.1M446 89.8L442.6 91.6M420.8 220.3L420.3 222.9M119.7 363.6L110.1 339.4M438.6 128.2L437.1 129.8M299.3 238.4L288.4 245.8M178.9 254.5L209.3 253.7M429.2 127.2L433.8 127.5M440.2 98.2L444.1 99.1M385.3 259.9L390.2 253.5M392.4 227.5L374.2 220M404.4 304.7L403.9 307.3M225.4 211.1L250.2 201.9M415.8 226.8L416.7 229M342.1 99.4L354.6 98.8M376.2 96.5L367.4 99.4M432.2 91L441.4 90.2M403 251.6L410.5 253M424.7 199.8L419.1 198.4M394.7 179.4L403.3 180.9M328.6 247.2L309.1 247.3M539 103.7L542.3 104.7M292.9 105.8L302.6 102M430.2 171.7L425.6 171M232.4 232L250.6 221.2M419 173.9L420.6 176M410.5 213.8L415.7 213.5M443.5 102.6L438.3 102.6M431.3 146.8L425.7 147.2M428 165.9L421.1 167.9M301.1 207.8L301.1 194.9M428.7 179.4L424.9 177.9M429.2 176.8L428.2 177.9M422.9 157.1L428.7 157.5M399 84.7L400.6 90.7M418.1 150.8L419.4 146.7M346.7 198.2L366.4 192.1M428.7 149.5L429.5 152.1M319.8 145.8L340.6 147.1M404.9 196.3L410.1 201M268.8 276.4L252.1 285.2M413.8 167.1L414.2 162.8M257.2 333.2L279.7 316.3M414.3 253.6L410.5 253M328.6 247.2L325.1 256.8M441.1 115.4L434 116.9M418.7 130.2L413.6 133.5M626 95.8L609.3 96.8M580.7 112.8L588.9 111.7M432.5 157.8L428.7 157.5M429.4 133.4L432.6 130.4M533.2 95.6L523.5 96.8M401.4 293.4L403.6 289.9M533.2 95.6L525.8 91.6M435.6 143.5L433.3 142.1M404.4 274L390.1 273.9M417.8 235.6L417.3 238.2M611.1 117.5L612.7 115.1M185.5 242.4L178.9 254.5M430 108.5L434.4 105.8M297.2 116.6L279.5 120.3M413.3 258.7L408.8 256.4M401.5 320.1L401 322.6M366.9 107.4L381.4 110.4M265.3 260.3L268.8 276.4M412.1 172.1L419 173.9M413.1 223.6L412.3 220.7M295.2 154.8L305.6 149.6M351.9 224.8L357.1 217M429.4 135.1L433 136M556.1 107.9L559.6 108.6M400.1 163.4L381.8 167.4M386.2 313.5L390.7 307.4M257.8 109L266.4 104.1M435.8 137.1L431.4 138.8M544.6 99.4L539.5 101.5M421.8 183.9L414.8 183.2M270.2 224.5L255.7 229.6M286.7 213.7L301.1 207.8M399 332.9L394.7 332.5M426.2 192.2L418 192.7M390.9 95.1L376.1 90.3M415 84.7L423.3 85.2M552.5 107.2L556.5 106.2M411.2 101.6L425.2 104.6M539.5 101.5L547.1 103.7M217.3 271.9L242.6 265.9M404.4 209.2L412.2 206.8M439.3 106.6L434.4 105.8M422.5 112.5L429.1 112.6M169.9 327L190.6 315.3M421.6 170.1L429.1 167.6M393 301.1L394 304.3M265.3 260.3L242.6 265.9M308 110.8L316.1 106.2M323.4 117.7L297.2 116.6M387.1 332.9L377.6 325.8M249.7 301.2L272.8 286M395.1 325.7L389 327.7M407.6 244.3L406.7 247.1M544.6 99.4L549.5 96.8M570.2 91.9L560.6 97.9M605.3 92.2L589.5 97.2M440.2 98.2L436.4 99M435.1 146.1L431.3 146.8M287 84.7L303 84.7M522.9 98.3L527.2 97.2M585 103.2L577.8 105.9M281.4 133.8L291.3 138.2M302.6 102L316.1 106.2M364.9 111.9L372.5 117.9M376.5 251.9L357.9 262.3M587.5 113.8L588.9 111.7M303 84.7L319 84.7M301.1 207.8L283.3 206.3M169.9 327L187.4 328.2M392.7 338.4L393.3 340.8M187.4 328.2L204.8 329.4M564.3 105.7L567.2 107.8M416.2 107.5L408 105.4M382.8 280.2L380.2 289.5M407.7 268L408.7 264.6M139.5 327.2L132.9 339.4M398.5 184.3L407.8 185.4M294.1 144.9L305.6 149.6M569.7 103.8L560 103.5M436.1 141L435.6 143.5M572.9 101.5L569.7 103.8M399 103L380.2 102.4M340.9 129.3L342.4 137.8M418 192.7L413.1 188.6M198.7 218.1L231.9 218.3M369.7 199.2L356.1 205.5M419.8 225.4L419.3 228M429.5 152.1L423.4 150.4M384.9 321.8L377.6 325.8M406.4 141.8L390.8 144.9M442.6 91.6L432.2 91M533.2 95.6L527.2 97.2M412.2 206.8L416.1 204M390.1 273.9L390.5 278.2M441.3 87.4L442.8 85.6M239.1 187.5L249.2 181.1M406.4 141.8L406.3 145.3M433.6 153.8L429.5 152.1M419.4 141.3L418.7 143.8M396.9 168.6L381.8 167.4M527.2 97.2L523.5 96.8M269.6 148.7L253.8 152.3M386.4 123.4L370.6 129.3M602.5 110L608 113.5M423.2 207.5L420.5 206.3M425.2 104.6L416.2 107.5M421.3 217.7L417.1 220.4M255.5 189.7L272.8 184.6M385.8 337.2L393.3 340.8M422.2 212.6L418.5 212.4M289.6 187.1L310.1 188.9M321 152.4L340.6 147.1M348.3 170.2L363.9 177.4M417.3 238.2L415.1 239.5M437.1 135.9L435.6 134.4M401.5 320.1L396.5 319.2M251.3 121.1L256.8 126.3M399.8 201.5L393.1 194.2M186.3 301.3L205.4 307M340.9 129.3L323.4 127.3M327.1 338.1L307.6 321.7M421.8 215.2L418.5 212.4M390.2 253.5L395.9 257.7M303.2 310.5L307.6 321.7M279.3 299L303.2 310.5M269.7 178L259.8 170.4M380.2 184.7L365 183.7M426.3 120.5L421.7 122.6M418.2 180L426.8 180.5M405.4 226.1L415.8 226.8M433.1 156.3L432.6 158.9M602.8 84.7L583.1 89.1M444.5 97.5L440.2 98.2M414.2 162.8L422.3 161.6M432.6 158.9L432.1 161.5M416.8 240.8L416.3 243.3M431 84.7L423.1 87.9M414.4 125.1L414.6 121.5M441.6 112.8L441.1 111.4M412.3 263.8L408.7 264.6M416.3 243.3L415.8 245.9M418.8 230.5L416.7 229M400.5 325.2L400 327.7M407.2 136L398 131.4M376.7 244.1L376.5 251.9M440.9 95.5L444.5 96M205.2 206L225.1 202.2M416.6 153.7L418.1 150.8M400 327.7L399.5 330.3M563.1 109.3L566.6 110M414.8 251L411.3 250M418.3 233.1L413 232.1M269.7 178L272.8 184.6M421.7 122.6L431.9 121.6M126.3 351.5L110.1 339.4M431.7 164L428.6 163.1M411.2 101.6L415.6 97.5M566.6 110L570.1 110.7M408.4 284.3L402.5 285.5M344.1 322.6L326.1 313M431.9 121.6L436.4 121.5M418.5 212.4L418.6 210.6M351.1 191.4L366.4 192.1M351.9 224.8L334 222.1M383 84.7L376.1 90.3M400.5 325.2L394.6 322.2M439.6 123.1L436.4 123.9M389.6 265.1L396.9 270.1M269.7 178L289.8 178.8M513.2 95.1L514.7 93.8M429.4 133.4L435.6 134.4M560.3 107L567.2 107.8M283.6 92.4L298.3 93.4M425.3 136.6L426.8 138.4M319 84.7L335 84.7M353.2 94.3L342.1 99.4M434.7 89.1L439.1 89.2M429.4 133.4L421.7 133.1M553.6 105.1L556.5 106.2M407.2 136L397.3 138.4M134.9 324.5L146 315.1M436.4 123.9L432.7 125.9M385.8 337.2L393.2 335.1M425.6 153L429.5 152.1M204.8 329.4L222.3 330.7M393 301.1L387.3 304.2M389.5 284.6L399.2 288.2M216.1 238.1L228.8 246M300.5 256.1L301.6 270.6M222.3 330.7L239.8 331.9M598.3 107.2L609.5 106.4M132.9 339.4L126.3 351.5M442.6 91.6L441.4 90.2M421.8 183.9L421.7 185.8M577.8 105.9L580.1 107.8M126.3 351.5L119.7 363.6M445.5 92.4L442.6 91.6M441.6 112.8L437.7 114.4M271.4 200.9L258.2 208.7M286.7 213.7L296.6 222.5M347.4 275.3L364.3 279.1M346.7 198.2L333.8 191.3M607.7 117L612.7 115.1M357.8 252.1L360.4 244.7M411.3 250L410.5 253M584.1 113.3L587.5 113.8M416.2 107.5L407.2 109.8M419.4 146.7L425.7 147.2M431.2 166.6L429.1 167.6M421.7 133.1L425.3 136.6M393 301.1L400.2 299M426.7 189.6L421.7 189.3M159.2 290.9L186.1 289.9M406.4 294.5L399.6 296.2M351.8 181.6L333.8 191.3M400 327.7L395.1 329.9M392.6 317.3L397.4 316.7M283.6 92.4L271.2 90.2M392.4 227.5L396.2 223.7M380.2 306.9L376.2 316.1M501.5 84.7L499.2 87.2M393 301.1L384.5 297.3M266.7 241.1L259 251.3M415.1 239.5L410.2 238.3M413.8 256.1L410.5 253M441.6 112.8L434.3 113.6M440.6 118L434 116.9M438.1 130.8L432.6 130.4M244.3 315.3L213.2 318.2M431 84.7L447 84.7M402.2 220.7L413.1 223.6M560.4 101.3L569.7 103.8M257.8 109L272.3 109.6M281.4 133.8L275.3 126M345.6 299.3L326.1 313M385.3 259.9L397.9 263.4M544.9 84.7L548.7 91.9M327.1 338.1L344.6 339.4M405.9 297L400.2 299M443.5 102.6L441.4 101.8M536.8 91.8L525.8 91.6M308.4 215.5L334 222.1M533.2 95.6L531.6 97.8M398.5 335.4L393.2 335.1M407 191.4L413.1 188.6M285.7 98.6L266.4 104.1M394.7 332.5L395.1 329.9M399.8 201.5L410.1 201M425.4 174.7L424.9 177.9M227.7 306.2L205.4 307M297.2 116.6L308 110.8M601.5 104.4L609.5 106.4M432.1 161.5L431.7 164M601.7 100.8L609.5 106.4M580.1 107.8L580 110.5M324.2 182.9L333.8 191.3M244.3 315.3L279.7 316.3M422.7 210.1L420 208M342.2 232.8L347.4 240.4M426.3 116.1L434 116.9M431.7 164L431.2 166.6M357.9 262.3L357.8 252.1M348.2 160.6L366.3 157.1M294.1 144.9L295.2 154.8M335.3 124L341.8 116.9M415.3 248.4L414.8 251M359.4 125.6L369.3 122M424.9 177.9L428.2 177.9M419 173.9L426 172.9M398.5 335.4L394.7 332.5M396.5 109L380.2 102.4M611.1 117.5L614.4 116.5M406.4 141.8L418.7 143.8M426.5 110L430 108.5M399 332.9L398.5 335.4M602.5 110L593.6 111.8M297.3 280.3L272.8 286M407.6 244.3L410.5 240.8M377.3 142.5L390.8 144.9M306.9 180L310.1 188.9M385.5 152.8L369 152.1M307.8 127.9L323.4 127.3M426.9 143.1L419.4 141.3M513.5 89L506.4 86.4M415.6 97.5L424.6 94.3M187.4 328.2L190.6 315.3M421.7 189.3L423.4 191.2M400.6 90.7L409.2 87.7M394.6 294.9L384.5 297.3M394 304.3L390.7 307.4M438.1 130.8L436 132.3M361.2 115.9L353.3 119.9M548.7 91.9L536.8 91.8M300.5 256.1L325.1 256.8M410.1 201L412.1 198.6M400.1 303.5L394 304.3M398.5 184.3L396.4 189.8M318.2 197.4L323.7 206.4M328.6 247.2L317.6 234.9M419.8 225.4L415.8 226.8M441.8 108.8L437.4 110.5M389.6 265.1L390.1 273.9M359.4 125.6L335.3 124M403.3 180.9L410.7 178.6M352.9 285.5L347.4 275.3M413.3 196L421 194.7M445 94.9L444.5 97.5M427.7 184.5L421.8 183.9M402.4 315L397.4 316.7M271 84.7L264.4 96.8M428.7 179.4L428.2 181.9M411.9 228.8L402.2 230M573.8 84.7L583.1 89.1M415.8 245.9L411.2 247.6M406.7 159.5L414.2 162.8M504.3 88.6L513.5 89M299.3 238.4L309.1 247.3M412.3 263.8L411.9 266.3M426 172.9L425.6 171M402.2 220.7L396.2 223.7M217.3 271.9L192.9 263M429.2 160.4L426.4 161.6M251.3 121.1L279.5 120.3M440.6 118L436.4 119.3M436.6 138.4L435.8 137.1M385.3 259.9L395.9 257.7M524.5 88.7L536.8 91.8M533.2 95.6L521.1 94.3M421.8 215.2L420 216.5M493.6 87.4L496.4 85.3M421.7 189.3L425.8 188.1M323.7 206.4L356.1 205.5M286.7 213.7L308.4 215.5M372.5 117.9L381.4 110.4M446.5 87.3L446.1 88.4M399.8 201.5L396.5 205.4M396.5 319.2L394.6 322.2M436.4 123.9L436.4 121.5M414.4 125.1L401.4 124.9M400.6 90.7L412.2 91.3M415.1 176.4L420.6 176M318.2 197.4L333.8 191.3M594.2 114.9L597.6 115.4M269.7 178L249.2 181.1M351.8 181.6L351.1 191.4M420.8 220.3L417.1 220.4M418.2 180L424.3 182M539.5 101.5L533.4 99.7M415.8 245.9L407.6 244.3M592.5 109.8L584.2 109.7M307.5 158.7L305.6 149.6M401.5 320.1L394.6 322.2M244.7 133.2L256.8 126.3M255.5 189.7L232 194.3M249.7 301.2L244.3 315.3M314.6 225.7L296.6 222.5M324.2 182.9L326 170.4M416.1 204L408.8 204.4M319.8 145.8L305.6 149.6M367.4 99.4L365.6 93.9M100 322L117.5 323.2M399.8 307.4L392.3 310.8M379.1 173.2L391.2 174.6M225 169.6L245.4 165.7M399.8 201.5L386.1 198.9M588.9 111.7L593.6 111.8M436.6 138.4L436.1 139.9M422.9 157.1L415.2 159.4M307.8 127.9L312.9 133.2M533.2 95.6L539.9 97.4M222.2 261.4L209.3 253.7M409.7 217.8L415 215.8M362.1 340.6L379.5 341.9M444 100.1L440.2 98.2M425.7 147.2L423.6 145.1M329.9 112.7L316.1 106.2M389.6 265.1L374.5 272.2M421.8 215.2L421.3 217.7M351.1 191.4L333.8 191.3M447 84.7L439.7 84.9M411.9 266.3L408.7 264.6M367.9 236.4L360.4 244.7M366.9 107.4L380.2 102.4M270.2 224.5L279.2 232.9M399.3 149.7L412.3 148.7M433.1 156.3L426.5 155.3M238.1 145.3L244.2 138.8M524.5 88.7L519.6 91.8M548.7 91.9L549.5 96.8M425.4 174.7L420.6 176M377.3 142.5L397.3 138.4M614.5 118L617.4 112.5M407.6 244.3L415.3 244.5M407.9 286.8L402.5 285.5M421.4 196.8L421 194.7M342.2 232.8L364.9 229.3M410.4 235.3L410.2 238.3M580.7 112.8L584.1 113.3M269.6 148.7L273.5 156.5M425.7 147.2L423.4 150.4M329.7 291.7L298.1 290.4M423.6 125.9L421.7 122.6M516.5 96.1L514.7 93.8M301.1 194.9L310.1 188.9M350.6 112.3L364.9 111.9M623.1 101.3L609.5 106.4M406.5 270L396.9 270.1M284 264.5L279.7 254.3M389.5 284.6L382.8 280.2M353.2 94.3L354.6 98.8M425.3 136.6L429.4 135.1M152.4 325.7L146 315.1M363.1 310.2L362.3 320.6M409.2 87.7L412.2 91.3M417.3 238.2L413.6 236.5M403.9 307.3L399.8 307.4M521.1 94.3L519.6 91.8M418.7 130.2L423.6 125.9M276.7 191.8L272.8 184.6M339.3 213.6L308.4 215.5M352.9 285.5L368.2 289M217.3 271.9L222.2 261.4M165.8 278.7L194.4 273.8M382 212.3L382.8 204.2M255.5 189.7L239.1 187.5M262.8 163L245.4 165.7M564.3 105.7L556.5 106.2M371.2 296.4L368.2 289M256.3 116.1L271.8 115.6M418.3 233.1L417.8 235.6M413.8 256.1L408.8 256.4M441.1 115.4L437.7 114.4M376.5 251.9L390.2 253.5M326 170.4L331.2 163M402 317.5L401.5 320.1M186.3 301.3L168.7 310.9M549 106.5L553.6 105.1M423.2 207.5L420 208M422.9 157.1L415.9 156.7M399.5 330.3L394.7 332.5M552.5 107.2L556.1 107.9M403 251.6L399.1 245.6M403.2 255.4L410.5 253M420.2 203.6L420.5 206.3M431.4 138.8L433.3 142.1M431.4 144.8L423.6 145.1M564.3 105.7L570.9 107M425.4 158.6L426.4 161.6M405.9 297L399.6 296.2M380.2 306.9L386.2 313.5M374.5 272.2L390.1 273.9M347.4 240.4L360.4 244.7M269.6 148.7L255.5 144.8M399.5 330.3L395.1 329.9M335.5 155.7L350.2 152.5M415.1 176.4L406 175.2M601 115.9L604.4 116.4M559.6 108.6L560.3 107M504.3 88.6L506.4 86.4M421.1 167.9L429.1 167.6M592.5 109.8L588.9 111.7M279.2 232.9L255.7 229.6M444.5 97.5L437.8 96.1M117.5 323.2L132.9 339.4M572.9 101.5L560.4 101.3M342.2 232.8L334 222.1M400.6 90.7L376.1 90.3M516.5 96.1L521.1 94.3M419.4 141.3L427 140.2M416.1 204L416.9 200.9M414.3 112.4L422.5 112.5M325.1 256.8L357.8 252.1M134.9 324.5L152.4 325.7M286.7 213.7L283.3 206.3M405.4 299.6L400.2 299M399.8 201.5L382.8 204.2M406 175.2L403.3 180.9M418.6 165.5L422.3 161.6M406.9 291.9L401.4 293.4M357.9 262.3L325.1 256.8M152.4 325.7L169.9 327M413.1 223.6L417.1 220.4M353.2 94.3L340.3 88.9M159.2 290.9L152.6 303M422.5 112.5L426.5 110M394.6 294.9L399.6 296.2M496.4 85.3L499.2 87.2M308 110.8L287.4 110.9M152.6 303L146 315.1M417.6 187.6L425.8 188.1M384.5 297.3L380.2 289.5M410.6 94.8L424.6 94.3M433.6 102.7L434.4 105.8M376.7 244.1L367.9 236.4M410.9 271.5L407.5 272.2M308.4 215.5L301.1 207.8M427.7 184.5L424.3 182M408.4 284.3L405.4 282.4M348.2 160.6L348.3 170.2M617.4 112.5L608 113.5M387.4 116.5L403.8 114.2M396.5 109L403.8 114.2M234.3 176.3L259.8 170.4M553.6 105.1L547.1 103.7M325.8 99.7L335.8 93.6M416.1 204L420.2 203.6M424.9 177.9L426.8 180.5M384.9 130.5L398 131.4M423.9 107.7L430 108.5M265.5 133.6L262.8 139.7M344.6 339.4L344.1 322.6M399.8 201.5L408.8 204.4M437.1 135.9L435.8 137.1M326 170.4L306.9 180M434 116.9L437.7 114.4M437.6 133.3L436 132.3M444.5 97.5L444.5 96M294.1 144.9L275.4 143.4M376.2 316.1L377.6 325.8M366.3 157.1L367.3 164.8M601.7 100.8L589.5 97.2M392.4 227.5L383.4 232.4M385.3 259.9L373.1 265.4M421.6 170.1L425.6 171M382.8 280.2L364.3 279.1M379.1 173.2L381.8 167.4M404.4 274L404.9 276.9M408.4 262.2L408.7 264.6M310.5 96.1L302.6 102M432.3 96.4L436.4 99M367 84.7L383 84.7M403.4 280.9L405.4 282.4M367.3 164.8L381.8 167.4M345.6 299.3L329.7 291.7M257.2 333.2L274.7 334.4M285.7 98.6L298.3 93.4M217.3 271.9L239.1 276.8M113.2 375.7L106.6 387.9M399.2 288.2L401.4 293.4M299.3 238.4L279.2 232.9M402 317.5L397.4 316.7M284 264.5L265.3 260.3M434.1 151.2L433.6 153.8M289.6 187.1L301.1 194.9M396.5 109L387.4 116.5M585 103.2L588.8 106.4M106.6 387.9L100 400M414.5 218.9L417.1 220.4M364.7 170.1L381.8 167.4M231.5 157.5L245.4 165.7M433.6 153.8L433.1 156.3M426.9 143.1L418.7 143.8M415.1 176.4L410.7 178.6M594.2 114.9L598.2 112.5M398.5 276.8L390.1 273.9M425.7 194.7L421.4 196.8M417.3 238.2L416.8 240.8M412.3 148.7L405.8 153M379.1 173.2L363.9 177.4M328.5 133.2L342.4 137.8M435.6 94.6L432.3 96.4M264.4 96.8L271.2 90.2M255.7 229.6L250.6 221.2M401 322.6L400.5 325.2M413 232.1L410.4 235.3M444.5 97.5L440.9 95.5M506.7 92.7L510 94M559.6 108.6L563.1 109.3M279.5 120.3L271.8 115.6M383.4 232.4L402.2 230M290.8 164.2L295.2 154.8M620.2 106.9L611.5 110.9M587.5 113.8L590.5 112.9M307.8 140.9L319.8 145.8M402.5 285.5L396.2 282.7M421.7 133.1L429.4 135.1M411.3 250L411.2 247.6M414.5 218.9L420 216.5M364.7 170.1L363.9 177.4M405.5 118.9L401.4 124.9M402.5 285.5L405.4 282.4M213.2 318.2L190.6 315.3M255.5 144.8L275.4 143.4M389.1 219L396.2 223.7M392.3 310.8L390.7 307.4M424.9 177.9L420.6 176M444.5 97.5L444.1 99.1M328.5 133.2L323.4 127.3M433.3 142.1L427 140.2M205.4 307L190.6 315.3M433.8 127.5L432.7 125.9M536.8 91.8L539.9 97.4M325.1 256.8L301.6 270.6M266.7 241.1L288.4 245.8M428.7 149.5L425.7 147.2M377.3 142.5L385.5 152.8M430.7 169.1L430.2 171.7M402.2 220.7L402.5 214.7M426.5 110L429.1 112.6M410.6 94.8L415.6 97.5M345.6 299.3L352.9 285.5M411.9 266.3L407.7 268M425.7 147.2L430.2 148.1M430.2 171.7L429.7 174.2M414.3 253.6L413.8 256.1M413.3 196L418 192.7M412.3 128.7L418.7 130.2M406.7 159.5L415.2 159.4M390.1 273.9L396.9 270.1M431.8 114.9L429.1 112.6M501.5 84.7L506.4 86.4M413.8 256.1L413.3 258.7M426.8 138.4L433 136M409.4 279.1L403.4 280.9M398 338L397.5 340.5M417.8 235.6L410.4 235.3M249.7 301.2L252.1 285.2M411.4 268.9L407.7 268M348.3 170.2L331.2 163M431.6 119.2L423.1 118.4M594.2 114.9L590.5 112.9M431.4 138.8L436.1 139.9M307.2 122.4L323.4 127.3M439.1 89.2L441.4 90.2M419.4 146.7L406.3 145.3M363.1 310.2L376.2 316.1M258.2 208.7L250.2 201.9M331.2 163L335.5 155.7M299.3 238.4L317.6 234.9M589.5 97.2L609.3 96.8M432.6 130.4L433.8 127.5M406 175.2L410.7 178.6M392.4 227.5L364.9 229.3M258.2 208.7L250.6 221.2M385.3 259.9L389.6 265.1M442.8 94L440.9 95.5M369.6 135.8L359 140.1M402.2 220.7L409.7 217.8M404.9 302.2L400.1 303.5M339.3 213.6L334 222.1M620.2 106.9L609.5 106.4M415.1 176.4L419 173.9M416.8 240.8L415.7 242M604.4 116.4L607.1 115.5M267.6 216.5L283.3 206.3M399 84.7L415 84.7M436.1 141L431.4 138.8M185.5 242.4L216.1 238.1M205.7 285.4L186.1 289.9M272.8 286L298.1 290.4M359.4 125.6L340.9 129.3M585 103.2L589.5 97.2M418.6 165.5L428 165.9M399.8 307.4L394 304.3M403.2 255.4L408.8 256.4M351.1 191.4L365 183.7M279.2 232.9L296.6 222.5M415 84.7L431 84.7M426.8 138.4L420 138.4M380.2 102.4L401 98.6M292.2 335.7L309.6 336.9M428.4 97.9L422 100.9M426.5 164.3L428.6 163.1M414.4 125.1L421.7 122.6M403.4 309.8L399.8 307.4M324.6 90L305.7 89.1M431 84.7L436.5 86.3M350.6 112.3L329.9 112.7M369.6 135.8L397.3 138.4M309.6 336.9L327.1 338.1M376.2 96.5L365.6 93.9M308.4 215.5L296.6 222.5M396.5 205.4L404.4 209.2M421.7 189.3L418 192.7M433.6 102.7L437 104.4M249.7 301.2L227.7 306.2M300.5 256.1L288.4 245.8M387.4 116.5L381.4 110.4M425.4 174.7L426 172.9M396.5 109L381.4 110.4M431.3 146.8L431.4 144.8M232.4 232L231.9 218.3M323.4 117.7L335.3 124M423.6 125.9L432.7 125.9M552.5 107.2L553.6 105.1M409.9 276.6L404.4 274M422 100.9L433.2 100.6M432.1 161.5L426.4 161.6M510 94L512.7 92.2M321 152.4L335.5 155.7M404.4 209.2L414.6 210.5M271.4 200.9L301.1 194.9M374.2 220L364.9 229.3M441.3 87.4L446.1 88.4M351.8 181.6L363.9 177.4M256.8 126.3L265.5 133.6M412.3 220.7L414.5 218.9M217.3 271.9L194.4 273.8M257.8 109L271.8 115.6M410.6 94.8L390.9 95.1M406.7 159.5L415.9 156.7M515.9 84.7L513.5 89M307.8 127.9L297.1 132.2M353.2 94.3L365.6 93.9M429.4 133.4L429.4 135.1M379.5 341.9L393.3 340.8M414.6 210.5L418.6 210.6M297.2 116.6L287.4 110.9M413 232.1L403.4 233.5M560.6 97.9L549.5 96.8M402.2 220.7L389.1 219M431.9 121.6L436.4 119.3M134.9 324.5L139.5 327.2M368.2 289L380.2 289.5M339.3 213.6L356.1 205.5M209.3 253.7L228.8 246M297.3 280.3L298.1 290.4M418.2 180L414.8 183.2M402.2 230L403.4 233.5M234.3 176.3L249.2 181.1M446 89.8L445.5 92.4M366.3 157.1L390.8 159.7M169.9 327L168.7 310.9M412.2 206.8L420.5 206.3M414.4 125.1L423.6 125.9M445.5 92.4L445 94.9M429.7 174.2L429.2 176.8M407.8 185.4L414.8 183.2M364.9 229.3L383.4 232.4M397.5 340.5L397 343.1M117.5 323.2L110.1 339.4M410.4 274L407.5 272.2M420 208L420.5 206.3M429.2 176.8L428.7 179.4M432.1 161.5L429.2 160.4M413.3 258.7L412.8 261.2M270.2 224.5L250.6 221.2M412.3 263.8L408.4 262.2M382.8 280.2L390.5 278.2M570.1 110.7L575.8 109M412.8 261.2L412.3 263.8M539.9 97.4L533.4 99.7M395.1 325.7L384.9 321.8M382.8 204.2L386.1 198.9M385.5 152.8L399.8 156.5M279.3 299L315.4 301.6M332.2 269.5L319 282M392.6 317.3L396.5 319.2M487 84.7L490.3 86M414.8 183.2L410.7 178.6M425.6 153L423.4 150.4M213.2 318.2L227.7 306.2M435.8 137.1L433 136M389 327.7L387.1 332.9M437.1 108.1L430 108.5M231.9 218.3L217.5 227.1M587.5 113.8L590.8 114.4M426.3 116.1L431.6 119.2M398 131.4L397.3 138.4M414.2 162.8L415.2 159.4M408.4 262.2L408.8 258.9M513.5 89L512.7 92.2M419.1 198.4L416.9 200.9M442.5 107.7L439.3 106.6M274.7 334.4L279.7 316.3M294.1 144.9L291.3 138.2M271.4 200.9L283.3 206.3M178.9 254.5L192.9 263M367.9 236.4L364.9 229.3M332.2 269.5L301.6 270.6M335.8 93.6L340.3 88.9M442.5 107.7L442 110.3M410.4 235.3L403.4 233.5M241 255.3L259 251.3M553.2 102.8L548.2 101.2M374.2 220L382 212.3M533.2 95.6L536.8 91.8M426.2 192.2L425.7 194.7M344.6 339.4L362.1 340.6M431.6 119.2L431.9 121.6M409.9 276.6L409.4 279.1M583.1 89.1L570.2 91.9M597.6 115.4L598.2 112.5M426.3 116.1L429.1 112.6M146 315.1L168.7 310.9M393 301.1L400.1 303.5M244.7 133.2L244.2 138.8M389.5 284.6L390.5 292M416.6 153.7L425.6 153M312.9 133.2L323.4 127.3M434 92.9L424.6 94.3M399 103L411.2 101.6M418.6 165.5L414.2 162.8M359.4 125.6L353.3 133.3M402.5 214.7L394 210.4M419.4 146.7L418.7 143.8M297.1 132.2L281.4 133.8M439.1 125.6L432.7 125.9M408 105.4L407.2 109.8M403.8 114.2L407.2 109.8M390.9 95.1L400.6 90.7M342.1 99.4L325.8 99.7M390.5 292L399.2 288.2M247.2 243.5L228.8 246M590.8 114.4L590.5 112.9M389.5 284.6L380.2 289.5M526.1 99.4L531.6 97.8M413.8 167.1L418.6 165.5M198.7 218.1L217.5 227.1M396.1 314L392.3 310.8M570.9 107L569.7 103.8M429.4 133.4L436 132.3M432.3 110.8L430 108.5M307.8 140.9L305.6 149.6M444 100.1L444.1 99.1M420 208L418.6 210.6M266.7 241.1L255.7 229.6M559.4 84.7L573.8 84.7M250.6 221.2L267.6 216.5M292.2 335.7L307.6 321.7M414.4 125.1L412.3 128.7M542.3 104.7L547.1 103.7M406.5 270L407.7 268M418.2 180L424.9 177.9M432.3 110.8L426.5 110M257.8 109L251.3 121.1M299.3 238.4L314.6 225.7M356.1 205.5L357.1 217M612.7 115.1L614.4 116.5M271.4 200.9L276.7 191.8M362.1 340.6L370.5 331.2M439.1 89.2L441.3 87.4M244.7 133.2L265.5 133.6M548.2 101.2L547.1 103.7M390.2 253.5L403 251.6M212 296.7L205.4 307M351.9 224.8L364.9 229.3M427.2 187L421.7 185.8M402.2 220.7L412.3 220.7M425.5 128.9L418.7 130.2M515.9 84.7L506.4 86.4M431.7 164L428 165.9M386.4 123.4L369.3 122M501.5 84.7L496.4 85.3M390.8 159.7L381.8 167.4M262.8 163L251.2 158.8M563.1 109.3L567.2 107.8M408.9 281.7L403.4 280.9M426.5 155.3L428.7 157.5M366.9 107.4L369.1 103.6M413.3 196L404.9 196.3M402.5 266.2L396.9 270.1M431.4 138.8L433 136M426.8 180.5L424.3 182M363.1 310.2L326.1 313M412.2 242.5L415.3 244.5M580.7 112.8L580 110.5M234.3 176.3L239.1 187.5M386.4 123.4L372.5 117.9M545.5 105.8L549 106.5M584.2 109.7L580 110.5M588.8 106.4L598.3 107.2M259.8 170.4L245.4 165.7M395.1 325.7L395.1 329.9M326.1 313L307.6 321.7M429.2 127.2L432.7 125.9M588.9 111.7L590.5 112.9M389.1 219L402.5 214.7M332.2 269.5L325.1 256.8M391.8 248.7L403 251.6M319 84.7L305.7 89.1M404.4 304.7L400.1 303.5M416.3 243.3L415.7 242M418.7 143.8L423.6 145.1M380.2 306.9L390.7 307.4M607.7 117L607.1 115.5M249.7 301.2L279.3 299M396.4 189.8L393.1 194.2M222.2 261.4L242.6 265.9M431.4 144.8L433.3 142.1M421.8 90.7L423.1 87.9M549 106.5L547.1 103.7M315.4 301.6L303.2 310.5M407.2 136L413.6 133.5M335 84.7L340.3 88.9M441.6 112.8L441.1 115.4M403.2 255.4L402.9 259.8M572.9 101.5L577.8 105.9M392.7 338.4L393.2 335.1M422.5 112.5L426.3 116.1M408.8 256.4L402.9 259.8M384.9 321.8L389 327.7M425.5 128.9L427.4 131.1M255.5 144.8L244.2 138.8M553.2 102.8L553.6 105.1M425.2 197.3L424.7 199.8M300.5 256.1L279.7 254.3M371.2 296.4L380.2 289.5M396.2 282.7L390.5 278.2M239.1 187.5L232 194.3M444 100.1L436.4 99M399.5 330.3L399 332.9M421.7 189.3L413.1 188.6M333.8 191.3L310.1 188.9M584.2 109.7L588.8 106.4M185.5 242.4L209.3 253.7M346.7 198.2L323.7 206.4M607.1 115.5L602.9 114.8M301.1 194.9L283.3 206.3M570.1 110.7L573.7 111.4M350.6 112.3L341.8 116.9M413 232.1L416.7 229M428 165.9L429.1 167.6M513.2 95.1L516.5 96.1M401.4 293.4L394.6 294.9M549.5 96.8L548.2 101.2M443.5 102.6L437 104.4M426.9 143.1L427 140.2M251.3 121.1L271.8 115.6M549.5 96.8L539.9 97.4M431.3 146.8L430.2 148.1M530.4 84.7L524.5 88.7M429.2 176.8L424.9 177.9M422.9 157.1L425.4 158.6M402.2 241.5L410.2 238.3M370.5 331.2L362.3 320.6M383 84.7L400.6 90.7M335 84.7L351 84.7M399.8 307.4L390.7 307.4M434 92.9L432.2 91M348.2 160.6L367.3 164.8M415.9 156.7L421.9 154.6M602.5 110L611.5 110.9M414.8 251L410.5 253M588.3 84.7L602.8 84.7M407.2 136L411.2 139M406.4 141.8L397.3 138.4M328.6 247.2L347.4 240.4M367.9 236.4L382.9 238.8M436.1 141L433.3 142.1M342.1 99.4L335.8 93.6M437.1 108.1L437.4 110.5M440.3 93.3L435.6 94.6M404.9 196.3L412.1 198.6M392.4 227.5L405.4 226.1M340.6 147.1L329.3 141.2M418.2 180L420.6 176M290.8 164.2L307.5 158.7M403 251.6L406.7 247.1M425.4 158.6L422.3 161.6M216.1 238.1L217.5 227.1M293.8 125.4L307.2 122.4M394.7 332.5L393.2 335.1M406.4 141.8L411.2 139M439.3 106.6L437 104.4M392.6 317.3L394.6 322.2M416.6 153.7L415.9 156.7M608 113.5L602.9 114.8M421.8 215.2L415 215.8M366.9 107.4L364.9 111.9M264.4 96.8L266.4 104.1M396.1 314L398.7 311M414.3 112.4L407.2 109.8M376.2 96.5L380.2 102.4M348.3 170.2L364.7 170.1M399.3 149.7L406.3 145.3M418.7 130.2L427.4 131.1M506.7 92.7L507.8 90.6M393.1 194.2L386.1 198.9M400.2 299L399.6 296.2M425.3 136.6L413.6 133.5M418 192.7L407 191.4M301.1 194.9L276.7 191.8M279.2 232.9L288.4 245.8M418 192.7L423.4 191.2M593.6 111.8L590.5 112.9M421.8 215.2L415.7 213.5M258.2 208.7L225.4 211.1M410.5 213.8L404.4 209.2M407.5 272.2L396.9 270.1M420 138.4L413.6 133.5M601.5 104.4L598.3 107.2M172.3 266.6L192.9 263M364.9 111.9L381.4 110.4M284 264.5L268.8 276.4M389.6 265.1L397.9 263.4M418.6 165.5L426.5 164.3M440.3 93.3L442.8 94M623.1 101.3L620.2 106.9M357.9 262.3L347.4 275.3M294.4 171.6L315.3 164.4M602.5 110L609.5 106.4M373.1 265.4L374.5 272.2M354.6 98.8L367.4 99.4M405.5 118.9L415.3 117.4M359.4 125.6L353.3 119.9M410.6 94.8L412.2 91.3M513.5 89L519.6 91.8M239.1 276.8L234 290.2M300.5 256.1L309.1 247.3M564.3 105.7L569.7 103.8M414.6 210.5L412.2 206.8M431.2 166.6L430.7 169.1M414.3 112.4L426.5 110M421.9 154.6L426.5 155.3M414.8 251L414.3 253.6M399 103L408 105.4M360.7 146.8L359 140.1M209.3 253.7L192.9 263M408.8 258.9L402.9 259.8M314.6 225.7L342.2 232.8M564.3 105.7L560.3 107M396.2 282.7L405.4 282.4M398.5 335.4L398 338M432.3 110.8L437.4 110.5M407.8 185.4L413.1 188.6M573.7 111.4L580 110.5M487 84.7L496.4 85.3M405.8 153L415.9 156.7M395.1 325.7L394.6 322.2M234.3 176.3L245.4 165.7M577.2 112.1L580.7 112.8M407.8 185.4L403.3 180.9M350.6 112.3L352.1 104.1M441.8 108.8L437.1 108.1M287 84.7L305.7 89.1M415.7 213.5L418.5 212.4M397.3 138.4L390.8 144.9M434.7 89.1L423.1 87.9M402 317.5L396.5 319.2M287.4 110.9L271.8 115.6M289.8 178.8L272.8 184.6M553.2 102.8L560 103.5M366.3 157.1L369 152.1M309.6 336.9L307.6 321.7M398.5 276.8L404.9 276.9M419.1 198.4L421.4 196.8M225 169.6L234.3 176.3M412.2 206.8L420 208M332.2 269.5L357.9 262.3M383 84.7L399 84.7M428.2 181.9L427.7 184.5M274.7 334.4L292.2 335.7M407.6 244.3L399.1 245.6M544.6 99.4L548.2 101.2M414.6 121.5L423.1 118.4M432.3 96.4L437.8 96.1M545.5 105.8L547.1 103.7M436.5 86.3L423.1 87.9M205.7 285.4L212 296.7M411.9 266.3L411.4 268.9M297.1 132.2L291.3 138.2M415.3 248.4L411.2 247.6M431.2 166.6L428 165.9M439.7 84.9L442.8 85.6M566.6 110L567.2 107.8M297.2 116.6L293.8 125.4M424.7 199.8L416.9 200.9M493.6 87.4L496.9 88.7M519.6 91.8L512.7 92.2M217.3 271.9L205.7 285.4M411.2 101.6L401 98.6M432.3 110.8L434.3 113.6M415 84.7L423.1 87.9M442 110.3L441.1 111.4M405.5 118.9L403.8 114.2M496.9 88.7L500.1 90M433.2 100.6L436.4 99M570.9 107L580.1 107.8M432.6 130.4L427.4 131.1M432.6 130.4L425.5 128.9M424.6 94.3L432.3 96.4M597.6 115.4L601 115.9M413.8 167.1L421.1 167.9M628.8 90.2L605.3 92.2M403.2 255.4L390.2 253.5M269.6 148.7L295.2 154.8M366.3 157.1L350.2 152.5M364.7 170.1L367.3 164.8M442.5 107.7L437.1 108.1M310.5 96.1L325.8 99.7M401 322.6L394.6 322.2M308.4 215.5L314.6 225.7M249.7 301.2L279.7 316.3M530.4 84.7L536.8 91.8M510 94L514.7 93.8M365 183.7L366.4 192.1M413.3 196L421.4 196.8M501.5 84.7L515.9 84.7M429.7 174.2L426 172.9M386.4 123.4L401.4 124.9M515.9 84.7L530.4 84.7M442 110.3L437.4 110.5M410.1 201L408.8 204.4M265.3 260.3L259 251.3M436.1 141L436.1 139.9M404.4 274L407.5 272.2M412.3 148.7L406.3 145.3M342.2 232.8L317.6 234.9M405.5 118.9L387.4 116.5M406 175.2L396.9 168.6M396.5 109L399 103M531.6 97.8L527.2 97.2M435.6 134.4L429.4 135.1M432.6 158.9L429.2 160.4M418.6 165.5L421.1 167.9M417.3 238.2L410.2 238.3M589.5 97.2L575.8 96M347.4 275.3L374.5 272.2M415.3 117.4L414.6 121.5M572.9 101.5L575.8 96M399.3 149.7L399.8 156.5M421.7 133.1L413.6 133.5M265.3 260.3L241 255.3M371.2 296.4L363.1 310.2M432.3 110.8L429.1 112.6M405.4 226.1L402.2 230M426.3 120.5L414.6 121.5M391.8 248.7L399.1 245.6M438.1 101.1L436.4 99M368.2 289L364.3 279.1M399.3 149.7L405.8 153M443 105.2L437 104.4M222.2 261.4L192.9 263M369.3 122L353.3 119.9M423.9 107.7L434.4 105.8M410.6 94.8L400.6 90.7M445 94.9L442.8 94M376.7 244.1L391.8 248.7M416.6 153.7L421.9 154.6M345.6 299.3L368.2 289M415.3 117.4L423.1 118.4M266.7 241.1L279.2 232.9M601.5 104.4L588.8 106.4M297.3 280.3L268.8 276.4M402.9 312.4L398.7 311M434 92.9L435.6 94.6M390.9 95.1L401 98.6M301.1 207.8L323.7 206.4M413.1 188.6L417.6 187.6M380.2 184.7L366.4 192.1M438.1 101.1L438.3 102.6M426.3 120.5L423.1 118.4M284 264.5L300.5 256.1M422.3 161.6L426.4 161.6M331.3 107.7L325.8 99.7M186.1 289.9L194.4 273.8M414.8 183.2L421.7 185.8M328.5 133.2L340.9 129.3M443.5 102.6L443 105.2M426.3 116.1L423.1 118.4" stroke="#121200" stroke-opacity="0.9" stroke-width="0.85" fill="none"/><path d="M475.8 94.1L464.6 99.5M444.7 251.6L456 252.4M449.5 239.2L458.2 244.7M443 105.2L442.5 107.7M458.2 244.7L457.2 247.9M425.2 197.3L439.3 197.3M427.2 187L426.7 189.6M405.4 299.6L418.3 302.2M594.3 125.5L591.9 130.2M483.6 265L493.7 265M426.7 189.6L426.2 192.2M410.9 271.5L410.4 274M584.3 142.1L581.6 147.2M473.8 112.2L480.3 117.9M444.6 176L453.3 178.2M569.5 133.9L568.2 139.2M608.2 130.2L591.9 130.2M545.8 139.4L544.2 142.7M410.4 274L409.9 276.6M500.1 90L503.4 91.3M505.2 281L515.4 285.7M510.8 147.2L523.4 150.8M529.9 188.3L544.8 188.5M490.2 272.2L505.9 277.8M503.4 91.3L506.7 92.7M583.1 178.8L564.4 176.8M464.5 163.3L485 168.1M468.1 299.3L480.3 301.9M535.1 206.1L551.3 205.6M504.3 302.7L494.2 307.1M595.6 154.5L577.1 156M604.4 116.4L607.7 117M551.8 176.4L562.4 180.2M460.6 314.5L459.2 318.8M436.6 138.4L456.2 142.1M514.9 222.6L526 223.2M455.4 307L453.3 309.9M553.7 235.5L551.6 239.5M458.7 193.8L458.7 197.1M410.9 271.5L426.5 272.7M526 223.2L544.7 221.9M570.5 203.1L552.6 201.2M472.2 342.1L466.8 344.4M431.9 325.6L437.8 327.6M436.2 345.4L446 346M423.2 207.5L435.5 210.2M521.4 210L530.9 215.1M449.5 239.2L459.6 238.6M446 346L455.8 346.6M500.1 104.4L522.3 105.4M514.8 252.3L534.1 252.1M522.3 105.4L533.4 108.2M518.1 304.3L504.3 302.7M464.6 99.5L464 105.8M446.5 87.3L465.7 87.6M450.4 268.3L469 270.3M556.2 112.6L575.5 117.7M397.5 340.5L406.8 343.7M477 126.1L487.1 127.6M538.5 239.5L537.3 243.9M432.7 285.4L446.9 286M516.7 126.5L533.7 130.4M532 111.3L519.1 118.3M456.2 142.1L470.8 143.3M453.7 256.2L441.1 260M446.9 286L463.9 285.8M595.6 154.5L578.9 150.1M512.3 143.4L525.6 146.7M519.7 97.2L522.9 98.3M561.9 155.9L577.1 156M491.7 134.5L513 138.5M403.9 307.3L416.5 305.9M534.9 172.3L553.8 171.6M473 285.2L471.7 288.9M437.4 272L449.5 277.7M418.3 302.2L426.6 303.2M490 314.5L498 315.3M465.2 159.9L486.5 163.6M545.3 251.7L534.1 252.1M402.9 312.4L415.2 311M610.3 126.1L608.2 130.2M468 151.5L487.3 156M486.4 284.9L484.7 289.4M422.3 290.3L430.5 294.7M567.5 171.9L564.4 176.8M519.7 97.2L502 101.5M541.1 259.8L539 263.8M422.2 212.6L435.5 210.2M571.9 164.3L578.1 170.8M467.9 339.6L472.2 342.1M458.3 302.6L455.4 307M471.4 331.2L481.6 332.7M447 84.7L451 84.7M508.4 189.8L529.1 193.9M539 263.8L536.9 267.9M523.1 205.6L532.3 209.5M479.8 330.9L490 331.4M489.4 197.3L504.3 202M433.9 339.1L432.3 344.7M488.3 319.5L493.8 323.5M520.2 108.3L532 111.3M454.6 336.3L453.6 339.8M459 84.7L465.7 87.6M405.9 297L419.4 298.9M572.7 125.7L594.3 125.5M432.5 240.2L432.2 244.1M442 110.3L441.6 112.8M475.4 130.5L474.2 135.7M519.4 160L538.8 158.6M468.2 273L467 276.6M425.7 194.7L425.2 197.3M493.5 129.3L491.7 134.5M469.3 146.4L454.8 150.7M438.7 269.1L449.8 272.5M538.8 158.6L560.7 160.4M461.5 175.8L483.2 176.7M409.4 279.1L408.9 281.7M422.9 286.2L430.8 288.2M483.2 176.7L498.4 176.1M534.8 271.9L522.9 272.9M426.3 307.1L415.2 311M497.9 298L504.3 302.7M439.6 193.4L458.7 193.8M532.6 101.5L522.3 100.7M468.7 218.3L481.7 218.3M591.4 162.6L573.7 159.2M542.3 104.7L533.4 108.2M406.4 294.5L421 292.8M476.7 315.5L488.3 319.5M456.4 210L472.3 209.7M423.2 324.5L410 327.4M414.3 253.6L430.7 251.8M426.4 344.8L432.3 344.7M584.1 113.3L575.5 117.7M430.7 169.1L449.1 168.2M491.2 193.7L489.4 197.3M433.3 226.8L452.9 226.2M486.4 338.9L484.5 344.1M493.8 98.9L486.2 99.4M610.3 126.1L595.3 122.1M455.6 331.7L470.3 335.3M470.4 242.7L475.1 239.9M471 84.7L465.7 87.6M587.5 113.8L575.5 117.7M462.8 109L483.2 107.9M506.3 238.8L504 243.2M525.1 226.2L522.7 229.8M430.3 256.7L443.1 255.9M439.1 125.6L438.6 128.2M486.3 237L494.9 239.1M585.1 174.7L578.1 170.8M481.8 268.2L491.9 269.4M422.7 210.1L422.2 212.6M444.7 251.6L453.7 256.2M513.6 256.4L512.2 260.3M550.4 126L571 128.7M422.2 212.6L421.8 215.2M406.4 294.5L405.9 297M434.1 151.2L452.7 154.9M590.3 149.3L578.9 150.1M408.4 284.3L422.9 286.2M426.5 272.7L426.5 276.8M544.2 142.7L565.5 147.5M405.9 297L405.4 299.6M526.1 99.4L529.4 100.4M537.8 164.3L536.8 168.8M453.3 309.9L462.3 310.7M509.9 150.4L521.6 154.7M444.1 302.2L458.3 302.6M505.8 160.3L503.9 163.2M529.4 100.4L532.6 101.5M485.7 184.2L481.5 185.3M437.8 327.6L438.5 329M463.3 168.1L484.4 172.6M480.3 301.9L494.2 307.1M566.3 211.2L564.2 215.2M463.2 290.1L469.1 294.2M453.3 178.2L460.8 179.7M604 138.3L601.9 142.3M553.7 235.5L540.1 235.1M496.6 180.5L495.2 185.4M458.7 197.1L458.4 202.1M475.7 339.2L486.4 338.9M459.2 318.8L457.8 323.2M497.1 344.8L495 348.9M544.8 188.5L556.2 193.7M534.8 271.9L532.7 276M441.5 314.9L450.3 319.3M477.2 196.8L475.8 201.6M455.9 214.3L455.1 219.2M503.4 332.7L495.2 337.3M475.6 318.5L474.3 322.3M525.1 226.2L533.2 228.6M440.5 339.7L438.8 345.2M455 84.7L459 84.7M470.8 215.1L468.7 218.3M437 246.3L448 243.9M453.6 339.8L452.6 344.7M439.1 125.6L460.5 125.7M478.8 336L475.7 339.2M435.5 210.2L434.8 214.5M513.6 256.4L531.4 256.5M459.6 238.6L458.2 244.7M458.8 131.1L475.4 130.5M533.4 108.2L520.2 108.3M424.7 199.8L439.3 197.3M518.1 304.3L509 309.2M459.1 275.3L468.2 273M516.1 129.4L531.3 134.5M473.8 112.2L462.9 117.5M454.9 146.5L469.3 146.4M419.8 225.4L434 222.7M469 270.3L480.1 273.1M606.1 134.2L591.9 130.2M490.2 272.2L488.7 278M505.5 328.6L490 331.4M533.7 130.4L531.3 134.5M525.6 146.7L523.4 150.8M507.9 273.2L505.9 277.8M522.4 186.1L531.6 184.9M403.9 307.3L415.2 311M486.5 163.6L485 168.1M446 346L440.5 339.7M593.5 158.5L577.1 156M512.2 176.5L534.5 176.8M503.4 332.7L490 331.4M428.2 181.9L442.4 183.6M504.3 202L525.1 202.5M562.1 219.3L546.5 219.7M564.4 176.8L562.4 180.2M484.5 344.1L490.4 346.4M431.9 325.6L422.5 327.2M540.7 174.7L551.8 176.4M500.9 218.1L516.8 218.3M529.1 193.9L540.4 198.2M410.4 274L426.5 272.7M427.7 184.5L442.4 183.6M439 323L437.8 327.6M516.5 96.1L502 101.5M556.1 107.9L556.2 112.6M433.2 234.8L450.9 235.2M543 192.7L554.8 197.4M532.3 209.5L530.9 215.1M481.6 332.7L487.5 335.4M541.1 212.1L547.1 214.4M455.1 219.2L434 222.7M462.9 117.5L480.3 117.9M559.6 108.6L556.2 112.6M474.4 102.9L464 105.8M438.1 130.8L437.6 133.3M519.1 118.3L517.4 120.6M491.7 134.5L491 137.8M461.9 120.9L460.5 125.7M500.4 294.5L510.1 294.9M437.4 272L435.2 277.8M515.2 134.2L513 138.5M468 151.5L466.2 155.7M569.5 133.9L587.4 137.5M576.8 190.9L556.2 193.7M449.8 272.5L449.5 277.7M490.3 86L493.6 87.4M543.2 255.7L534.1 252.1M404.9 302.2L404.4 304.7M538.8 158.6L558.2 163.5M488.1 150.6L487.3 156M571.9 164.3L569.2 168.8M430.8 288.2L430.5 294.7M590.8 114.4L594.2 114.9M425.6 311.3L424.5 314.6M560.7 160.4L571.9 164.3M535.8 102.6L539 103.7M483.2 176.7L496.6 180.5M486 206.6L504.2 206.6M511.2 179.4L510 183M562.1 219.3L560 223.3M498.4 176.1L511.2 179.4M599.8 146.4L597.7 150.4M533.2 180.4L522.4 186.1M467.3 222.8L479.7 222.6M489.4 197.3L487.4 201.8M416.5 305.9L415.2 311M488.3 319.5L485.2 324.7M503.4 91.3L503.7 95.7M535.8 102.6L522.3 105.4M506.7 196.8L504.3 202M508.5 235.2L521.4 235M494.9 319.6L493.8 323.5M399 332.9L407.2 335.4M502 101.5L522.3 100.7M472.2 342.1L484.5 344.1M472.3 209.7L482.8 214.5M502.4 214.9L500.9 218.1M473.7 252L489.3 252.3M610.3 126.1L594.3 125.5M405.4 299.6L419.4 298.9M510.7 264.7L527.2 265.3M434.6 148.7L434.1 151.2M475.1 239.9L492.4 243.5M487.5 279.7L505.2 281M512.7 226.5L510.6 231.4M590.8 114.4L595.3 122.1M608.2 130.2L594.3 125.5M545.8 139.4L568.2 139.2M548.9 130.4L569.5 133.9M505.2 281L517.7 281M470.1 265.8L450.4 268.3M526.4 288.1L512.5 290.9M507.8 155.9L521.6 154.7M571 128.7L589.3 134.4M542.3 145.6L541.6 150.8M453.7 256.2L452.9 261.4M491.9 269.4L507.9 273.2M468.1 299.3L482.7 298.8M512.5 290.9L500.4 294.5M449 282.3L432.7 285.4M565.5 147.5L564 151.3M508.7 268.3L522.9 272.9M532.7 276L522.9 272.9M564.2 215.2L547.1 214.4M460.6 314.5L471.3 317.6M503.9 163.2L515.6 168.4M421.3 331.7L436.7 333.2M410.9 271.5L428.1 269.2M398 338L407.2 335.4M494.2 307.1L492.7 310.9M547.4 247.6L545.3 251.7M460.8 179.7L459.5 186M475.8 201.6L473.8 205.5M510 94L503.7 95.7M457.8 323.2L457 327.6M465.6 347.2L475.4 347.7M483.3 179.9L481.5 185.3M455.6 331.7L454.6 336.3M516 308.4L513.9 312.4M440.9 318.6L447.7 323.2M462.8 109L473.8 112.2M486.2 99.4L500.1 104.4M439.3 197.3L458.4 202.1M465.7 87.6L465.2 92.8M495 348.9L490.4 346.4M407.2 335.4L405.8 339.7M590.8 114.4L575.5 117.7M493 124.7L516.7 126.5M437 246.3L446.7 248M443.5 102.6L464.6 99.5M516.7 126.5L535.7 126.1M502 101.5L500.1 104.4M490.6 143.1L512.3 143.4M444 100.1L443.5 102.6M473.9 247.5L473.7 252M512.3 143.4L527.4 143.4M432.5 240.2L448 243.9M451.4 158.8L465.2 159.9M448 243.9L446.7 248M427.7 184.5L427.2 187M442 110.3L462.8 109M520.4 261.4L510.7 264.7M417.3 238.2L432.5 240.2M578.9 186.9L559.1 188.7M433.6 153.8L452.7 154.9M420.8 220.3L434 222.7M407.9 286.8L422.9 286.2M465.2 159.9L486.7 159.4M531.3 134.5L529.2 139.2M509.9 150.4L507.8 155.9M411.4 268.9L410.9 271.5M424.7 319.5L440.9 318.6M469.3 146.4L488.1 150.6M546.8 134.1L545.8 139.4M463.3 168.1L462.8 172.7M463.2 290.1L460.4 293M469.1 294.2L459.3 298.6M488.9 147.1L509.9 150.4M508.4 189.8L529.9 188.3M473.2 327.9L483 327.3M426.3 307.1L442.6 310.6M551.6 239.5L540.1 235.1M449.6 163.4L463.3 168.1M512.2 176.5L533.2 180.4M523.1 205.6L535.1 206.1M503.4 332.7L487.5 335.4M562.4 180.2L559.6 185.3M443.4 306.4L453.3 309.9M559.1 188.7L556.2 193.7M534.5 176.8L549.3 181.5M500.4 222.4L514.9 222.6M540.4 198.2L552.6 201.2M438.5 329L421.3 331.7M417.8 235.6L433.2 234.8M427.7 184.5L440.6 188.6M530.9 215.1L546.5 219.7M438.6 128.2L460.5 125.7M485 338.5L475.7 339.2M503.7 209.3L519.1 214.3M432.5 240.2L449.5 239.2M494.3 253.9L499.2 252.1M478.1 231L462.1 234.8M441.1 115.4L440.6 118M417.3 238.2L433.2 234.8M478.9 227.8L463.4 230.2M499.2 252.1L514.8 252.3M506.3 238.8L517.9 243.4M428.1 269.2L438.7 269.1M517.9 243.4L535.2 248.2M440.6 118L440.1 120.5M424.7 199.8L424.2 202.4M528.5 284.1L515.4 285.7M438.7 269.1L450.4 268.3M424.2 202.4L423.7 204.9M408.4 284.3L407.9 286.8M480.3 117.9L494.3 121.9M519.2 239.1L517.9 243.4M513 138.5L490.6 143.1M422.9 286.2L432.7 285.4M407.9 286.8L407.4 289.4M459.5 134.8L471.5 138.1M487.7 256.8L485.6 261.1M478.3 193.4L491.2 193.7M497.9 298L507.5 298.6M449.5 277.7L449 282.3M516.5 96.1L519.7 97.2M403.4 309.8L415.2 311M426.6 303.2L443.4 306.4M484.3 210.1L503.7 209.3M476.7 315.5L490 314.5M612.4 122.1L610.3 126.1M445.9 264L450.4 268.3M464.8 227.1L478.9 227.8M543.2 255.7L541.1 259.8M543 192.7L540.4 198.2M447.7 323.2L437.8 327.6M455.8 346.6L452.6 344.7M541.1 212.1L530.9 215.1M454.1 222.5L467.3 222.8M525.1 202.5L523.1 205.6M506.3 238.8L519.2 239.1M435.4 335.7L440.5 339.7M483.2 107.9L497.8 110.2M434.6 148.7L454.8 150.7M543.7 226.4L542.3 231M442 335.8L453.6 339.8M472.2 255.7L487.7 256.8M444.5 97.5L464.5 94.5M426.2 192.2L439.6 193.4M497.8 110.2L520.2 108.3M535.7 126.1L550.4 126M464 105.8L462.8 109M433.4 230.7L433.2 234.8M458.2 244.7L473.9 247.5M550.4 126L572.7 125.7M493.8 98.9L500.1 104.4M527.4 143.4L544.2 142.7M421.3 217.7L435.1 216.9M408.4 284.3L424.3 280.9M475.3 244.4L491 248M426.5 272.7L437.4 272M503.7 286.1L515.4 285.7M544.2 142.7L566.7 143.6M467.7 124L460.5 125.7M466.1 302.8L480.3 301.9M429.1 265.2L428.1 269.2M505.8 160.3L519.4 160M589.3 134.4L587.4 137.5M480.3 301.9L496.7 302.4M450.3 319.3L459.2 318.8M560.7 160.4L558.2 163.5M453.3 178.2L461.5 175.8M484.7 289.4L482.7 294.4M422.2 336L435.4 335.7M498.4 176.1L496.6 180.5M533.2 180.4L510 183M530.6 280L528.5 284.1M544.8 188.5L559.1 188.7M515.6 168.4L514.3 173.1M502.3 289.1L500.4 294.5M411.9 266.3L428.1 269.2M455.4 307L462.3 310.7M435.4 335.7L442 335.8M574.7 195L554.8 197.4M459.5 186L452.3 190.6M464.4 306.1L478 310.6M472.2 342.1L473.7 345.1M457 327.6L455.6 331.7M435.5 210.2L456.4 210M438.2 201.9L458.1 205.4M398.5 335.4L407.2 335.4M487.5 335.4L486.4 338.9M497.3 113.4L519.8 112.4M459.6 238.6L475.1 239.9M516.1 129.4L533.7 130.4M499.2 340.8L484.5 344.1M440.1 120.5L439.6 123.1M477 126.1L493 124.7M510.8 147.2L525.6 146.7M518.1 228.3L510.6 231.4M439.6 123.1L439.1 125.6M423.7 204.9L423.2 207.5M532 111.3L540.1 117.9M571 128.7L569.5 133.9M505.5 328.6L491.2 326.9M519.1 118.3L537.6 120.4M525.6 146.7L542.3 145.6M464.5 163.3L486.5 163.6M497.1 256.4L496.1 261.3M423.2 207.5L422.7 210.1M407.4 289.4L406.9 291.9M428.7 179.4L443.8 180.5M508.7 268.3L507.9 273.2M486.5 163.6L492 165.4M551.8 176.4L564.4 176.8M508 258.8L504.1 262.9M436.6 138.4L457.8 137.3M504.1 262.9L493.7 265M406.9 291.9L406.4 294.5M486.4 284.9L502.3 289.1M562.1 219.3L547.1 214.4M507.6 192L529.1 193.9M494.2 307.1L478 310.6M478.7 277.1L475.6 282M522.9 98.3L526.1 99.4M451.1 296.4L459.3 298.6M517.7 164L515.6 168.4M458.3 302.6L464.4 306.1M529.1 193.9L543 192.7M521.4 210L532.3 209.5M608.2 130.2L606.1 134.2M449.1 168.2L462.8 172.7M440.9 318.6L439 323M532.3 209.5L541.1 212.1M490.3 86L488.5 92.2M551.6 239.5L538.5 239.5M522.9 98.3L522.3 100.7M410 327.4L408.2 331.5M439.3 197.3L438.2 201.9M512.7 226.5L518.1 228.3M446.5 87.3L455 84.7M475.4 347.7L473.7 345.1M536.9 267.9L534.8 271.9M434.8 214.5L435.1 216.9M454.6 336.3L467.9 339.6M546.5 219.7L544.7 221.9M451 84.7L455 84.7M433.3 226.8L451.9 230.9M497.1 256.4L508 258.8M436.6 138.4L436.1 141M452.9 226.2L463.4 230.2M401 322.6L410.6 323M437.4 272L449.8 272.5M420.3 222.9L419.8 225.4M545.3 251.7L535.2 248.2M449.8 272.5L459.1 275.3M576.8 190.9L559.1 188.7M452.9 261.4L452.1 263.6M422.3 290.3L430.8 288.2M493.5 129.3L515.2 134.2M403.9 307.3L403.4 309.8M430.8 288.2L447.3 289M496.7 302.4L504.3 302.7M488.9 147.1L488.1 150.6M403.4 309.8L402.9 312.4M542.3 104.7L545.5 105.8M533.2 228.6L540.1 235.1M471.5 138.1L470.8 143.3M480.1 273.1L478.7 277.1M512.5 290.9L510.1 294.9M449.6 163.4L449.1 168.2M412.3 263.8L429.1 265.2M595.6 154.5L593.5 158.5M479.8 330.9L483 327.3M443.4 306.4L442.6 310.6M488.3 319.5L494.9 319.6M534.5 176.8L533.2 180.4M593.5 158.5L591.4 162.6M540.4 198.2L537.6 199.8M466.8 344.4L473.7 345.1M423.2 324.5L422.5 327.2M495.2 185.4L493 189.2M604 138.3L587.4 137.5M614.5 118L612.4 122.1M454.6 336.3L470.3 335.3M413.5 314.8L411.8 320.5M491.2 193.7L506.7 196.8M524.4 292.2L522.3 296.2M475 84.7L479 84.7M547.1 214.4L546.5 219.7M540.8 113.5L556.2 112.6M481.7 218.3L500.4 222.4M445.5 92.4L464.5 94.5M503.7 95.7L502 101.5M452.9 261.4L471.1 259.8M548.9 130.4L571 128.7M537.3 243.9L535.2 248.2M542.3 231L540.1 235.1M480.3 117.9L477.9 121.8M526.4 288.1L515.4 285.7M571 128.7L591.9 130.2M533.2 228.6L542.3 231M542.3 145.6L565.5 147.5M534.8 271.9L524.5 268.8M513.6 256.4L520.4 261.4M496.5 118L494.3 121.9M459.5 134.8L457.8 137.3M554.6 116.9L573.9 123M487.7 256.8L471.1 259.8M565.5 147.5L581.6 147.2M492 165.4L503.9 163.2M474.2 135.7L471.5 138.1M513.9 312.4L499.1 310.6M503.9 163.2L517.7 164M531.4 256.5L520.4 261.4M443.8 180.5L460.8 179.7M505.9 277.8L517.7 281M454.8 150.7L452.7 154.9M460.8 179.7L483.3 179.9M509 309.2L499.1 310.6M469.1 294.2L482.7 298.8M457.8 323.2L474.3 322.3M458.1 205.4L473.8 205.5M558.2 163.5L556.2 167.7M496.6 180.5L510 183M415.2 311L413.5 314.8M485.2 324.7L473.2 327.9M421 339L433.9 339.1M477.2 196.8L487.4 201.8M452.3 190.6L458.7 193.8M440.5 339.7L452.6 344.7M532.6 101.5L522.3 105.4M470.8 215.1L481.7 218.3M442 335.8L440.5 339.7M453.6 339.8L466.8 344.4M435.5 210.2L455.9 214.3M544.7 221.9L543.7 226.4M482.8 214.5L481.7 218.3M581 182.8L559.6 185.3M495 348.9L485.2 348.3M440.4 233L433.2 234.8M533.4 108.2L532 111.3M475.3 244.4L473.9 247.5M478.1 231L486.3 237M435.6 143.5L435.1 146.1M420.8 220.3L435.1 216.9M492.4 243.5L491 248M478.9 227.8L497 232.1M509.9 150.4L523.4 150.8M435.1 146.1L434.6 148.7M419.3 228L418.8 230.5M555.8 231.4L542.3 231M528.1 123.7L535.7 126.1M463.3 168.1L485 168.1M485.6 261.1L483.6 265M533.7 130.4L546.8 134.1M418.8 230.5L418.3 233.1M525.6 146.7L541.6 150.8M402.9 312.4L402.4 315M445.1 297.6L459.3 298.6M513 138.5L527.4 143.4M507.9 273.2L518.9 276.6M402.4 315L402 317.5M441.5 314.9L452 314.4M504.1 262.9L508.7 268.3M487.3 156L486.7 159.4M607.7 117L611.1 117.5M429.2 176.8L443.8 180.5M549 106.5L552.5 107.2M459.5 186L440.6 188.6M464.4 306.1L462.3 310.7M540.4 198.2L554.8 197.4M551.6 239.5L549.5 243.6M430.5 294.7L445.1 297.6M478.8 336L487.5 335.4M576.3 141.7L581.6 147.2M436.1 141L456.2 142.1M589.3 166.6L587.2 170.7M438.2 201.9L437.5 206.1M478.8 306.2L478 310.6M530.9 215.1L547.1 214.4M520.2 300.3L518.1 304.3M458.4 202.1L458.1 205.4M459.6 238.6L470.4 242.7M435.1 216.9L434 222.7M447.7 323.2L446.6 328.2M495.2 337.3L486.4 338.9M478.1 231L497 232.1M485.2 324.7L491.2 326.9M455.1 219.2L454.1 222.5M517.9 243.4L537.3 243.9M474.4 102.9L484.8 105.1M497.1 344.8L484.5 344.1M469 270.3L481.8 268.2M528.5 284.1L517.7 281M555.8 231.4L543.7 226.4M485.6 261.1L492.1 262.3M519.1 118.3L528.1 123.7M442.5 107.7L464 105.8M464 105.8L483.2 107.9M432.2 244.1L431.3 247.7M542.5 109.1L540.8 113.5M446.7 248L444.7 251.6M450.9 235.2L449.5 239.2M540.1 117.9L537.6 120.4M415.8 245.9L415.3 248.4M508 258.8L496.1 261.3M457.2 247.9L456 252.4M501.2 248L514.8 252.3M428.2 181.9L443.8 180.5M515.2 134.2L529.2 139.2M426.6 303.2L444.1 302.2M441.1 260L440.4 264.3M478.7 277.1L465.6 281M451.1 296.4L445.1 297.6M540.7 174.7L553.8 171.6M430.8 288.2L445.5 293.4M411.8 320.5L424.7 319.5M425.6 311.3L441.5 314.9M480.1 189L493 189.2M449.1 168.2L446.5 172.4M573.7 111.4L577.2 112.1M564 151.3L577.1 156M481.6 332.7L490 331.4M533.2 180.4L531.6 184.9M574.7 195L572.6 199M446.5 87.3L451 84.7M442.6 310.6L441.5 314.9M607.7 117L612.4 122.1M535.8 102.6L533.4 108.2M436.7 333.2L422.2 336M440.5 339.7L453.6 339.8M549.3 181.5L547.6 185.9M506.7 196.8L525.1 202.5M505.5 328.6L503.4 332.7M459.5 186L480.1 189M415.3 248.4L430.7 251.8M580.7 112.8L575.5 117.7M532 111.3L542.5 109.1M527 196.5L537.6 199.8M502.4 214.9L516.8 218.3M487.9 96.7L493.8 98.9M470.3 335.3L467.9 339.6M452.9 226.2L451.9 230.9M519.1 214.3L528 218.7M451.9 230.9L450.9 235.2M461.9 120.9L467.7 124M473.8 112.2L462.4 114.1M504 243.2L501.2 248M569.5 133.9L589.3 134.4M504.3 233.1L508.5 235.2M441.1 260L452.9 261.4M589.3 166.6L578.1 170.8M515.2 246.6L515.3 248M470.1 265.8L469 270.3M560.7 160.4L573.7 159.2M471.5 138.1L456.2 142.1M453.7 256.2L471.1 259.8M552.1 121.7L572.7 125.7M408.9 281.7L408.4 284.3M449 282.3L446.9 286M441.6 112.8L462.4 114.1M565.5 147.5L578.9 150.1M498.4 176.1L512.2 176.5M426.5 276.8L424.3 280.9M536.9 267.9L524.5 268.8M460.6 314.5L476.7 315.5M510 94L513.2 95.1M419.4 298.9L418.3 302.2M513.9 312.4L498 315.3M411.9 266.3L429.1 265.2M458.7 193.8L478.3 193.4M423.7 204.9L437.5 206.1M494.2 307.1L499.1 310.6M428.9 299.2L426.6 303.2M460.8 179.7L481.5 185.3M472.3 209.7L484.3 210.1M601.9 142.3L587.4 137.5M511.8 316.5L498 315.3M457.8 323.2L473.2 327.9M556.1 107.9L542.5 109.1M520.2 300.3L507.5 298.6M452.9 226.2L464.8 227.1M502.6 308.2L499.1 310.6M436.2 345.4L432.3 344.7M435.1 216.9L455.1 219.2M465.7 87.6L475.8 94.1M487.4 201.8L486 206.6M407.2 335.4L421 339M481.7 218.3L479.7 222.6M474.3 322.3L473.2 327.9M504.3 233.1L510.6 231.4M443.1 255.9L453.7 256.2M438.6 128.2L438.1 130.8M502 101.5L522.3 105.4M533.2 228.6L522.7 229.8M453.7 256.2L472.2 255.7M491.9 269.4L508.7 268.3M482.1 112.3L480.3 117.9M473.9 247.5L489.3 252.3M554.6 116.9L552.1 121.7M500.1 104.4L520.2 108.3M448 243.9L457.2 247.9M425.7 194.7L439.3 197.3M508.7 268.3L524.5 268.8M473 285.2L486.4 284.9M520.4 261.4L527.2 265.3M575.5 117.7L573.9 123M531.3 134.5L545.8 139.4M587.4 137.5L584.3 142.1M486.4 284.9L503.7 286.1M505.9 277.8L505.2 281M405.4 299.6L404.9 302.2M546.8 134.1L568.2 139.2M540.1 156.4L538.8 158.6M458.3 302.6L466.1 302.8M518.9 276.6L517.7 281M532.6 101.5L535.8 102.6M469.1 294.2L468.1 299.3M523.4 150.8L521.6 154.7M440.9 318.6L450.3 319.3M482.7 294.4L482.7 298.8M601.9 142.3L599.8 146.4M485 168.1L484.4 172.6M471.7 288.9L469.1 294.2M452.3 190.6L439.6 193.4M407.2 335.4L422.2 336M532.7 276L530.6 280M502.1 168.7L500.2 172.4M496.5 157.9L503.9 163.2M570.5 203.1L568.4 207.1M419.3 228L433.4 230.7M459.5 188.9L458.7 193.8M556.2 167.7L567.5 171.9M438.5 329L436.7 333.2M440.1 120.5L461.9 120.9M459 84.7L463 84.7M401.5 320.1L411.8 320.5M442.4 183.6L440.6 188.6M501.3 336.7L499.2 340.8M572.6 199L552.6 201.2M473.8 205.5L472.3 209.7M467.9 339.6L466.8 344.4M485 338.5L486.4 338.9M478.1 231L476.4 235.6M460.2 225L452.9 226.2M578.9 186.9L559.6 185.3M475.4 130.5L493.5 129.3M478.9 227.8L478.1 231M560 223.3L543.7 226.4M468.2 273L480.1 273.1M493.5 129.3L516.1 129.4M498.7 226.8L497 232.1M469.3 146.4L488.9 147.1M528.1 123.7L516.7 126.5M463.2 290.1L471.7 288.9M488.9 147.1L510.8 147.2M553.7 235.5L542.3 231M519.2 239.1L537.3 243.9M513 138.5L512.3 143.4M492.1 262.3L483.6 265M493.7 265L491.9 269.4M426.3 307.1L443.4 306.4M449.6 163.4L464.5 163.3M529.2 139.2L527.4 143.4M449.5 277.7L465.6 281M443.4 306.4L455.4 307M410.6 323L423.2 324.5M475.6 282L473 285.2M404.4 304.7L416.5 305.9M534.5 176.8L551.8 176.4M496.5 157.9L486.7 159.4M419.3 228L433.3 226.8M430.5 294.7L428.9 299.2M423.2 324.5L431.9 325.6M478.8 336L485 338.5M426.4 344.8L433.9 339.1M491.2 193.7L507.6 192M446.5 172.4L444.6 176M445.5 293.4L445.1 297.6M485 338.5L487.5 335.4M503.7 209.3L521.4 210M531.6 184.9L529.9 188.3M455.8 346.6L466.8 344.4M485.2 324.7L483 327.3M478.9 227.8L498.7 226.8M525.1 202.5L535.1 206.1M560 223.3L544.7 221.9M493.8 323.5L491.2 326.9M573.7 111.4L575.5 117.7M408.2 331.5L407.2 335.4M498.7 226.8L512.7 226.5M516.8 218.3L514.9 222.6M435.6 143.5L454.9 146.5M409.9 276.6L426.5 276.8M475.8 94.1L486.2 99.4M519.2 239.1L538.5 239.5M437.6 133.3L437.1 135.9M577.2 112.1L575.5 117.7M484.8 105.1L483.2 107.9M487.7 256.8L497.1 256.4M455.1 237.8L449.5 239.2M437.1 135.9L436.6 138.4M501.2 248L499.2 252.1M421.3 217.7L420.8 220.3M547.4 247.6L535.2 248.2M467.7 124L477 126.1M487.1 127.6L475.4 130.5M537.8 164.3L558.2 163.5M515.3 248L514.8 252.3M420.8 220.3L420.3 222.9M429.1 265.2L438.7 269.1M470.8 143.3L469.3 146.4M445.9 264L440.4 264.3M485.7 184.2L496.6 180.5M440.4 264.3L450.4 268.3M404.4 304.7L403.9 307.3M463.9 285.8L463.2 290.1M447.3 289L445.5 293.4M564 151.3L561.9 155.9M496.6 180.5L511.2 179.4M458.7 197.1L477.2 196.8M577.1 156L573.7 159.2M484.7 289.4L500.4 294.5M424.3 280.9L432.7 285.4M539 103.7L542.3 104.7M578.9 150.1L577.1 156M515.6 168.4L534.9 172.3M477.2 196.8L489.4 197.3M455.9 214.3L470.8 215.1M503 296L507.5 298.6M597.7 150.4L595.6 154.5M549.3 181.5L531.6 184.9M459.5 186L459.5 188.9M470.8 215.1L482.8 214.5M434.6 148.7L454.9 146.5M539 103.7L533.4 108.2M492.7 310.9L490 314.5M528.5 284.1L526.4 288.1M457 327.6L471.4 331.2M406.9 291.9L421 292.8M527 196.5L525.1 202.5M481.5 185.3L480.1 189M433.4 230.7L440.4 233M493 189.2L491.2 193.7M414.8 251L430.7 251.8M431.2 166.6L449.1 168.2M526.4 288.1L524.4 292.2M467 84.7L471 84.7M519.1 214.3L516.8 218.3M475.7 339.2L484.5 344.1M504.2 206.6L503.7 209.3M475.3 244.4L492.4 243.5M612.4 122.1L595.3 122.1M471 84.7L475 84.7M455.1 219.2L467.3 222.8M492.4 243.5L504 243.2M504.3 233.1L496.1 235M441.1 260L445.9 264M479.7 222.6L478.9 227.8M515.2 246.6L501.2 248M518.1 228.3L522.7 229.8M510.6 231.4L508.5 235.2M445.9 264L452.9 261.4M490.2 272.2L507.9 273.2M444.5 97.5L464.6 99.5M489.3 252.3L487.7 256.8M417.8 235.6L417.3 238.2M533.7 130.4L548.9 130.4M587.2 170.7L578.1 170.8M552.1 121.7L550.4 126M507.9 273.2L522.9 272.9M484.7 289.4L502.3 289.1M413.3 258.7L430 259.4M401.5 320.1L401 322.6M429.7 174.2L444.6 176M573.9 123L572.7 125.7M486.5 163.6L503.9 163.2M508 258.8L512.2 260.3M504.1 262.9L510.7 264.7M502.3 289.1L512.5 290.9M441.1 115.4L462.4 114.1M581.6 147.2L578.9 150.1M455.4 307L464.4 306.1M556.1 107.9L559.6 108.6M435.2 277.8L424.3 280.9M568.2 139.2L566.7 143.6M428.9 299.2L418.3 302.2M478.7 277.1L487.5 279.7M464.4 306.1L478.8 306.2M431.9 325.6L439 323M517.7 164L536.8 168.8M585.1 174.7L583.1 178.8M521.6 154.7L519.4 160M423.2 207.5L437.5 206.1M488.7 278L505.2 281M439 323L447.7 323.2M487.5 335.4L495.2 337.3M482.7 298.8L496.7 302.4M583.1 178.8L581 182.8M530.6 280L526.2 279.1M410 327.4L421.3 331.7M471.3 317.6L475.6 318.5M513.9 312.4L511.8 316.5M487.4 201.8L473.8 205.5M559.6 185.3L559.1 188.7M512.7 226.5L525.1 226.2M475.4 347.7L484.5 344.1M436.7 333.2L442 335.8M465.2 92.8L475.8 94.1M422.5 327.2L421.3 331.7M475.8 94.1L488.5 92.2M519.1 118.3L540.1 117.9M432.2 244.1L448 243.9M439.6 123.1L460.5 125.7M470.3 335.3L475.7 339.2M497.1 256.4L513.6 256.4M595.6 154.5L590.3 149.3M402 317.5L411.8 320.5M500.1 104.4L497.8 110.2M540.1 117.9L554.6 116.9M491.7 134.5L515.2 134.2M497.3 113.4L480.3 117.9M491 248L489.3 252.3M451.9 230.9L462.1 234.8M522.3 105.4L520.2 108.3M515.2 134.2L531.3 134.5M468 151.5L488.1 150.6M529.4 261L527.2 265.3M449.8 272.5L468.2 273M452.9 261.4L470.1 265.8M436.1 141L435.6 143.5M430.7 251.8L443.1 255.9M451.1 296.4L460.4 293M494.3 121.9L493 124.7M488.1 150.6L509.9 150.4M419.8 225.4L419.3 228M425.6 311.3L442.6 310.6M471.5 138.1L490.6 143.1M480.1 273.1L488.7 278M449.1 168.2L463.3 168.1M511.2 179.4L533.2 180.4M471.1 259.8L470.1 265.8M545.5 105.8L549 106.5M410 327.4L422.5 327.2M415.8 245.9L431.3 247.7M452.7 154.9L451.4 158.8M533.2 180.4L549.3 181.5M489.4 197.3L506.7 196.8M462.3 310.7L460.6 314.5M432.1 161.5L449.6 163.4M466.2 155.7L465.2 159.9M556.2 167.7L553.8 171.6M407.4 289.4L422.3 290.3M506.7 196.8L527 196.5M495.2 185.4L508.4 189.8M444.6 176L443.8 180.5M413.5 314.8L424.7 319.5M415.3 248.4L431.3 247.7M472.2 342.1L475.7 339.2M418.8 230.5L433.4 230.7M569.2 168.8L567.5 171.9M502.4 214.9L519.1 214.3M439.6 123.1L461.9 120.9M529.9 188.3L543 192.7M554.8 197.4L552.6 201.2M486 206.6L472.3 209.7M510 183L508.4 189.8M451.9 230.9L463.4 230.2M535.1 206.1L541.1 212.1M504 243.2L515.2 246.6M520.2 108.3L519.8 112.4M557.9 227.4L543.7 226.4M539 263.8L527.2 265.3M433.1 156.3L432.6 158.9M532 111.3L540.8 113.5M471.1 259.8L485.6 261.1M496.5 118L517.4 120.6M432.6 158.9L432.1 161.5M416.8 240.8L416.3 243.3M431.3 247.7L430.7 251.8M415.8 245.9L432.2 244.1M409.4 279.1L424.3 280.9M460.5 125.7L475.4 130.5M426.5 276.8L435.2 277.8M474.2 135.7L491 137.8M416.3 243.3L415.8 245.9M400.5 325.2L400 327.7M531.4 256.5L529.4 261M467 276.6L465.6 281M495.2 185.4L510 183M421 292.8L424.1 295.7M604 138.3L589.3 134.4M454.8 150.7L466.2 155.7M426.4 344.8L421 339M400 327.7L399.5 330.3M563.1 109.3L566.6 110M430 259.4L429.1 265.2M475.8 201.6L487.4 201.8M459.3 298.6L444.1 302.2M566.6 110L570.1 110.7M581 182.8L578.9 186.9M483.3 179.9L496.6 180.5M455.6 331.7L471.4 331.2M415.2 311L424.5 314.6M514.3 173.1L512.2 176.5M468.1 299.3L458.3 302.6M578.9 186.9L576.8 190.9M465.6 347.2L466.8 344.4M481.7 218.3L500.9 218.1M490 314.5L494.9 319.6M509.7 320.5L507.6 324.6M402.9 312.4L413.5 314.8M537.6 199.8L535.1 206.1M421.3 331.7L407.2 335.4M435.1 146.1L454.9 146.5M473.9 247.5L491 248M482.8 214.5L500.9 218.1M434.1 151.2L454.8 150.7M440.4 233L450.9 235.2M554.6 116.9L575.5 117.7M533.4 108.2L542.5 109.1M478.1 231L496.1 235M425.7 194.7L439.6 193.4M520.4 261.4L529.4 261M462.8 109L462.4 114.1M492.4 243.5L501.2 248M531.3 134.5L546.8 134.1M496.1 235L506.3 238.8M505.9 277.8L518.9 276.6M498.7 226.8L510.6 231.4M546.8 134.1L569.5 133.9M440.4 264.3L438.7 269.1M456 252.4L472.2 255.7M463.9 285.8L447.3 289M469.1 294.2L482.7 294.4M457.8 137.3L456.2 142.1M523.4 150.8L541.6 150.8M452.1 263.6L450.4 268.3M424.3 280.9L422.9 286.2M584.1 113.3L587.5 113.8M485 168.1L502.1 168.7M433.6 281.3L432.7 285.4M475.6 318.5L488.3 319.5M503 296L497.9 298M462.3 310.7L478 310.6M536.8 168.8L534.9 172.3M424.2 202.4L437.5 206.1M442 335.8L454.6 336.3M510.1 294.9L507.5 298.6M438.5 329L446.6 328.2M411.4 268.9L428.1 269.2M446.5 172.4L461.5 175.8M572.6 199L554.8 197.4M522.3 296.2L507.5 298.6M581 182.8L562.4 180.2M458.4 202.1L473.8 205.5M447.7 323.2L457 327.6M471.3 317.6L474.3 322.3M497 232.1L510.6 231.4M497.1 344.8L490.4 346.4M468.7 218.3L467.3 222.8M528.1 123.7L537.6 120.4M485.6 261.1L496.1 261.3M509.7 320.5L493.8 323.5M542.5 109.1L556.2 112.6M446.7 248L456 252.4M513 138.5L529.2 139.2M444 100.1L464.6 99.5M599.8 146.4L581.6 147.2M540.1 117.9L552.1 121.7M432.1 161.5L431.7 164M457.2 247.9L473.7 252M487.3 156L496.5 157.9M412.8 261.2L430 259.4M431.7 164L431.2 166.6M429.2 176.8L444.6 176M512.2 260.3L510.7 264.7M517.7 281L515.4 285.7M415.3 248.4L414.8 251M488.1 150.6L507.8 155.9M576.3 141.7L566.7 143.6M488.7 278L487.5 279.7M482.7 298.8L480.3 301.9M399 332.9L398.5 335.4M543 192.7L556.2 193.7M533.2 157L519.4 160M447.3 289L460.4 293M460.4 293L459.3 298.6M531.6 184.9L547.6 185.9M606.1 134.2L604 138.3M471.3 317.6L459.2 318.8M541.1 212.1L549.8 210.6M442.6 310.6L452 314.4M525.1 202.5L537.6 199.8M436.7 333.2L435.4 335.7M549.3 181.5L559.6 185.3M518.1 228.3L525.1 226.2M552.6 201.2L551.3 205.6M453.3 309.9L460.6 314.5M485.2 348.3L484.5 344.1M440.6 118L461.9 120.9M516.8 218.3L528 218.7M444.2 331.8L442 335.8M437.5 206.1L435.5 210.2M487.9 96.7L503.7 95.7M432.2 244.1L437 246.3M450.9 235.2L455.1 237.8M418.3 233.1L433.2 234.8M461.9 120.9L477.9 121.8M508 258.8L513.6 256.4M501.2 248L515.3 248M445 94.9L444.5 97.5M547.4 247.6L537.3 243.9M473.8 112.2L482.1 112.3M463.4 230.2L462.1 234.8M483 84.7L488.5 92.2M476.4 235.6L459.6 238.6M430.7 251.8L430.3 256.7M429.1 265.2L440.4 264.3M428.7 179.4L428.2 181.9M515.2 246.6L535.2 248.2M470.1 265.8L481.8 268.2M521.4 235L538.5 239.5M412.3 263.8L411.9 266.3M447.3 289L463.2 290.1M449 282.3L463.9 285.8M491 137.8L490.6 143.1M400.5 325.2L410 327.4M486.7 159.4L486.5 163.6M416.5 305.9L426.3 307.1M483.6 265L481.8 268.2M465.6 281L473 285.2M424.7 199.8L438.2 201.9M466.2 155.7L451.4 158.8M435.2 277.8L449 282.3M428.9 299.2L444.1 302.2M399 332.9L408.2 331.5M591.4 162.6L589.3 166.6M406.8 343.7L405.8 339.7M431.7 164L449.6 163.4M406.9 291.9L422.3 290.3M594.2 114.9L597.6 115.4M424.1 295.7L419.4 298.9M524.4 292.2L510.1 294.9M529.9 188.3L529.1 193.9M470.3 335.3L478.8 336M606.1 134.2L589.3 134.4M424.5 314.6L424.7 319.5M522.3 296.2L520.2 300.3M418.3 233.1L433.4 230.7M578.1 170.8L567.5 171.9M560 223.3L557.9 227.4M484.4 172.6L498.4 176.1M436.2 345.4L438.8 345.2M535.1 206.1L532.3 209.5M483 327.3L490 331.4M479 84.7L483 84.7M522.4 186.1L508.4 189.8M487.4 201.8L504.2 206.6M465.7 87.6L488.5 92.2M406.8 343.7L416.6 344.3M446 346L452.6 344.7M514.9 222.6L512.7 226.5M465.2 92.8L464.5 94.5M504.3 202L523.1 205.6M463 84.7L465.7 87.6M589.3 166.6L571.9 164.3M489.3 252.3L494.3 253.9M532 111.3L519.8 112.4M500.9 218.1L500.4 222.4M552.1 121.7L573.9 123M426.7 189.6L439.6 193.4M568.4 207.1L551.3 205.6M460.5 125.7L458.8 131.1M497.3 113.4L519.1 118.3M491 248L499.2 252.1M564.2 215.2L549.8 210.6M575.5 117.7L595.3 122.1M581.6 147.2L590.3 149.3M421.8 215.2L435.1 216.9M408.9 281.7L424.3 280.9M421.8 215.2L421.3 217.7M450.4 268.3L449.8 272.5M494.2 307.1L502.6 308.2M517.7 164L537.8 164.3M540.1 156.4L560.7 160.4M432.7 285.4L430.8 288.2M523.4 150.8L533.2 157M456.2 142.1L454.9 146.5M483.3 179.9L485.7 184.2M482.7 294.4L497.9 298M446.9 286L447.3 289M507.5 298.6L504.3 302.7M541.6 150.8L540.1 156.4M485 168.1L500.2 172.4M439.3 197.3L458.7 197.1M580.7 112.8L584.1 113.3M561.9 155.9L560.7 160.4M471.7 288.9L482.7 294.4M462.3 310.7L476.7 315.5M433.9 339.1L440.5 339.7M418.3 302.2L416.5 305.9M490 314.5L488.3 319.5M502.1 168.7L514.3 173.1M434.8 214.5L455.9 214.3M459.5 188.9L478.3 193.4M478 310.6L490 314.5M438.5 329L444.2 331.8M498 315.3L494.9 319.6M402.4 315L413.5 314.8M533.2 228.6L543.7 226.4M446.6 328.2L455.6 331.7M471.4 331.2L470.3 335.3M475 84.7L465.7 87.6M448 243.9L458.2 244.7M486 206.6L503.7 209.3M460.2 225L464.8 227.1M464.6 99.5L486.2 99.4M497 232.1L496.1 235M467.3 222.8L478.9 227.8M496.1 235L494.9 239.1M601 115.9L595.3 122.1M430 259.4L441.1 260M508.5 235.2L506.3 238.8M456 252.4L453.7 256.2M443.5 102.6L464 105.8M572.7 125.7L571 128.7M480.1 273.1L490.2 272.2M492.1 262.3L493.7 265M473.7 252L472.2 255.7M507.6 324.6L491.2 326.9M493.7 265L508.7 268.3M418.3 233.1L417.8 235.6M537.6 120.4L535.7 126.1M529.2 139.2L544.2 142.7M487.7 256.8L496.1 261.3M566.7 143.6L565.5 147.5M471.7 288.9L484.7 289.4M510.7 264.7L524.5 268.8M402 317.5L401.5 320.1M475.6 282L486.4 284.9M437.1 135.9L457.8 137.3M496.5 157.9L505.8 160.3M432.1 161.5L451.4 158.8M423.2 324.5L439 323M552.5 107.2L556.1 107.9M461.5 175.8L460.8 179.7M587.2 170.7L585.1 174.7M487 84.7L483 84.7M507.8 155.9L505.8 160.3M462.8 172.7L461.5 175.8M601 115.9L604.4 116.4M531.6 184.9L544.8 188.5M483.2 176.7L483.3 179.9M452 314.4L450.3 319.3M518.1 304.3L516 308.4M501.3 336.7L495.2 337.3M547.6 185.9L559.1 188.7M555.8 231.4L553.7 235.5M439.6 193.4L439.3 197.3M497 232.1L504.3 233.1M532.7 276L518.9 276.6M542.3 104.7L542.5 109.1M516.8 218.3L526 223.2M539 263.8L529.4 261M480.3 117.9L496.5 118M528 218.7L544.7 221.9M492.1 262.3L496.1 261.3M507.6 324.6L493.8 323.5M484.8 105.1L497.8 110.2M496.5 118L519.1 118.3M459.5 134.8L474.2 135.7M516 308.4L509 309.2M455.1 237.8L459.6 238.6M496.1 261.3L504.1 262.9M474.2 135.7L491.7 134.5M487.1 127.6L493.5 129.3M540.8 113.5L554.6 116.9M515.3 248L534.1 252.1M467 276.6L478.7 277.1M430.5 294.7L445.5 293.4M454.8 150.7L468 151.5M445.9 264L452.1 263.6M470.8 143.3L488.9 147.1M445.5 293.4L451.1 296.4M437 246.3L444.7 251.6M463.9 285.8L471.7 288.9M558.2 163.5L571.9 164.3M490.6 143.1L510.8 147.2M415.2 311L425.6 311.3M485.2 324.7L493.8 323.5M451.4 158.8L464.5 163.3M560 223.3L546.5 219.7M412.8 261.2L429.1 265.2M459.1 275.3L465.6 281M536.8 168.8L553.8 171.6M407.9 286.8L422.3 290.3M553.8 171.6L551.8 176.4M453.3 309.9L452 314.4M492.7 310.9L498 315.3M453.6 339.8L467.9 339.6M444.1 302.2L443.4 306.4M481.5 185.3L493 189.2M433.4 230.7L451.9 230.9M493 189.2L507.6 192M549 106.5L542.5 109.1M490 331.4L487.5 335.4M493.8 98.9L503.7 95.7M482.8 214.5L502.4 214.9M504.2 206.6L521.4 210M467.7 124L477.9 121.8M563.1 109.3L556.2 112.6M479.7 222.6L498.7 226.8M483.2 107.9L482.1 112.3M510.6 231.4L521.4 235M500.4 222.4L512.7 226.5M521.4 235L519.2 239.1M434.1 151.2L433.6 153.8M497.8 110.2L497.3 113.4M457.8 137.3L471.5 138.1M564 151.3L578.9 150.1M522.7 229.8L540.1 235.1M568.4 207.1L549.8 210.6M540.1 235.1L538.5 239.5M433.6 153.8L433.1 156.3M573.9 123L594.3 125.5M458.8 131.1L459.5 134.8M515.6 168.4L536.8 168.8M465.6 281L463.9 285.8M437.6 133.3L459.5 134.8M494.3 253.9L497.1 256.4M417.3 238.2L416.8 240.8M400 327.7L410 327.4M459.1 275.3L449.5 277.7M574.7 195L556.2 193.7M435.2 277.8L433.6 281.3M536.8 168.8L556.2 167.7M459.5 186L481.5 185.3M424.2 202.4L438.2 201.9M428.1 269.2L437.4 272M401 322.6L400.5 325.2M457 327.6L473.2 327.9M506.7 92.7L510 94M438.2 201.9L458.4 202.1M416.6 344.3L405.8 339.7M431.2 166.6L449.6 163.4M559.6 108.6L563.1 109.3M522.3 296.2L510.1 294.9M484.4 172.6L483.2 176.7M458.4 202.1L475.8 201.6M500.2 172.4L498.4 176.1M506.7 92.7L503.7 95.7M446 346L438.8 345.2M455.1 219.2L468.7 218.3M491.2 326.9L490 331.4M478.3 193.4L489.4 197.3M504.3 202L504.2 206.6M510.6 231.4L522.7 229.8M484.3 210.1L482.8 214.5M511.8 316.5L509.7 320.5M475.8 94.1L464.5 94.5M446.7 248L457.2 247.9M599.8 146.4L584.3 142.1M447 84.7L446.5 87.3M413.3 258.7L430.3 256.7M429.7 174.2L446.5 172.4M497.3 113.4L496.5 118M434 222.7L452.9 226.2M457.2 247.9L473.9 247.5M504.1 262.9L512.2 260.3M494.9 239.1L492.4 243.5M430.7 169.1L430.2 171.7M594.2 114.9L595.3 122.1M476.4 235.6L475.1 239.9M512.2 260.3L520.4 261.4M478.7 277.1L488.7 278M430.2 171.7L429.7 174.2M414.3 253.6L413.8 256.1M474.4 102.9L483.2 107.9M494.3 121.9L516.7 126.5M524.4 292.2L512.5 290.9M591.9 130.2L589.3 134.4M469 270.3L449.8 272.5M488.7 278L505.9 277.8M413.8 256.1L413.3 258.7M398 338L397.5 340.5M535.7 126.1L548.9 130.4M471.1 259.8L483.6 265M446.9 286L430.8 288.2M460.4 293L469.1 294.2M524.5 268.8L522.9 272.9M541.6 150.8L533.2 157M397.5 340.5L397 343.1M526.2 279.1L517.7 281M433.1 156.3L451.4 158.8M527.4 143.4L542.3 145.6M486.7 159.4L503.9 163.2M500.4 294.5L497.9 298M442.6 310.6L453.3 309.9M466.2 155.7L486.7 159.4M478 310.6L476.7 315.5M426.6 303.2L416.5 305.9M422.5 327.2L437.8 327.6M466.1 302.8L478.8 306.2M568.4 207.1L566.3 211.2M513.2 95.1L503.7 95.7M446.6 328.2L444.2 331.8M402 317.5L413.5 314.8M583.1 178.8L562.4 180.2M450.3 319.3L447.7 323.2M499.2 340.8L497.1 344.8M486 206.6L484.3 210.1M535.1 206.1L549.8 210.6M481.6 332.7L470.3 335.3M479 84.7L465.7 87.6M464.6 99.5L474.4 102.9M467.3 222.8L464.8 227.1M504 243.2L517.9 243.4M514.9 222.6L525.1 226.2M430.7 251.8L444.7 251.6M474.4 102.9L486.2 99.4M494.3 121.9L517.4 120.6M526 223.2L533.2 228.6M470.1 265.8L483.6 265M604.4 116.4L595.3 122.1M517.4 120.6L528.1 123.7M471.5 138.1L491 137.8M449.5 239.2L448 243.9M443 105.2L464 105.8M449 282.3L465.6 281M438.1 130.8L458.8 131.1M431.3 247.7L444.7 251.6M491 137.8L513 138.5M496.1 261.3L493.7 265M416.8 240.8L432.5 240.2M452.7 154.9L466.2 155.7M433.2 234.8L449.5 239.2M433.1 156.3L452.7 154.9M510.7 264.7L508.7 268.3M420.3 222.9L434 222.7M514.8 252.3L531.4 256.5M465.6 281L475.6 282M419.4 298.9L428.9 299.2M466.2 155.7L487.3 156M527.2 265.3L524.5 268.8M556.2 167.7L569.2 168.8M487.5 279.7L486.4 284.9M421 292.8L430.5 294.7M428.9 299.2L445.1 297.6M413.5 314.8L424.5 314.6M430 259.4L440.4 264.3M569.2 168.8L578.1 170.8M505.2 281L503.7 286.1M510.8 147.2L509.9 150.4M459.3 298.6L458.3 302.6M424.5 314.6L441.5 314.9M483.2 176.7L460.8 179.7M510 183L522.4 186.1M514.3 173.1L534.5 176.8M464.5 163.3L463.3 168.1M468.1 299.3L466.1 302.8M490.3 86L483 84.7M483 327.3L491.2 326.9M500.1 90L488.5 92.2M547.6 185.9L544.8 188.5M426.4 344.8L436.2 345.4M465.6 347.2L473.7 345.1M487.4 201.8L504.3 202M551.8 176.4L549.3 181.5M499.2 340.8L495.2 337.3M473.7 345.1L484.5 344.1M537.6 199.8L551.3 205.6M458.7 193.8L439.3 197.3M421.3 331.7L422.2 336M507.6 192L527 196.5M427.2 187L440.6 188.6M545.5 105.8L542.5 109.1M488.5 92.2L487.9 96.7M528 218.7L526 223.2M422.2 212.6L434.8 214.5M521.4 210L519.1 214.3M409.4 279.1L426.5 276.8M460.5 125.7L477 126.1M446 89.8L445.5 92.4M513.9 312.4L509 309.2M479 84.7L488.5 92.2M421.8 215.2L434.8 214.5M462.1 234.8L459.6 238.6M540.8 113.5L540.1 117.9M445.5 92.4L445 94.9M429.7 174.2L429.2 176.8M493 124.7L493.5 129.3M556.2 112.6L554.6 116.9M535.2 248.2L534.1 252.1M540.1 156.4L561.9 155.9M477.9 121.8L477 126.1M429.2 176.8L428.7 179.4M516.7 126.5L516.1 129.4M413.3 258.7L412.8 261.2M490.6 143.1L488.9 147.1M514.3 173.1L534.9 172.3M412.8 261.2L412.3 263.8M512.3 143.4L510.8 147.2M451.4 158.8L449.6 163.4M534.9 172.3L540.7 174.7M442 110.3L462.4 114.1M452.3 190.6L459.5 188.9M487 84.7L490.3 86M541.1 259.8L531.4 256.5M465.2 159.9L464.5 163.3M519.4 160L537.8 164.3M399.5 330.3L408.2 331.5M459.5 188.9L480.1 189M424.7 319.5L423.2 324.5M587.5 113.8L590.8 114.4M499.1 310.6L498 315.3M473.8 205.5L486 206.6M564.2 215.2L562.1 219.3M508.4 189.8L507.6 192M440.4 233L451.9 230.9M473.2 327.9L471.4 331.2M460.2 225L467.3 222.8M552.5 107.2L542.5 109.1M523.1 205.6L521.4 210M479.8 330.9L481.6 332.7M496.1 235L508.5 235.2M566.6 110L556.2 112.6M591.4 162.6L571.9 164.3M468.7 218.3L479.7 222.6M500.4 222.4L498.7 226.8M456.4 210L470.8 215.1M456 252.4L473.7 252M497.8 110.2L482.1 112.3M398 338L405.8 339.7M414.3 253.6L430.3 256.7M442.5 107.7L442 110.3M430.7 169.1L446.5 172.4M522.7 229.8L521.4 235M599.8 146.4L590.3 149.3M433.3 226.8L433.4 230.7M426.2 192.2L425.7 194.7M404.9 302.2L418.3 302.2M537.6 120.4L552.1 121.7M566.3 211.2L549.8 210.6M487.3 156L507.8 155.9M494.3 253.9L487.7 256.8M470.4 242.7L475.3 244.4M475.6 282L487.5 279.7M595.3 122.1L594.3 125.5M409.9 276.6L409.4 279.1M475.4 130.5L459.5 134.8M437.1 135.9L459.5 134.8M499.2 252.1L497.1 256.4M428.1 269.2L426.5 272.7M399.5 330.3L410 327.4M430.3 256.7L441.1 260M576.3 141.7L584.3 142.1M486.3 237L492.4 243.5M438.7 269.1L437.4 272M585.1 174.7L567.5 171.9M478.8 306.2L494.2 307.1M481.8 268.2L490.2 272.2M459.3 298.6L468.1 299.3M533.2 157L538.8 158.6M447.7 323.2L457.8 323.2M422.9 286.2L422.3 290.3M452 314.4L460.6 314.5M611.1 117.5L614.5 118M478.3 193.4L477.2 196.8M405.8 339.7L421 339M492 165.4L502.1 168.7M497.9 298L496.7 302.4M573.7 111.4L556.2 112.6M408.2 331.5L421.3 331.7M440.6 188.6L439.6 193.4M549.5 243.6L547.4 247.6M528.5 284.1L526.2 279.1M485.2 348.3L490.4 346.4M476.7 315.5L475.6 318.5M443.8 180.5L442.4 183.6M444.2 331.8L454.6 336.3M509.7 320.5L494.9 319.6M437.5 206.1L456.4 210M455.8 346.6L465.6 347.2M450.9 235.2L462.1 234.8M549.5 243.6L537.3 243.9M458.1 205.4L472.3 209.7M434 222.7L433.3 226.8M446 89.8L465.2 92.8M454.1 222.5L452.9 226.2M462.9 117.5L461.9 120.9M487.1 127.6L493 124.7M597.6 115.4L595.3 122.1M397 343.1L406.8 343.7M486.3 237L475.1 239.9M470.8 143.3L490.6 143.1M444.5 97.5L444 100.1M517.4 120.6L516.7 126.5M442.5 107.7L462.8 109M535.7 126.1L533.7 130.4M463.9 285.8L473 285.2M444.7 251.6L443.1 255.9M550.4 126L548.9 130.4M416.8 240.8L432.2 244.1M527.4 143.4L525.6 146.7M483.6 265L491.9 269.4M503.7 286.1L502.3 289.1M549.3 181.5L562.4 180.2M432.6 158.9L451.4 158.8M544.2 142.7L542.3 145.6M553.8 171.6L567.5 171.9M515.4 285.7L512.5 290.9M466.1 302.8L464.4 306.1M419.8 225.4L433.3 226.8M527 196.5L540.4 198.2M424.1 295.7L428.9 299.2M493 189.2L508.4 189.8M424.5 314.6L440.9 318.6M480.3 301.9L478.8 306.2M516.5 96.1L503.7 95.7M493.6 87.4L488.5 92.2M519.1 214.3L530.9 215.1M526.1 99.4L522.3 100.7M549.5 243.6L538.5 239.5M453.3 178.2L443.8 180.5M504.2 206.6L523.1 205.6M522.4 186.1L529.9 188.3M463.4 230.2L478.1 231M544.8 188.5L543 192.7M551.3 205.6L549.8 210.6M499.2 340.8L486.4 338.9M441.5 314.9L440.9 318.6M455.9 214.3L435.1 216.9M479.7 222.6L500.4 222.4M440.5 339.7L432.3 344.7M515.2 246.6L517.9 243.4M526 223.2L525.1 226.2M570.5 203.1L551.3 205.6M521.4 235L540.1 235.1M489.3 252.3L499.2 252.1M500.9 218.1L514.9 222.6M410.4 274L426.5 276.8M607.7 117L595.3 122.1M464.8 227.1L463.4 230.2M441.6 112.8L441.1 115.4M400.5 325.2L410.6 323M433.2 234.8L432.5 240.2M536.9 267.9L527.2 265.3M514.8 252.3L513.6 256.4M437.6 133.3L458.8 131.1M518.1 304.3L502.6 308.2M425.2 197.3L424.7 199.8M516.1 129.4L515.2 134.2M568.2 139.2L587.4 137.5M435.2 277.8L449.5 277.7M534.1 252.1L531.4 256.5M477 126.1L475.4 130.5M505.2 281L486.4 284.9M424.1 295.7L430.5 294.7M469 270.3L468.2 273M399.5 330.3L399 332.9M456.2 142.1L469.3 146.4M502.6 308.2L509 309.2M570.1 110.7L573.7 111.4M541.6 150.8L561.9 155.9M561.9 155.9L573.7 159.2M513.2 95.1L516.5 96.1M534.9 172.3L534.5 176.8M474.3 322.3L485.2 324.7M576.8 190.9L574.7 195M503.4 91.3L488.5 92.2M441.1 115.4L462.9 117.5M507.6 192L506.7 196.8M507.6 324.6L505.5 328.6M543.2 255.7L531.4 256.5M540.7 174.7L534.5 176.8M545.3 251.7L543.2 255.7M529.1 193.9L527 196.5M426.7 189.6L440.6 188.6M411.8 320.5L423.2 324.5M480.1 189L491.2 193.7M475.4 347.7L485.2 348.3M491 248L501.2 248M494.9 239.1L506.3 238.8M422.2 336L433.9 339.1M445 94.9L464.5 94.5M473.8 112.2L483.2 107.9M508.5 235.2L519.2 239.1M518.9 276.6L526.2 279.1M516.7 126.5L493.5 129.3M572.7 125.7L591.9 130.2M473.7 252L487.7 256.8M482.7 294.4L500.4 294.5M537.6 120.4L550.4 126M541.6 150.8L564 151.3M566.7 143.6L581.6 147.2M470.4 242.7L473.9 247.5M500.4 294.5L503 296M437.4 272L426.5 276.8M502.1 168.7L515.6 168.4M519.4 160L517.7 164M444.6 176L461.5 175.8M478 310.6L492.7 310.9M422.3 290.3L421 292.8M545.8 139.4L566.7 143.6M442.4 183.6L459.5 186M585.1 174.7L564.4 176.8M538.8 158.6L537.8 164.3M571.9 164.3L556.2 167.7M446.6 328.2L457 327.6M496.7 302.4L494.2 307.1M507.8 155.9L519.4 160M462.8 172.7L483.2 176.7M452 314.4L459.2 318.8M432.3 344.7L438.8 345.2M504.3 302.7L502.6 308.2M479.8 330.9L471.4 331.2M532.7 276L526.2 279.1M488.3 319.5L474.3 322.3M541.1 259.8L529.4 261M458.7 193.8L477.2 196.8M456.4 210L455.9 214.3M463 84.7L467 84.7M570.1 110.7L556.2 112.6M488.5 92.2L503.7 95.7M472.3 209.7L470.8 215.1M482.1 112.3L497.3 113.4M601.9 142.3L584.3 142.1M397.5 340.5L405.8 339.7M413.8 256.1L430.3 256.7M430.2 171.7L446.5 172.4M462.4 114.1L462.9 117.5M464.5 94.5L464.6 99.5M529.2 139.2L545.8 139.4M520.2 300.3L504.3 302.7M597.7 150.4L590.3 149.3M470.4 242.7L458.2 244.7M404.4 304.7L418.3 302.2M496.5 157.9L507.8 155.9M475.1 239.9L475.3 244.4M430.3 256.7L430 259.4M431.2 166.6L430.7 169.1M548.9 130.4L546.8 134.1M446.5 172.4L462.8 172.7M445.5 293.4L460.4 293M443.1 255.9L441.1 260M414.8 251L414.3 253.6M481.8 268.2L480.1 273.1M477.9 121.8L493 124.7M522.9 272.9L518.9 276.6M462.8 172.7L484.4 172.6M491.9 269.4L490.2 272.2M398.5 335.4L398 338M565.5 147.5L541.6 150.8M547.6 185.9L559.6 185.3M492 165.4L485 168.1M473 285.2L484.7 289.4M577.2 112.1L580.7 112.8M553.8 171.6L564.4 176.8M537.6 199.8L552.6 201.2M503.9 163.2L502.1 168.7M435.6 143.5L456.2 142.1M422.7 210.1L435.5 210.2M444.1 302.2L455.4 307M424.7 319.5L439 323M572.6 199L570.5 203.1M519.7 97.2L522.3 100.7M528 218.7L546.5 219.7M460.8 179.7L442.4 183.6M467.9 339.6L475.7 339.2M503.4 332.7L501.3 336.7M458.1 205.4L456.4 210M455.1 237.8L462.1 234.8M556.2 193.7L554.8 197.4M446 89.8L465.7 87.6M486.2 99.4L484.8 105.1M462.1 234.8L476.4 235.6M549.8 210.6L547.1 214.4M515.3 248L535.2 248.2M445.5 92.4L465.2 92.8M455 84.7L465.7 87.6M406.4 294.5L419.4 298.9M437 246.3L431.3 247.7M428.2 181.9L427.7 184.5M497.8 110.2L519.8 112.4M477.9 121.8L494.3 121.9M401.5 320.1L410.6 323M452.1 263.6L470.1 265.8M424.3 280.9L433.6 281.3M438.6 128.2L458.8 131.1M411.9 266.3L411.4 268.9M433.6 281.3L449 282.3M503 296L510.1 294.9M459.1 275.3L467 276.6M416.3 243.3L432.2 244.1M493.6 87.4L496.9 88.7M475.4 130.5L491.7 134.5M454.9 146.5L454.8 150.7M499.2 252.1L513.6 256.4M515.4 285.7L502.3 289.1M468.2 273L478.7 277.1M492.7 310.9L499.1 310.6M496.9 88.7L500.1 90M469.3 146.4L468 151.5M416.6 344.3L421 339M597.6 115.4L601 115.9M573.7 159.2L571.9 164.3M445.1 297.6L444.1 302.2M473.2 327.9L479.8 330.9M496.9 88.7L488.5 92.2M426.3 307.1L425.6 311.3M557.9 227.4L555.8 231.4M529.4 100.4L522.3 100.7M500.2 172.4L512.2 176.5M611.1 117.5L612.4 122.1M593.5 158.5L573.7 159.2M512.2 176.5L511.2 179.4M452.6 344.7L466.8 344.4M410.6 323L410 327.4M416.6 344.3L426.4 344.8M484.3 210.1L502.4 214.9M406.4 294.5L424.1 295.7M475.8 94.1L487.9 96.7M487.9 96.7L486.2 99.4M485.7 184.2L493 189.2M530.9 215.1L528 218.7M467 84.7L465.7 87.6M484.8 105.1L500.1 104.4M573.9 123L595.3 122.1M493.8 98.9L502 101.5M503.7 209.3L502.4 214.9M494.9 239.1L504 243.2M568.2 139.2L576.3 141.7M462.9 117.5L477.9 121.8M446.5 87.3L446 89.8M519.8 112.4L519.1 118.3M576.3 141.7L587.4 137.5M521.6 154.7L533.2 157M472.2 255.7L471.1 259.8M482.7 298.8L497.9 298M533.2 157L540.1 156.4M484.4 172.6L500.2 172.4M471.3 317.6L476.7 315.5M500.2 172.4L514.3 173.1M436.7 333.2L444.2 331.8M440.6 188.6L452.3 190.6M426.6 303.2L426.3 307.1M537.8 164.3L556.2 167.7M422.5 327.2L438.5 329M440.6 118L462.9 117.5M444.2 331.8L455.6 331.7M509.7 320.5L498 315.3M505.8 160.3L517.7 164M437.5 206.1L458.1 205.4M411.8 320.5L410.6 323M485.7 184.2L495.2 185.4M437.8 327.6L446.6 328.2M450.3 319.3L457.8 323.2M480.1 189L478.3 193.4M434 222.7L454.1 222.5M458.7 197.1L475.8 201.6M481.6 332.7L478.8 336M459.2 318.8L474.3 322.3M422.2 336L421 339M454.1 222.5L460.2 225M476.4 235.6L486.3 237M455.9 214.3L468.7 218.3M435.4 335.7L433.9 339.1M522.3 100.7L522.3 105.4M486.3 237L496.1 235M526 223.2L543.7 226.4M443.5 102.6L443 105.2" stroke="#2a1000" stroke-opacity="0.88" stroke-width="0.62" fill="none"/></g>
<g clip-path="url(#fc)"><path d="M321.4 350.1L330.6 350.7M292.1 336.8L295.5 348.5M495 348.9L495 361M227.8 333L239 333.7M275 347.2L285.6 347.9M159.9 328.9L148.2 339.3M423.1 344.6L434.6 357.2M285.6 347.9L295.5 348.5M368 341.3L383.6 342.3M356.8 340.7L350.8 346.8M308.9 337.8L325.4 338.8M248.4 334.2L262.3 341.4M264.4 335.2L263.3 341.8M239 333.7L248.4 334.2M159.9 328.9L171.7 340.7M308.9 337.8L295.5 348.5M325.4 338.8L340 339.7M354.8 352.2L366 352.9M295.5 348.5L310.8 349.5M248.4 334.2L246.8 345.4M383.6 342.3L391.2 354.5M456.4 346.6L447.7 358M246.8 345.4L263.4 346.5M366 352.9L381 353.9M472.6 347.6L459.1 358.7M394.3 342.9L407.4 355.5M472.6 347.6L479.7 353.8M308.9 337.8L321.4 350.1M340 339.7L356.8 340.7M176.9 330L184 337.2M277.1 335.9L292.1 336.8M423.1 344.6L433.2 345.2M204.2 331.6L213.6 343.4M381 353.9L391.2 354.5M277.1 335.9L275 347.2M246.8 345.4L241.3 338.7M409 343.8L418.9 356.2M292.1 336.8L308.9 337.8M330.6 350.7L344.6 351.6M459.1 358.7L475.4 359.8M227.8 333L213.6 343.4M391.2 354.5L407.4 355.5M132.6 327.3L134.5 338.4M356.8 340.7L366 352.9M475.4 359.8L479.7 353.8M495 348.9L492.2 360.8M407.4 355.5L418.9 356.2M344.6 351.6L354.8 352.2M433.2 345.2L444.4 345.9M444.4 345.9L434.6 357.2M383.6 342.3L394.3 342.9M263.4 346.5L263.3 341.8M444.4 345.9L456.4 346.6M475.4 359.8L492.2 360.8M239 333.7L230.1 344.4M144.2 328L148.2 339.3M394.3 342.9L409 343.8M418.9 356.2L434.6 357.2M492.2 360.8L495 361M368 341.3L366 352.9M246.8 345.4L262.3 341.4M340 339.7L350.8 346.8M434.6 357.2L447.7 358M134.5 338.4L148.2 339.3M456.4 346.6L472.6 347.6M383.6 342.3L381 353.9M472.6 347.6L489.4 348.6M409 343.8L423.1 344.6M148.2 339.3L160 340M325.4 338.8L330.6 350.7M356.8 340.7L368 341.3M176.9 330L171.7 340.7M489.4 348.6L495 348.9M447.7 358L459.1 358.7M190.1 330.7L188.3 341.8M120 326.6L125 337.8M188.3 341.8L184 337.2M190.1 330.7L184 337.2M190.1 330.7L204.2 331.6M239 333.7L241.3 338.7M292.1 336.8L285.6 347.9M204.2 331.6L200.1 342.5M340 339.7L344.6 351.6M472.6 347.6L475.4 359.8M132.6 327.3L144.2 328M423.1 344.6L418.9 356.2M356.8 340.7L354.8 352.2M230.1 344.4L241.3 338.7M125 337.8L134.5 338.4M213.4 332.1L213.6 343.4M144.2 328L159.9 328.9M159.9 328.9L160 340M263.3 341.8L262.3 341.4M227.8 333L230.1 344.4M433.2 345.2L434.6 357.2M144.2 328L134.5 338.4M277.1 335.9L263.3 341.8M159.9 328.9L176.9 330M200.1 342.5L213.6 343.4M444.4 345.9L447.7 358M264.4 335.2L262.3 341.4M344.6 351.6L350.8 346.8M213.6 343.4L230.1 344.4M394.3 342.9L391.2 354.5M263.4 346.5L262.3 341.4M308.9 337.8L310.8 349.5M275 347.2L263.3 341.8M160 340L171.7 340.7M176.9 330L190.1 330.7M489.4 348.6L479.7 353.8M325.4 338.8L321.4 350.1M456.4 346.6L459.1 358.7M120 326.6L132.6 327.3M368 341.3L381 353.9M248.4 334.2L264.4 335.2M230.1 344.4L246.8 345.4M409 343.8L407.4 355.5M204.2 331.6L213.4 332.1M171.7 340.7L188.3 341.8M132.6 327.3L125 337.8M310.8 349.5L321.4 350.1M354.8 352.2L350.8 346.8M489.4 348.6L492.2 360.8M340 339.7L330.6 350.7M248.4 334.2L241.3 338.7M171.7 340.7L184 337.2M263.4 346.5L275 347.2M188.3 341.8L200.1 342.5M264.4 335.2L277.1 335.9M492.2 360.8L479.7 353.8M277.1 335.9L285.6 347.9M190.1 330.7L200.1 342.5M213.4 332.1L227.8 333" stroke="#3a3a00" stroke-opacity="0.6" stroke-width="0.55" fill="none"/></g>
<path d="M144 328L495 348.9" stroke="#6a6a10" stroke-width="0.6"/>
</g>
<g>
<path d="M818 341.6V324" stroke="#1e2aa8" stroke-width="1.7"/><path d="M815.5 326L818 319.8L820.5 326z" fill="#1e2aa8"/>
<path d="M818 341.6H800" stroke="#a82020" stroke-width="1.6"/><path d="M801.5 339.3L795.3 341.6L801.5 343.9z" fill="#a82020"/>
<path d="M818 341.6L814 348.5" stroke="#1e7a20" stroke-width="1.5"/>

</g>
<path d="M190.4 378.5v4M220.9 378.5v4M296 378.5v4" stroke="#b8b8b8" stroke-width="0.5"/><rect x="285.4" y="378.3" width="4.2" height="4.4" fill="#fff" stroke="#999" stroke-width="0.5"/>
<path d="M536.6 388.2l2.4 2.6M539 388.2l-2.4 2.6" stroke="#222" stroke-width="0.7"/><path d="M200.5 395.5l1.5-1.3l1.5 1.3" stroke="#777" stroke-width="0.5" fill="none"/>
<path d="M146 397.3h4.6l-1.8 2.2v2.4l-1 0.6v-3z" fill="none" stroke="#666" stroke-width="0.5"/>
<path d="M143.5 403.7H540.5M143.5 413.2H540.5M143.5 421.8H540.5" stroke="#ececec" stroke-width="0.6"/>
<rect x="146" y="406.5" width="6" height="4.5" fill="#e8e8e8" stroke="#bdbdbd" stroke-width="0.4"/><path d="M147.3 408.7h3.4" stroke="#777" stroke-width="0.6"/><path d="M248.5 408.7h1.5" stroke="#999" stroke-width="0.5"/>
<path d="M846.8 388.2l2.4 2.6M849.2 388.2l-2.4 2.6" stroke="#222" stroke-width="0.7"/>
<circle cx="548.5" cy="397.8" r="2.4" fill="#fff" stroke="#555" stroke-width="0.6"/><path d="M561 395.5l2.5 4.5h-5z" fill="none" stroke="#c0c0c0" stroke-width="0.5"/><rect x="569.8" y="394.2" width="9.2" height="7.5" fill="#c8d3de"/><circle cx="574.4" cy="397.9" r="2.3" fill="#fff" stroke="#3060a0" stroke-width="0.5"/><path d="M574.4 397v2" stroke="#3060a0" stroke-width="0.6"/><rect x="586.5" y="395.5" width="6" height="4.8" fill="#f4f4f4" stroke="#8a2a40" stroke-width="0.6"/><path d="M586.5 395.5l6 4.8M592.5 395.5l-6 4.8" stroke="#c03040" stroke-width="0.5"/>
<circle cx="549" cy="408.4" r="2.3" fill="#fff" stroke="#666" stroke-width="0.5"/><path d="M549 407.6v2" stroke="#666" stroke-width="0.6"/>
<path d="M570.2 439.5v5M611 439.5v5" stroke="#c8c8c8" stroke-width="0.5"/>
<circle cx="593.5" cy="451.5" r="2.3" fill="#f0f0f0" stroke="#777" stroke-width="0.6"/><path d="M595 453l2 2" stroke="#555" stroke-width="0.8"/>
<path d="M603.7 448.5v7M600.3 452h7" stroke="#f0a030" stroke-width="2"/>
<circle cx="614" cy="452" r="3.3" fill="#b07030"/><circle cx="613" cy="451" r="1.2" fill="#e8c080"/>
<rect x="619.8" y="447.3" width="9.5" height="9.5" fill="#d4d4d4"/><circle cx="624" cy="451.6" r="2.3" fill="#fff" stroke="#666" stroke-width="0.6"/><path d="M625.5 453.2l2 2" stroke="#444" stroke-width="0.8"/>
<circle cx="635" cy="452" r="2.8" fill="none" stroke="#e09030" stroke-width="1.2"/><circle cx="635" cy="452" r="1" fill="#a05020"/>
<path d="M641 448v8" stroke="#d0d0d0" stroke-width="0.5"/>
<rect x="645" y="448.5" width="5.6" height="6.5" fill="#f6e0c8" stroke="#e08040" stroke-width="0.6" stroke-dasharray="1 0.6"/>
<path d="M655 456l4-4.5" stroke="#904020" stroke-width="1.6"/><path d="M657.5 450l3-2.5" stroke="#c06030" stroke-width="1"/>
<path d="M667 450l3-1.5l3 1.5v3.5l-3 1.5l-3-1.5z" fill="none" stroke="#888" stroke-width="0.6"/><path d="M675.5 451.8h1.6l-0.8 0.8z" fill="#666"/>
<path d="M683 455.5v-5M683 455.5h6" stroke="#3a9a3a" stroke-width="0.7" fill="none"/><circle cx="687" cy="450" r="2" fill="#5ab05a"/>
<path d="M729.4 448.5v7.5M788.5 448.5v7.5M812.3 448.5v7.5M852.6 448.5v7.5" stroke="#333" stroke-width="0.6"/></svg>
</body></html>
